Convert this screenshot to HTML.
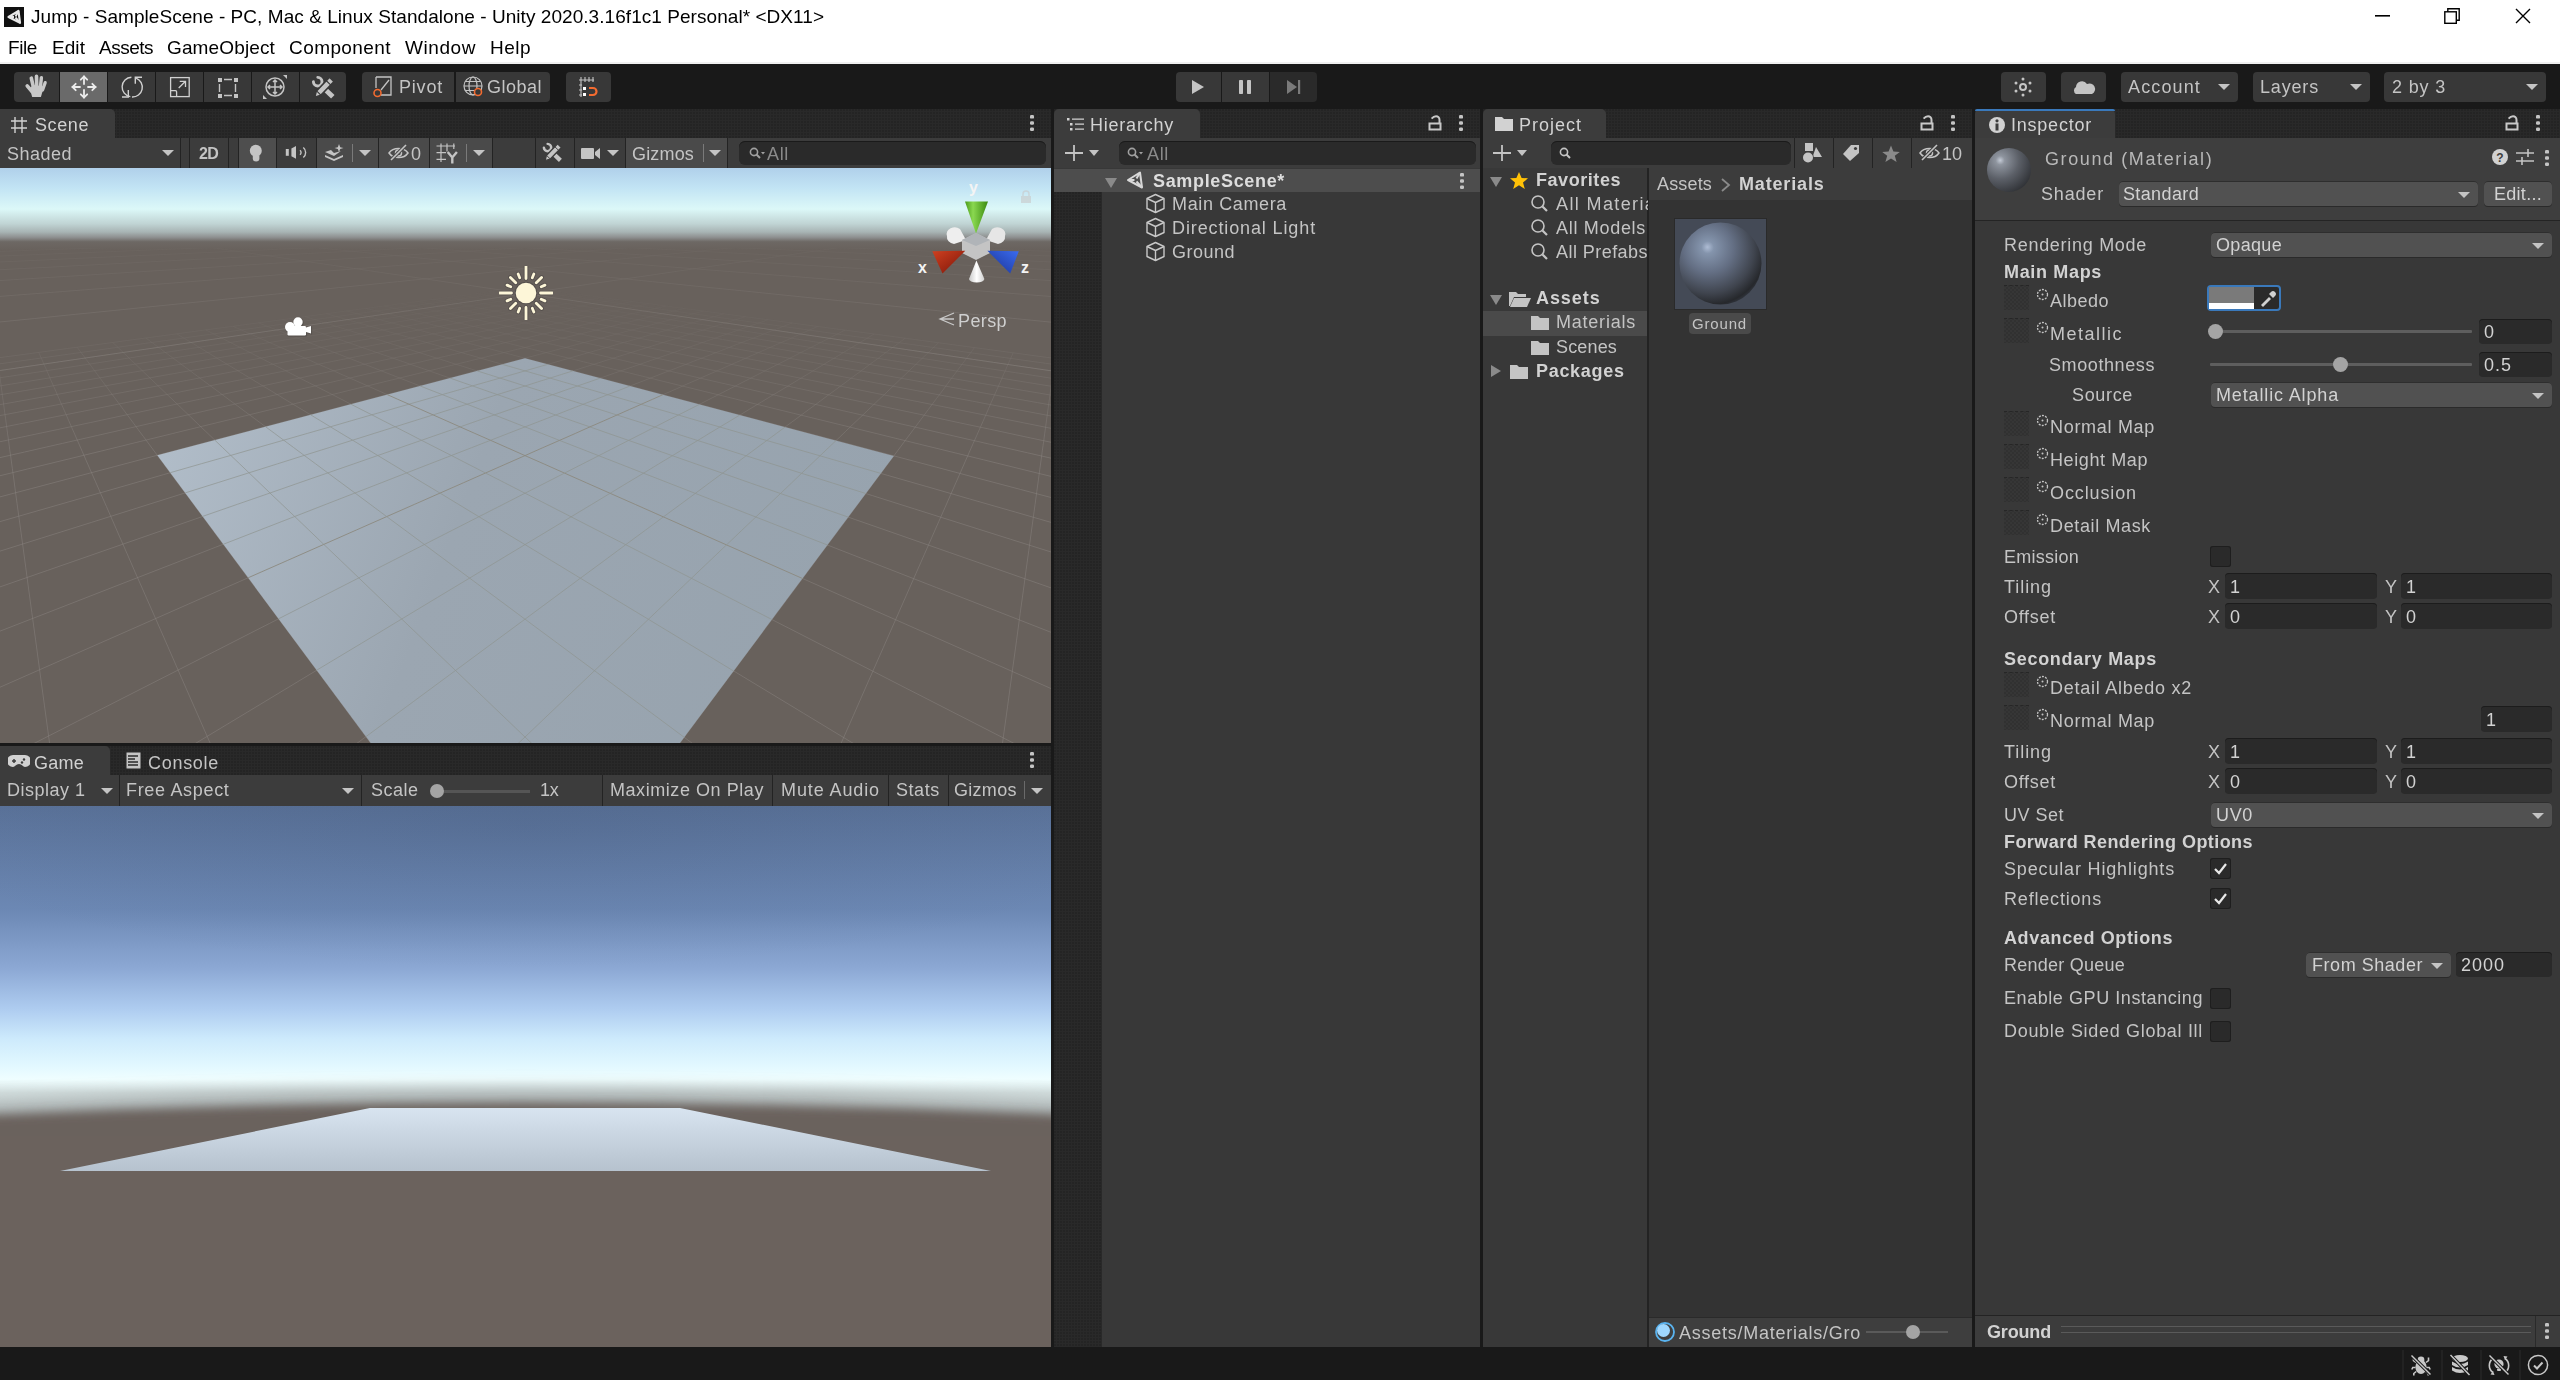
<!DOCTYPE html><html><head><meta charset="utf-8"><style>html,body{margin:0;padding:0;width:2560px;height:1380px;overflow:hidden;background:#191919;}body>div,body>svg{position:absolute;}.t{position:absolute;white-space:nowrap;font-family:"Liberation Sans",sans-serif;will-change:transform;}</style></head><body>
<div style="left:0px;top:0px;width:2560px;height:62px;background:#ffffff;"></div>
<div style="left:0px;top:62px;width:2560px;height:2px;background:#f0f0f0;"></div>
<div style="left:4px;top:7px;width:20px;height:20px;background:#111111;"></div>
<svg style="left:4px;top:7px;" width="20" height="20" viewBox="0 0 20 20"><path d="M4.5 10 L14.5 4 L16 15.8 Z" fill="none" stroke="#e8e8e8" stroke-width="2.2" stroke-linejoin="round"/><path d="M4.5 10 H10 M14.5 4 L11.5 9.5 M16 15.8 L11.5 10.5" stroke="#e8e8e8" stroke-width="2"/></svg>
<div class="t" style="left:31px;top:7.32px;font-size:19px;line-height:19px;color:#000000;letter-spacing:0.052px;">Jump - SampleScene - PC, Mac &amp; Linux Standalone - Unity 2020.3.16f1c1 Personal* &lt;DX11&gt;</div>
<div class="t" style="left:8px;top:38.42px;font-size:19px;line-height:19px;color:#000000;letter-spacing:-0.403px;">File</div>
<div class="t" style="left:52px;top:38.42px;font-size:19px;line-height:19px;color:#000000;letter-spacing:0.065px;">Edit</div>
<div class="t" style="left:99px;top:38.42px;font-size:19px;line-height:19px;color:#000000;letter-spacing:-0.503px;">Assets</div>
<div class="t" style="left:167px;top:38.42px;font-size:19px;line-height:19px;color:#000000;letter-spacing:0.135px;">GameObject</div>
<div class="t" style="left:289px;top:38.42px;font-size:19px;line-height:19px;color:#000000;letter-spacing:0.420px;">Component</div>
<div class="t" style="left:405px;top:38.42px;font-size:19px;line-height:19px;color:#000000;letter-spacing:0.571px;">Window</div>
<div class="t" style="left:490px;top:38.42px;font-size:19px;line-height:19px;color:#000000;letter-spacing:0.481px;">Help</div>
<svg style="left:2375px;top:14px;" width="16" height="4" viewBox="0 0 16 4"><rect x="0" y="1" width="15" height="1.6" fill="#000"/></svg>
<svg style="left:2444px;top:8px;" width="16" height="16" viewBox="0 0 16 16"><rect x="0.8" y="3.8" width="11.5" height="11.5" fill="none" stroke="#000" stroke-width="1.4"/><path d="M3.8 3.8 V0.8 H15.2 V12.2 H12.3" fill="none" stroke="#000" stroke-width="1.4"/></svg>
<svg style="left:2515px;top:8px;" width="16" height="16" viewBox="0 0 16 16"><path d="M1 1 L15 15 M15 1 L1 15" stroke="#000" stroke-width="1.4"/></svg>
<div style="left:0px;top:64px;width:2560px;height:45px;background:#191919;"></div>
<div style="left:14px;top:72px;width:45px;height:30px;background:#383838;border-radius:4px 0px 0px 4px;"></div>
<div style="left:60px;top:72px;width:47px;height:30px;background:#6a6a6a;border-radius:0px 0px 0px 0px;"></div>
<div style="left:108px;top:72px;width:47px;height:30px;background:#383838;border-radius:0px 0px 0px 0px;"></div>
<div style="left:156px;top:72px;width:47px;height:30px;background:#383838;border-radius:0px 0px 0px 0px;"></div>
<div style="left:204px;top:72px;width:47px;height:30px;background:#383838;border-radius:0px 0px 0px 0px;"></div>
<div style="left:252px;top:72px;width:47px;height:30px;background:#383838;border-radius:0px 0px 0px 0px;"></div>
<div style="left:300px;top:72px;width:46px;height:30px;background:#383838;border-radius:0px 4px 4px 0px;"></div>
<svg style="left:24px;top:74px;" width="28" height="26" viewBox="0 0 28 26"><g stroke="#c8c8c8" stroke-linecap="round"><path d="M3.2 11.8 L8 17.5" stroke-width="3.6"/><path d="M7.3 4.2 L9.6 14" stroke-width="3.6"/><path d="M12.5 2.4 L12.8 14" stroke-width="3.6"/><path d="M17.4 3.8 L16.3 14" stroke-width="3.4"/><path d="M21.2 8.6 L18.6 16" stroke-width="3.2"/></g><path d="M5.8 14.5 L9 11 L20 12.5 L16.9 23 H8.2 Z" fill="#c8c8c8"/></svg>
<svg style="left:70px;top:74px;" width="28" height="26" viewBox="0 0 28 26"><g stroke="#ececec" stroke-width="1.8" fill="none" stroke-linecap="round"><path d="M14 2.5 V10 M14 16 V23.5 M2.5 13 H10 M18 13 H25.5"/><path d="M10.8 5.7 L14 2.5 L17.2 5.7 M10.8 20.3 L14 23.5 L17.2 20.3 M5.7 9.8 L2.5 13 L5.7 16.2 M22.3 9.8 L25.5 13 L22.3 16.2"/></g></svg>
<svg style="left:118px;top:74px;" width="28" height="26" viewBox="0 0 28 26"><g stroke="#d0d0d0" stroke-width="1.4" fill="none"><path d="M13.4 3.2 A9.8 9.8 0 0 0 12.3 22.65"/><path d="M10.3 16 V23 H4"/><path d="M14 23 A9.8 9.8 0 0 0 18.1 4.1"/><path d="M17.3 9.7 V3.2 H24"/></g></svg>
<svg style="left:166px;top:74px;" width="28" height="26" viewBox="0 0 28 26"><g stroke="#d0d0d0" stroke-width="1.3" fill="none"><rect x="4.6" y="3.6" width="18.6" height="19"/><path d="M4.6 16.6 H9.5 Q10.6 16.6 10.6 17.7 V22.6"/><path d="M12.7 14 L19.5 7.3 M13.7 7.3 H19.5 V13"/></g></svg>
<svg style="left:214px;top:74px;" width="28" height="26" viewBox="0 0 28 26"><g fill="#c4c4c4"><rect x="4" y="4" width="4" height="4"/><rect x="20" y="4" width="4" height="4"/><rect x="4" y="20" width="4" height="4"/><rect x="20" y="20" width="4" height="4"/></g><g stroke="#c4c4c4" stroke-width="1.4"><path d="M10 5.5 H18 M10 21.5 H18 M5.5 10 V18 M21.5 10 V18"/></g></svg>
<svg style="left:262px;top:74px;" width="28" height="26" viewBox="0 0 28 26"><g stroke="#c4c4c4" stroke-width="1.5" fill="none"><circle cx="13" cy="13" r="9"/><path d="M13 6 V20 M6 13 H20 M11 8 L13 6 L15 8 M11 18 L13 20 L15 18 M8 11 L6 13 L8 15 M18 11 L20 13 L18 15"/></g><path d="M21 1 H25 V5 Z M1 25 V21 L5 25 Z" fill="#c4c4c4"/></svg>
<svg style="left:310px;top:74px;" width="28" height="26" viewBox="0 0 28 26"><path d="M11 11.5 L22.8 22.8" stroke="#c4c4c4" stroke-width="5"/><path d="M3.4 7.8 A4.3 4.3 0 1 0 7.8 3.4" stroke="#c4c4c4" stroke-width="2.9" fill="none" stroke-linecap="round"/><path d="M4.70 23.20 L10.75 21.38 L24.04 7.55 L19.56 3.25 L6.27 17.09 Z" fill="#c4c4c4" stroke="#383838" stroke-width="1.6" stroke-linejoin="round"/><path d="M11.67 21.86 L5.76 16.18 M21.43 11.70 L15.52 6.02" stroke="#383838" stroke-width="1.1"/></svg>
<div style="left:362px;top:72px;width:92px;height:30px;background:#383838;border-radius:4px 0 0 4px;"></div>
<div style="left:456px;top:72px;width:94px;height:30px;background:#383838;border-radius:0 4px 4px 0;"></div>
<svg style="left:372px;top:76px;" width="24" height="24" viewBox="0 0 24 24"><path d="M4 1 H19 V19 H9" fill="none" stroke="#c4c4c4" stroke-width="1.3"/><path d="M4 1 V12" stroke="#c4c4c4" stroke-width="1.3"/><path d="M9 14 L17 4" stroke="#c4c4c4" stroke-width="1.3"/><circle cx="5.5" cy="17" r="3.5" fill="none" stroke="#f26b30" stroke-width="1.6"/></svg>
<div class="t" style="left:399px;top:77.76px;font-size:18px;line-height:18px;color:#c4c4c4;letter-spacing:0.797px;">Pivot</div>
<svg style="left:463px;top:76px;" width="24" height="24" viewBox="0 0 24 24"><g fill="none" stroke="#c4c4c4" stroke-width="1.2"><circle cx="10" cy="10" r="9"/><ellipse cx="10" cy="10" rx="4" ry="9"/><path d="M1 10 H19 M2.5 5.5 H17.5 M2.5 14.5 H17.5"/></g><circle cx="15" cy="16" r="3.5" fill="#383838" stroke="#f26b30" stroke-width="1.6"/></svg>
<div class="t" style="left:487px;top:77.76px;font-size:18px;line-height:18px;color:#c4c4c4;letter-spacing:0.495px;">Global</div>
<div style="left:566px;top:72px;width:45px;height:30px;background:#383838;border-radius:4px;"></div>
<svg style="left:576px;top:76px;" width="26" height="24" viewBox="0 0 26 24"><g stroke="#c4c4c4" stroke-width="1.1"><path d="M3 4 H18 M3 9 H6 M3 14 H6 M3 19 H6 M5 1 V21 M9 1 V6 M13 1 V6 M17 1 V6"/></g><rect x="7" y="11" width="3" height="3" fill="#fff"/><rect x="7" y="17" width="3" height="3" fill="#fff"/><path d="M13 12 H17 A3.5 3.5 0 0 1 17 19 H13" fill="none" stroke="#f26b30" stroke-width="2.2"/></svg>
<div style="left:1176px;top:72px;width:45px;height:30px;background:#383838;border-radius:4px 0 0 4px;"></div>
<div style="left:1222px;top:72px;width:47px;height:30px;background:#383838;"></div>
<div style="left:1270px;top:72px;width:47px;height:30px;background:#2a2a2a;border-radius:0 4px 4px 0;"></div>
<svg style="left:1190px;top:78px;" width="16" height="18" viewBox="0 0 16 18"><path d="M2 2 L14 9 L2 16 Z" fill="#c4c4c4"/></svg>
<svg style="left:1236px;top:78px;" width="20" height="18" viewBox="0 0 20 18"><rect x="3" y="2" width="4" height="14" rx="0.8" fill="#c4c4c4"/><rect x="11" y="2" width="4" height="14" rx="0.8" fill="#c4c4c4"/></svg>
<svg style="left:1285px;top:78px;" width="20" height="18" viewBox="0 0 20 18"><path d="M2 2 L12 9 L2 16 Z" fill="#7a7a7a"/><rect x="13" y="2" width="2.2" height="14" fill="#7a7a7a"/></svg>
<div style="left:2001px;top:72px;width:45px;height:30px;background:#383838;border-radius:4px;"></div>
<svg style="left:2012px;top:76px;" width="24" height="24" viewBox="0 0 24 24"><g fill="#c4c4c4"><circle cx="11" cy="11" r="3" fill="none" stroke="#c4c4c4" stroke-width="2"/><circle cx="11" cy="3" r="1.5"/><circle cx="11" cy="19" r="1.5"/><circle cx="4" cy="7" r="1.5"/><circle cx="18" cy="7" r="1.5"/><circle cx="4" cy="15" r="1.5"/><circle cx="18" cy="15" r="1.5"/></g></svg>
<div style="left:2061px;top:72px;width:45px;height:30px;background:#383838;border-radius:4px;"></div>
<svg style="left:2071px;top:77px;" width="26" height="20" viewBox="0 0 26 20"><path d="M5 17 A4 4 0 0 1 5 10 A6 6 0 0 1 16 7 A4.5 4.5 0 0 1 21 17 Z" fill="#c4c4c4"/></svg>
<div style="left:2121px;top:72px;width:117px;height:30px;background:#383838;border-radius:4px;"></div>
<div class="t" style="left:2128px;top:78.26px;font-size:18px;line-height:18px;color:#c4c4c4;letter-spacing:1.138px;">Account</div>
<svg style="left:2218px;top:83px;" width="12" height="8" viewBox="0 0 12 8"><path d="M0 1 L12 1 L6 7 Z" fill="#c4c4c4"/></svg>
<div style="left:2253px;top:72px;width:117px;height:30px;background:#383838;border-radius:4px;"></div>
<div class="t" style="left:2260px;top:78.26px;font-size:18px;line-height:18px;color:#c4c4c4;letter-spacing:0.830px;">Layers</div>
<svg style="left:2350px;top:83px;" width="12" height="8" viewBox="0 0 12 8"><path d="M0 1 L12 1 L6 7 Z" fill="#c4c4c4"/></svg>
<div style="left:2384px;top:72px;width:162px;height:30px;background:#383838;border-radius:4px;"></div>
<div class="t" style="left:2392px;top:78.26px;font-size:18px;line-height:18px;color:#c4c4c4;letter-spacing:0.828px;">2 by 3</div>
<svg style="left:2526px;top:83px;" width="12" height="8" viewBox="0 0 12 8"><path d="M0 1 L12 1 L6 7 Z" fill="#c4c4c4"/></svg>
<div style="left:0px;top:109px;width:1051px;height:29px;background-color:#292929;background-image:radial-gradient(circle at 1px 1px,#212121 0.6px,transparent 0.9px);background-size:3px 3px;"></div>
<div style="left:0px;top:109px;width:115px;height:29px;background:#3c3c3c;border-radius:0 5px 0 0;"></div>
<svg style="left:10px;top:116px;" width="18" height="18" viewBox="0 0 18 18"><g stroke="#d2d2d2" stroke-width="1.4"><path d="M5 1 V17 M12 1 V17 M1 5 H17 M1 12 H17"/></g></svg>
<div class="t" style="left:35px;top:115.76px;font-size:18px;line-height:18px;color:#d2d2d2;letter-spacing:0.593px;">Scene</div>
<svg style="left:1029px;top:114px;" width="6" height="18" viewBox="0 0 6 18"><rect x="1" y="1" width="4" height="3.6" rx="1.2" fill="#c4c4c4"/><rect x="1" y="7.2" width="4" height="3.6" rx="1.2" fill="#c4c4c4"/><rect x="1" y="13.4" width="4" height="3.6" rx="1.2" fill="#c4c4c4"/></svg>
<div style="left:0px;top:138px;width:1051px;height:30px;background:#3c3c3c;"></div>
<div class="t" style="left:7px;top:144.76px;font-size:18px;line-height:18px;color:#c4c4c4;letter-spacing:0.491px;">Shaded</div>
<svg style="left:162px;top:149px;" width="12" height="8" viewBox="0 0 12 8"><path d="M0 1 L12 1 L6 7 Z" fill="#c4c4c4"/></svg>
<div style="left:180px;top:138px;width:1px;height:30px;background:#232323;"></div>
<div style="left:189px;top:138px;width:1px;height:30px;background:#232323;"></div>
<div class="t" style="left:199px;top:145.96px;font-size:16px;line-height:16px;color:#c4c4c4;letter-spacing:-0.726px;font-weight:bold;">2D</div>
<div style="left:228px;top:138px;width:1px;height:30px;background:#232323;"></div>
<div style="left:238px;top:138px;width:1px;height:30px;background:#232323;"></div>
<div style="left:239px;top:138px;width:37px;height:30px;background:#4e4e4e;"></div>
<svg style="left:248px;top:143px;" width="18" height="22" viewBox="0 0 18 22"><circle cx="7.8" cy="7.7" r="6" fill="#c4c4c4"/><path d="M4.8 12.5 H11.4 V15.5 A3.3 3 0 0 1 4.8 15.5 Z" fill="#c4c4c4"/></svg>
<div style="left:276px;top:138px;width:1px;height:30px;background:#232323;"></div>
<svg style="left:284px;top:144px;" width="24" height="18" viewBox="0 0 24 18"><rect x="1.8" y="5" width="3" height="6.8" fill="#c4c4c4"/><path d="M7.4 4.5 L12 2 V14.8 L7.4 12.3 Z" fill="#c4c4c4"/><path d="M16 6.2 A3 3 0 0 1 16 10.8 M19.3 3.5 A6.5 6.5 0 0 1 19.3 13.5" stroke="#c4c4c4" stroke-width="1.4" fill="none"/></svg>
<div style="left:316px;top:138px;width:1px;height:30px;background:#232323;"></div>
<div style="left:317px;top:138px;width:61px;height:30px;background:#4a4a4a;"></div>
<div style="left:378px;top:138px;width:1px;height:30px;background:#232323;"></div>
<svg style="left:323px;top:143px;" width="24" height="20" viewBox="0 0 24 20"><path d="M2 12 L11 16 L20 12 L20 14 L11 18 L2 14 Z M2 9 L8 7 L11 10 L18 8 L11 13 Z" fill="#c4c4c4"/><path d="M16 1 L17.2 4.2 L20.5 5 L17.2 6 L16 9 L14.8 6 L11.5 5 L14.8 4.2 Z" fill="#c4c4c4"/></svg>
<div style="left:352px;top:144px;width:1px;height:18px;background:#7a7a7a;"></div>
<svg style="left:359px;top:149px;" width="12" height="8" viewBox="0 0 12 8"><path d="M0 1 L12 1 L6 7 Z" fill="#c4c4c4"/></svg>
<div style="left:379px;top:138px;width:50px;height:30px;background:#4a4a4a;"></div>
<div style="left:429px;top:138px;width:1px;height:30px;background:#232323;"></div>
<svg style="left:387px;top:143px;" width="24" height="20" viewBox="0 0 24 20"><path d="M2 10 C6 4 17 4 21 10 C17 16 6 16 2 10 Z" fill="none" stroke="#c4c4c4" stroke-width="1.5"/><circle cx="11.5" cy="10" r="3" fill="none" stroke="#c4c4c4" stroke-width="1.5"/><path d="M4 17 L19 2" stroke="#4a4a4a" stroke-width="3.5"/><path d="M4 17 L19 2" stroke="#c4c4c4" stroke-width="1.6"/></svg>
<div class="t" style="left:411px;top:144.76px;font-size:18px;line-height:18px;color:#c4c4c4;letter-spacing:-0.010px;">0</div>
<div style="left:430px;top:138px;width:62px;height:30px;background:#4a4a4a;"></div>
<div style="left:492px;top:138px;width:1px;height:30px;background:#232323;"></div>
<svg style="left:436px;top:143px;" width="24" height="22" viewBox="0 0 24 22"><g stroke="#c4c4c4" stroke-width="1.2"><path d="M0.5 3 H19 M0.5 9.7 H10 M0.5 16.3 H10 M5 0.5 V19 M11 0.5 V8.5 M17.8 0.5 V6"/></g><path d="M11.7 9 L16.3 14.5 L20.9 9 M16.3 14.5 V20.5" stroke="#c4c4c4" stroke-width="2.4" fill="none"/></svg>
<div style="left:466px;top:144px;width:1px;height:18px;background:#7a7a7a;"></div>
<svg style="left:473px;top:149px;" width="12" height="8" viewBox="0 0 12 8"><path d="M0 1 L12 1 L6 7 Z" fill="#c4c4c4"/></svg>
<div style="left:535px;top:138px;width:1px;height:30px;background:#232323;"></div>
<svg style="left:541px;top:141px;transform:scale(0.85);transform-origin:0 0;" width="28" height="26" viewBox="0 0 28 26"><path d="M11 11.5 L22.8 22.8" stroke="#c4c4c4" stroke-width="5"/><path d="M3.4 7.8 A4.3 4.3 0 1 0 7.8 3.4" stroke="#c4c4c4" stroke-width="2.9" fill="none" stroke-linecap="round"/><path d="M4.70 23.20 L10.75 21.38 L24.04 7.55 L19.56 3.25 L6.27 17.09 Z" fill="#c4c4c4" stroke="#3c3c3c" stroke-width="1.6" stroke-linejoin="round"/><path d="M11.67 21.86 L5.76 16.18 M21.43 11.70 L15.52 6.02" stroke="#3c3c3c" stroke-width="1.1"/></svg>
<div style="left:574px;top:138px;width:1px;height:30px;background:#232323;"></div>
<svg style="left:580px;top:146px;" width="24" height="14" viewBox="0 0 24 14"><rect x="1" y="2" width="13" height="11" rx="1" fill="#c4c4c4"/><path d="M15 6 L20 2 V13 L15 9 Z" fill="#c4c4c4"/></svg>
<svg style="left:607px;top:149px;" width="12" height="8" viewBox="0 0 12 8"><path d="M0 1 L12 1 L6 7 Z" fill="#c4c4c4"/></svg>
<div style="left:625px;top:138px;width:1px;height:30px;background:#232323;"></div>
<div style="left:626px;top:138px;width:101px;height:30px;background:#4a4a4a;"></div>
<div style="left:727px;top:138px;width:1px;height:30px;background:#232323;"></div>
<div class="t" style="left:632px;top:144.76px;font-size:18px;line-height:18px;color:#c4c4c4;letter-spacing:0.166px;">Gizmos</div>
<div style="left:703px;top:144px;width:1px;height:18px;background:#7a7a7a;"></div>
<svg style="left:709px;top:149px;" width="12" height="8" viewBox="0 0 12 8"><path d="M0 1 L12 1 L6 7 Z" fill="#c4c4c4"/></svg>
<div style="left:739px;top:141px;width:307px;height:24px;background:#2a2a2a;border-radius:6px;box-shadow:inset 0 1px 0 #1a1a1a;"></div>
<svg style="left:748px;top:146px;" width="20" height="14" viewBox="0 0 20 14"><circle cx="6" cy="6" r="3.6" fill="none" stroke="#a0a0a0" stroke-width="1.6"/><path d="M8.5 8.5 L12 12" stroke="#a0a0a0" stroke-width="2"/><path d="M13 6 L17 6 L15 8.5 Z" fill="#a0a0a0"/></svg>
<div class="t" style="left:767px;top:144.76px;font-size:18px;line-height:18px;color:#8a8a8a;letter-spacing:0.665px;">All</div>
<svg style="left:0px;top:168px;" width="1051" height="575" viewBox="0 0 1051 575"><defs><linearGradient id="sky" x1="0" y1="0" x2="0" y2="1"><stop offset="0" stop-color="#b0d0ea"/><stop offset="0.244" stop-color="#c2e4f4"/><stop offset="0.5" stop-color="#dcf8f8"/><stop offset="0.68" stop-color="#c0d4d4"/><stop offset="0.78" stop-color="#a8b4b4"/><stop offset="0.845" stop-color="#8e9090"/><stop offset="0.9" stop-color="#6d6864"/><stop offset="1" stop-color="#68615c"/></linearGradient><linearGradient id="pl" x1="0" y1="0" x2="1" y2="0.3"><stop offset="0" stop-color="#b3bfcb"/><stop offset="0.45" stop-color="#9ba6b1"/><stop offset="1" stop-color="#97a3ae"/></linearGradient><linearGradient id="fade" x1="0" y1="0" x2="0" y2="1"><stop offset="0" stop-color="#fff" stop-opacity="0"/><stop offset="0.2" stop-color="#fff" stop-opacity="0"/><stop offset="0.5" stop-color="#fff" stop-opacity="1"/><stop offset="1" stop-color="#fff" stop-opacity="1"/></linearGradient><mask id="fm"><rect x="0" y="0" width="1051" height="575" fill="url(#fade)"/></mask><linearGradient id="fade2" x1="0" y1="0" x2="0" y2="1"><stop offset="0" stop-color="#fff" stop-opacity="0"/><stop offset="0.1" stop-color="#fff" stop-opacity="0"/><stop offset="0.3" stop-color="#fff" stop-opacity="0.8"/><stop offset="1" stop-color="#fff" stop-opacity="0.8"/></linearGradient><mask id="fm2"><rect x="0" y="0" width="1051" height="575" fill="url(#fade2)"/></mask><clipPath id="gclip"><rect x="0" y="80" width="1051" height="495"/></clipPath></defs><rect x="0" y="0" width="1051" height="575" fill="#68615c"/><rect x="0" y="0" width="1051" height="82" fill="url(#sky)"/><g clip-path="url(#gclip)" mask="url(#fm)"><path d="M525.0 119.0 L518.6 119.9 L512.0 120.7 L505.2 121.6 L498.3 122.6 L491.3 123.5 L484.0 124.5 L476.6 125.5 L469.0 126.5 L461.1 127.6 L453.1 128.7 L444.9 129.8 L436.4 130.9 L427.7 132.1 L418.8 133.3 L409.6 134.5 L400.2 135.8 L390.5 137.1 L380.5 138.4 L370.2 139.8 L359.6 141.2 L348.7 142.7 L337.4 144.2 L325.8 145.8 L313.8 147.4 L301.5 149.1 L288.7 150.8 L275.5 152.6 L261.8 154.4 L247.6 156.3 L233.0 158.3 L217.8 160.3 L202.1 162.4 L185.8 164.6 L168.8 166.9 L151.2 169.3 L132.9 171.7 L113.9 174.3 L94.1 177.0 L73.4 179.7 L51.9 182.6 L29.4 185.7 L5.9 188.8 L-18.7 192.1 L-44.4 195.6 L-71.4 199.2 L-99.7 203.0 L-129.5 207.0 L-160.8 211.3 L-193.7 215.7 L-228.5 220.4 L-265.2 225.3 L-304.1 230.5 L-345.3 236.1 L-389.0 242.0 L-435.5 248.2 L-485.1 254.9 L-538.0 262.0 L-594.6 269.6 L-655.4 277.8 L-720.7 286.6" stroke="#8a8480" stroke-width="1" stroke-opacity="0.5" fill="none"/><path d="M525.0 119.0 L531.4 119.9 L538.0 120.7 L544.8 121.7 L551.7 122.6 L558.7 123.5 L566.0 124.5 L573.4 125.5 L581.1 126.5 L588.9 127.6 L596.9 128.7 L605.2 129.8 L613.6 130.9 L622.3 132.1 L631.3 133.3 L640.5 134.6 L649.9 135.8 L659.7 137.1 L669.7 138.5 L680.0 139.9 L690.6 141.3 L701.6 142.8 L712.9 144.3 L724.5 145.9 L736.5 147.5 L748.9 149.2 L761.8 150.9 L775.1 152.7 L788.8 154.5 L803.0 156.5 L817.7 158.4 L832.9 160.5 L848.8 162.6 L865.2 164.8 L882.2 167.1 L899.9 169.5 L918.3 172.0 L937.5 174.6 L957.4 177.3 L978.2 180.1 L999.9 183.0 L1022.6 186.1 L1046.3 189.3 L1071.1 192.6 L1097.1 196.1 L1124.3 199.8 L1152.9 203.6 L1183.0 207.7 L1214.6 211.9 L1247.9 216.4 L1283.1 221.2 L1320.3 226.2 L1359.7 231.5 L1401.5 237.1 L1445.8 243.1 L1493.1 249.5 L1543.4 256.3 L1597.2 263.5 L1654.9 271.3 L1716.8 279.6 L1783.4 288.6" stroke="#8a8480" stroke-width="1" stroke-opacity="0.5" fill="none"/><path d="M536.5 120.5 L530.0 121.4 L523.4 122.4 L516.7 123.3 L509.8 124.3 L502.7 125.3 L495.4 126.3 L488.0 127.3 L480.3 128.4 L472.5 129.5 L464.4 130.6 L456.1 131.8 L447.6 133.0 L438.9 134.2 L429.9 135.5 L420.6 136.8 L411.1 138.1 L401.3 139.5 L391.2 140.9 L380.8 142.4 L370.1 143.9 L359.0 145.4 L347.6 147.0 L335.8 148.7 L323.6 150.4 L311.1 152.1 L298.1 154.0 L284.6 155.9 L270.7 157.8 L256.2 159.8 L241.3 161.9 L225.8 164.1 L209.6 166.4 L192.9 168.7 L175.5 171.2 L157.4 173.7 L138.6 176.3 L119.0 179.1 L98.5 182.0 L77.1 185.0 L54.8 188.1 L31.5 191.4 L7.1 194.8 L-18.5 198.4 L-45.4 202.1 L-73.6 206.1 L-103.3 210.3 L-134.5 214.6 L-167.5 219.3 L-202.2 224.1 L-239.0 229.3 L-278.0 234.8 L-319.4 240.6 L-363.4 246.7 L-410.2 253.3 L-460.2 260.3 L-513.7 267.8 L-571.0 275.9 L-632.6 284.5 L-699.0 293.8 L-770.8 303.9" stroke="#8a8480" stroke-width="1" stroke-opacity="0.5" fill="none"/><path d="M513.5 120.5 L520.0 121.4 L526.6 122.4 L533.3 123.3 L540.2 124.3 L547.3 125.3 L554.6 126.3 L562.0 127.3 L569.7 128.4 L577.6 129.5 L585.6 130.7 L593.9 131.8 L602.4 133.0 L611.2 134.3 L620.2 135.5 L629.5 136.8 L639.0 138.2 L648.8 139.5 L658.9 141.0 L669.4 142.4 L680.1 143.9 L691.2 145.5 L702.7 147.1 L714.5 148.8 L726.7 150.5 L739.3 152.3 L752.4 154.1 L765.9 156.0 L779.9 158.0 L794.4 160.0 L809.4 162.1 L825.0 164.3 L841.2 166.6 L858.0 168.9 L875.5 171.4 L893.7 174.0 L912.6 176.6 L932.4 179.4 L953.0 182.3 L974.5 185.3 L997.0 188.5 L1020.5 191.8 L1045.1 195.2 L1070.9 198.9 L1098.0 202.7 L1126.5 206.7 L1156.5 210.9 L1188.1 215.3 L1221.4 220.0 L1256.6 225.0 L1293.8 230.2 L1333.3 235.7 L1375.2 241.6 L1419.8 247.9 L1467.3 254.6 L1518.1 261.7 L1572.5 269.4 L1630.8 277.6 L1693.6 286.4 L1761.3 295.9 L1834.6 306.2" stroke="#8a8480" stroke-width="1" stroke-opacity="0.5" fill="none"/><path d="M548.4 122.1 L542.0 123.1 L535.4 124.1 L528.6 125.0 L521.7 126.1 L514.6 127.1 L507.3 128.2 L499.9 129.3 L492.2 130.4 L484.3 131.5 L476.2 132.7 L467.9 133.9 L459.4 135.2 L450.6 136.5 L441.5 137.8 L432.2 139.2 L422.6 140.6 L412.7 142.0 L402.5 143.5 L392.0 145.1 L381.1 146.7 L369.9 148.3 L358.4 150.0 L346.4 151.7 L334.1 153.5 L321.3 155.4 L308.0 157.4 L294.3 159.4 L280.1 161.4 L265.4 163.6 L250.1 165.8 L234.2 168.2 L217.7 170.6 L200.6 173.1 L182.7 175.7 L164.1 178.5 L144.7 181.3 L124.4 184.3 L103.3 187.4 L81.2 190.6 L58.0 194.0 L33.8 197.5 L8.3 201.3 L-18.4 205.2 L-46.4 209.3 L-76.0 213.6 L-107.2 218.2 L-140.0 223.0 L-174.8 228.1 L-211.6 233.5 L-250.7 239.2 L-292.2 245.3 L-336.4 251.8 L-383.6 258.7 L-434.0 266.1 L-488.0 274.0 L-546.0 282.5 L-608.5 291.6 L-676.0 301.5 L-749.2 312.2 L-828.7 323.9" stroke="#8a8480" stroke-width="1" stroke-opacity="0.5" fill="none"/><path d="M501.6 122.1 L508.0 123.1 L514.6 124.0 L521.4 125.0 L528.3 126.1 L535.4 127.1 L542.7 128.2 L550.1 129.3 L557.8 130.4 L565.7 131.5 L573.8 132.7 L582.1 134.0 L590.7 135.2 L599.5 136.5 L608.6 137.8 L617.9 139.2 L627.5 140.6 L637.4 142.1 L647.6 143.6 L658.2 145.1 L669.0 146.7 L680.3 148.4 L691.9 150.1 L703.8 151.8 L716.2 153.7 L729.1 155.5 L742.4 157.5 L756.1 159.5 L770.4 161.6 L785.2 163.8 L800.5 166.0 L816.5 168.4 L833.1 170.8 L850.3 173.3 L868.3 176.0 L887.0 178.7 L906.5 181.6 L926.9 184.6 L948.2 187.7 L970.4 191.0 L993.8 194.4 L1018.2 198.0 L1043.8 201.7 L1070.8 205.7 L1099.1 209.9 L1128.9 214.2 L1160.4 218.9 L1193.7 223.7 L1228.8 228.9 L1266.1 234.4 L1305.6 240.2 L1347.7 246.4 L1392.5 252.9 L1440.3 260.0 L1491.5 267.5 L1546.4 275.5 L1605.4 284.2 L1669.0 293.5 L1737.8 303.6 L1812.5 314.6 L1893.7 326.5" stroke="#8a8480" stroke-width="1" stroke-opacity="0.5" fill="none"/><path d="M560.9 123.8 L554.4 124.8 L547.9 125.8 L541.1 126.8 L534.2 127.9 L527.1 129.0 L519.8 130.1 L512.4 131.3 L504.7 132.4 L496.8 133.7 L488.6 134.9 L480.3 136.2 L471.7 137.5 L462.9 138.9 L453.7 140.2 L444.4 141.7 L434.7 143.2 L424.7 144.7 L414.4 146.3 L403.8 147.9 L392.8 149.6 L381.5 151.3 L369.8 153.1 L357.6 155.0 L345.1 156.9 L332.1 158.9 L318.6 161.0 L304.7 163.1 L290.2 165.3 L275.2 167.6 L259.5 170.0 L243.3 172.5 L226.4 175.1 L208.8 177.8 L190.4 180.6 L171.2 183.6 L151.2 186.6 L130.3 189.8 L108.4 193.2 L85.5 196.7 L61.5 200.4 L36.2 204.3 L9.7 208.3 L-18.2 212.6 L-47.6 217.1 L-78.6 221.9 L-111.4 226.9 L-146.2 232.2 L-183.0 237.9 L-222.1 243.9 L-263.7 250.3 L-308.1 257.1 L-355.5 264.3 L-406.3 272.1 L-460.8 280.5 L-519.5 289.5 L-582.9 299.2 L-651.5 309.7 L-726.0 321.1 L-807.3 333.6 L-896.3 347.2" stroke="#8a8480" stroke-width="1" stroke-opacity="0.5" fill="none"/><path d="M489.2 123.8 L495.6 124.8 L502.1 125.8 L508.9 126.8 L515.8 127.9 L522.9 129.0 L530.2 130.1 L537.6 131.3 L545.3 132.4 L553.2 133.7 L561.4 134.9 L569.7 136.2 L578.3 137.5 L587.2 138.9 L596.3 140.3 L605.7 141.7 L615.4 143.2 L625.4 144.7 L635.7 146.3 L646.3 148.0 L657.3 149.7 L668.7 151.4 L680.4 153.2 L692.6 155.1 L705.2 157.0 L718.2 159.0 L731.7 161.1 L745.7 163.2 L760.2 165.5 L775.3 167.8 L791.0 170.2 L807.4 172.7 L824.4 175.3 L842.1 178.0 L860.5 180.9 L879.8 183.8 L899.9 186.9 L921.0 190.2 L943.0 193.6 L966.1 197.1 L990.3 200.8 L1015.7 204.7 L1042.4 208.8 L1070.6 213.2 L1100.3 217.7 L1131.6 222.5 L1164.7 227.6 L1199.8 233.0 L1237.1 238.8 L1276.6 244.8 L1318.8 251.3 L1363.8 258.2 L1411.8 265.6 L1463.4 273.5 L1518.8 282.0 L1578.5 291.2 L1642.9 301.1 L1712.8 311.9 L1788.9 323.5 L1871.9 336.3 L1962.8 350.3" stroke="#8a8480" stroke-width="1" stroke-opacity="0.5" fill="none"/><path d="M573.9 125.6 L567.5 126.6 L560.9 127.7 L554.2 128.7 L547.3 129.9 L540.2 131.0 L532.9 132.2 L525.4 133.4 L517.8 134.6 L509.8 135.9 L501.7 137.2 L493.3 138.5 L484.7 139.9 L475.8 141.4 L466.6 142.8 L457.2 144.3 L447.5 145.9 L437.4 147.5 L427.0 149.2 L416.3 150.9 L405.2 152.7 L393.7 154.5 L381.9 156.5 L369.6 158.4 L356.9 160.5 L343.7 162.6 L330.0 164.8 L315.7 167.1 L301.0 169.5 L285.6 171.9 L269.6 174.5 L253.0 177.2 L235.7 180.0 L217.6 182.9 L198.7 185.9 L179.0 189.1 L158.3 192.4 L136.7 195.9 L114.0 199.5 L90.2 203.4 L65.2 207.4 L38.9 211.6 L11.2 216.1 L-18.0 220.8 L-48.9 225.7 L-81.5 231.0 L-116.2 236.6 L-152.9 242.5 L-192.1 248.8 L-233.7 255.5 L-278.3 262.6 L-325.9 270.3 L-377.1 278.5 L-432.1 287.4 L-491.5 296.9 L-555.7 307.2 L-625.4 318.4 L-701.3 330.7 L-784.4 344.0 L-875.6 358.7 L-976.2 374.9" stroke="#8a8480" stroke-width="1" stroke-opacity="0.5" fill="none"/><path d="M476.1 125.6 L482.5 126.6 L489.1 127.6 L495.8 128.7 L502.7 129.8 L509.8 131.0 L517.1 132.2 L524.6 133.4 L532.2 134.6 L540.2 135.9 L548.3 137.2 L556.7 138.5 L565.3 139.9 L574.2 141.4 L583.4 142.9 L592.8 144.4 L602.6 145.9 L612.7 147.6 L623.1 149.2 L633.8 151.0 L644.9 152.8 L656.4 154.6 L668.3 156.5 L680.6 158.5 L693.4 160.6 L706.6 162.7 L720.3 164.9 L734.6 167.2 L749.4 169.6 L764.8 172.1 L780.9 174.7 L797.6 177.4 L815.0 180.2 L833.2 183.1 L852.2 186.2 L872.0 189.4 L892.8 192.7 L914.5 196.2 L937.3 199.9 L961.3 203.8 L986.5 207.8 L1013.0 212.1 L1040.9 216.6 L1070.4 221.4 L1101.5 226.4 L1134.5 231.7 L1169.5 237.3 L1206.7 243.3 L1246.2 249.7 L1288.4 256.5 L1333.5 263.8 L1381.8 271.6 L1433.7 279.9 L1489.6 288.9 L1549.9 298.7 L1615.2 309.2 L1686.2 320.6 L1763.7 333.1 L1848.4 346.8 L1941.7 361.8 L2044.7 378.4" stroke="#8a8480" stroke-width="1" stroke-opacity="0.5" fill="none"/><path d="M587.5 127.4 L581.1 128.5 L574.6 129.6 L567.9 130.7 L561.0 131.9 L553.9 133.1 L546.7 134.3 L539.2 135.6 L531.5 136.9 L523.6 138.2 L515.4 139.6 L507.0 141.0 L498.4 142.5 L489.5 144.0 L480.3 145.5 L470.8 147.2 L461.0 148.8 L450.8 150.5 L440.4 152.3 L429.6 154.1 L418.4 156.0 L406.8 158.0 L394.8 160.0 L382.3 162.1 L369.4 164.3 L356.0 166.6 L342.1 168.9 L327.6 171.4 L312.5 173.9 L296.9 176.6 L280.5 179.3 L263.5 182.2 L245.7 185.2 L227.1 188.3 L207.7 191.6 L187.3 195.1 L166.0 198.7 L143.6 202.5 L120.1 206.4 L95.4 210.6 L69.4 215.0 L41.9 219.7 L12.9 224.6 L-17.8 229.8 L-50.3 235.2 L-84.8 241.1 L-121.4 247.3 L-160.5 253.9 L-202.2 260.9 L-246.8 268.5 L-294.7 276.6 L-346.2 285.3 L-401.6 294.7 L-461.6 304.8 L-526.7 315.8 L-597.5 327.8 L-674.9 340.9 L-759.7 355.2 L-853.3 371.0 L-956.8 388.5 L-1072.2 408.0" stroke="#8a8480" stroke-width="1" stroke-opacity="0.5" fill="none"/><path d="M462.5 127.4 L468.9 128.5 L475.4 129.6 L482.1 130.7 L489.0 131.9 L496.1 133.1 L503.3 134.3 L510.8 135.6 L518.5 136.9 L526.4 138.2 L534.6 139.6 L543.0 141.0 L551.6 142.5 L560.5 144.0 L569.7 145.6 L579.2 147.2 L589.1 148.8 L599.2 150.6 L609.7 152.3 L620.5 154.2 L631.7 156.1 L643.3 158.0 L655.4 160.1 L667.9 162.2 L680.8 164.4 L694.2 166.7 L708.2 169.0 L722.7 171.5 L737.8 174.1 L753.6 176.7 L770.0 179.5 L787.1 182.4 L804.9 185.4 L823.6 188.6 L843.1 191.9 L863.6 195.4 L885.0 199.0 L907.6 202.8 L931.2 206.8 L956.1 211.1 L982.3 215.5 L1010.0 220.2 L1039.2 225.1 L1070.2 230.4 L1103.0 235.9 L1137.8 241.8 L1174.8 248.1 L1214.3 254.8 L1256.5 262.0 L1301.7 269.6 L1350.2 277.8 L1402.4 286.7 L1458.6 296.2 L1519.6 306.6 L1585.7 317.8 L1657.8 330.0 L1736.6 343.4 L1823.3 358.0 L1918.8 374.2 L2024.9 392.2 L2143.1 412.3" stroke="#8a8480" stroke-width="1" stroke-opacity="0.5" fill="none"/><path d="M601.7 129.3 L595.4 130.5 L588.9 131.6 L582.3 132.8 L575.4 134.0 L568.4 135.3 L561.1 136.6 L553.7 137.9 L546.0 139.3 L538.1 140.7 L529.9 142.1 L521.5 143.6 L512.8 145.2 L503.9 146.8 L494.7 148.4 L485.1 150.1 L475.3 151.9 L465.1 153.7 L454.6 155.6 L443.7 157.5 L432.3 159.5 L420.6 161.6 L408.5 163.8 L395.9 166.0 L382.8 168.4 L369.2 170.8 L355.0 173.3 L340.3 175.9 L324.9 178.7 L308.9 181.5 L292.2 184.5 L274.8 187.6 L256.5 190.9 L237.4 194.3 L217.4 197.8 L196.4 201.6 L174.4 205.5 L151.2 209.6 L126.8 214.0 L101.1 218.6 L73.9 223.4 L45.2 228.5 L14.8 234.0 L-17.5 239.7 L-51.8 245.8 L-88.4 252.3 L-127.3 259.3 L-169.0 266.7 L-213.7 274.7 L-261.7 283.2 L-313.4 292.4 L-369.3 302.4 L-429.8 313.2 L-495.7 324.9 L-567.6 337.8 L-646.4 351.8 L-733.2 367.3 L-829.1 384.4 L-935.8 403.4 L-1055.2 424.7 L-1189.6 448.6" stroke="#8a8480" stroke-width="1" stroke-opacity="0.5" fill="none"/><path d="M448.3 129.3 L454.6 130.4 L461.1 131.6 L467.8 132.8 L474.6 134.0 L481.7 135.3 L488.9 136.6 L496.4 137.9 L504.0 139.3 L511.9 140.7 L520.1 142.1 L528.5 143.6 L537.2 145.2 L546.1 146.8 L555.3 148.4 L564.9 150.1 L574.7 151.9 L584.9 153.7 L595.5 155.6 L606.4 157.6 L617.7 159.6 L629.5 161.7 L641.6 163.9 L654.3 166.1 L667.4 168.5 L681.0 170.9 L695.2 173.4 L710.0 176.1 L725.4 178.8 L741.5 181.7 L758.2 184.7 L775.7 187.8 L794.1 191.1 L813.2 194.5 L833.4 198.1 L854.5 201.9 L876.6 205.8 L899.9 210.0 L924.5 214.4 L950.4 219.0 L977.8 223.9 L1006.7 229.1 L1037.4 234.6 L1069.9 240.4 L1104.5 246.6 L1141.4 253.2 L1180.8 260.2 L1222.9 267.7 L1268.1 275.8 L1316.7 284.5 L1369.1 293.9 L1425.8 304.0 L1487.3 315.0 L1554.2 326.9 L1627.4 340.0 L1707.6 354.3 L1796.1 370.2 L1894.1 387.7 L2003.3 407.2 L2125.7 429.1 L2263.8 453.7" stroke="#8a8480" stroke-width="1" stroke-opacity="0.5" fill="none"/><path d="M616.7 131.3 L610.4 132.5 L604.0 133.7 L597.3 135.0 L590.5 136.3 L583.5 137.6 L576.3 139.0 L568.9 140.4 L561.2 141.8 L553.3 143.3 L545.2 144.8 L536.8 146.4 L528.1 148.0 L519.2 149.7 L509.9 151.5 L500.4 153.3 L490.5 155.1 L480.2 157.1 L469.6 159.1 L458.6 161.1 L447.3 163.3 L435.4 165.5 L423.2 167.8 L410.4 170.2 L397.1 172.7 L383.3 175.3 L368.9 178.0 L353.9 180.9 L338.3 183.8 L322.0 186.9 L304.9 190.1 L287.0 193.5 L268.3 197.0 L248.6 200.7 L228.0 204.6 L206.3 208.7 L183.5 213.0 L159.5 217.5 L134.1 222.3 L107.3 227.3 L78.9 232.7 L48.8 238.4 L16.8 244.4 L-17.2 250.8 L-53.6 257.7 L-92.4 265.0 L-134.0 272.8 L-178.6 281.2 L-226.7 290.3 L-278.6 300.1 L-334.8 310.7 L-395.9 322.2 L-462.6 334.7 L-535.5 348.5 L-615.8 363.6 L-704.4 380.3 L-802.9 398.9 L-912.9 419.6 L-1036.6 442.9 L-1176.7 469.3 L-1336.7 499.5" stroke="#8a8480" stroke-width="1" stroke-opacity="0.5" fill="none"/><path d="M433.4 131.3 L439.6 132.5 L446.1 133.7 L452.7 135.0 L459.5 136.3 L466.5 137.6 L473.7 138.9 L481.1 140.3 L488.8 141.8 L496.7 143.3 L504.8 144.8 L513.2 146.4 L521.9 148.0 L530.8 149.7 L540.1 151.5 L549.6 153.3 L559.5 155.2 L569.8 157.1 L580.4 159.1 L591.4 161.2 L602.8 163.3 L614.6 165.6 L626.9 167.9 L639.7 170.3 L653.0 172.8 L666.8 175.4 L681.3 178.2 L696.3 181.0 L712.0 184.0 L728.4 187.1 L745.5 190.3 L763.5 193.7 L782.3 197.2 L802.0 201.0 L822.7 204.9 L844.5 209.0 L867.4 213.3 L891.6 217.9 L917.1 222.7 L944.1 227.8 L972.7 233.2 L1003.1 239.0 L1035.3 245.0 L1069.6 251.5 L1106.3 258.5 L1145.5 265.9 L1187.5 273.8 L1232.7 282.3 L1281.3 291.5 L1333.9 301.5 L1390.9 312.2 L1452.9 323.9 L1520.5 336.7 L1594.7 350.7 L1676.4 366.2 L1766.8 383.3 L1867.3 402.3 L1979.9 423.5 L2106.6 447.5 L2250.5 474.7 L2415.3 505.8" stroke="#8a8480" stroke-width="1" stroke-opacity="0.5" fill="none"/><path d="M632.3 133.5 L626.1 134.7 L619.8 136.0 L613.2 137.3 L606.4 138.6 L599.5 140.0 L592.3 141.5 L584.9 142.9 L577.3 144.5 L569.4 146.0 L561.3 147.7 L553.0 149.3 L544.3 151.1 L535.4 152.8 L526.1 154.7 L516.5 156.6 L506.6 158.6 L496.3 160.6 L485.7 162.8 L474.6 165.0 L463.2 167.3 L451.2 169.7 L438.9 172.1 L426.0 174.7 L412.5 177.4 L398.5 180.2 L383.9 183.1 L368.7 186.2 L352.7 189.4 L336.0 192.7 L318.6 196.2 L300.3 199.8 L281.1 203.7 L260.9 207.7 L239.6 212.0 L217.2 216.4 L193.6 221.2 L168.6 226.2 L142.2 231.4 L114.2 237.0 L84.5 243.0 L52.8 249.3 L19.1 256.0 L-16.9 263.2 L-55.5 271.0 L-96.9 279.2 L-141.5 288.1 L-189.6 297.8 L-241.6 308.2 L-298.1 319.5 L-359.7 331.8 L-427.0 345.2 L-501.0 360.0 L-582.7 376.3 L-673.3 394.4 L-774.3 414.6 L-887.8 437.3 L-1016.1 463.0 L-1162.4 492.2 L-1330.6 525.8 L-1526.2 564.9" stroke="#8a8480" stroke-width="1" stroke-opacity="0.5" fill="none"/><path d="M417.7 133.4 L423.9 134.7 L430.3 135.9 L436.9 137.3 L443.6 138.6 L450.6 140.0 L457.7 141.4 L465.1 142.9 L472.7 144.4 L480.6 146.0 L488.7 147.6 L497.0 149.3 L505.7 151.0 L514.6 152.8 L523.9 154.7 L533.5 156.6 L543.4 158.6 L553.7 160.7 L564.3 162.8 L575.4 165.0 L586.9 167.3 L598.8 169.7 L611.2 172.2 L624.1 174.8 L637.6 177.5 L651.6 180.3 L666.3 183.2 L681.5 186.3 L697.5 189.5 L714.2 192.9 L731.8 196.4 L750.1 200.0 L769.4 203.9 L789.7 208.0 L811.1 212.3 L833.6 216.8 L857.3 221.5 L882.4 226.6 L909.0 231.9 L937.2 237.5 L967.1 243.5 L999.0 249.9 L1033.0 256.7 L1069.3 264.0 L1108.3 271.8 L1150.1 280.2 L1195.1 289.2 L1243.7 299.0 L1296.4 309.5 L1353.6 321.0 L1416.1 333.5 L1484.4 347.2 L1559.6 362.3 L1642.7 379.0 L1735.0 397.5 L1838.2 418.1 L1954.2 441.4 L2085.6 467.7 L2235.8 497.8 L2409.0 532.5 L2610.9 573.0" stroke="#8a8480" stroke-width="1" stroke-opacity="0.5" fill="none"/><path d="M648.8 135.7 L642.7 137.0 L636.4 138.3 L629.9 139.7 L623.2 141.1 L616.3 142.6 L609.2 144.1 L601.9 145.7 L594.3 147.3 L586.5 148.9 L578.4 150.7 L570.1 152.4 L561.5 154.3 L552.5 156.2 L543.3 158.1 L533.7 160.2 L523.8 162.3 L513.5 164.5 L502.8 166.7 L491.7 169.1 L480.2 171.6 L468.2 174.1 L455.7 176.8 L442.7 179.5 L429.1 182.4 L414.9 185.5 L400.1 188.6 L384.6 191.9 L368.4 195.4 L351.3 199.0 L333.5 202.8 L314.7 206.8 L295.0 211.0 L274.2 215.4 L252.3 220.1 L229.2 225.0 L204.7 230.2 L178.7 235.7 L151.2 241.6 L121.9 247.8 L90.7 254.5 L57.3 261.6 L21.7 269.1 L-16.6 277.3 L-57.7 286.0 L-102.1 295.5 L-150.1 305.7 L-202.2 316.8 L-258.9 328.8 L-320.8 342.0 L-388.8 356.5 L-463.8 372.5 L-546.8 390.1 L-639.4 409.8 L-743.1 431.9 L-860.2 456.8 L-993.4 485.2 L-1146.4 517.7 L-1323.7 555.5 L-1531.9 599.8 L-1779.5 652.5" stroke="#8a8480" stroke-width="1" stroke-opacity="0.5" fill="none"/><path d="M401.3 135.6 L407.4 136.9 L413.7 138.3 L420.2 139.7 L426.9 141.1 L433.8 142.6 L440.9 144.1 L448.2 145.6 L455.7 147.2 L463.5 148.9 L471.6 150.6 L479.9 152.4 L488.5 154.2 L497.5 156.1 L506.7 158.1 L516.3 160.2 L526.2 162.3 L536.5 164.5 L547.2 166.8 L558.3 169.1 L569.8 171.6 L581.8 174.2 L594.3 176.8 L607.4 179.6 L621.0 182.5 L635.2 185.5 L650.0 188.7 L665.6 192.0 L681.8 195.5 L698.9 199.1 L716.8 203.0 L735.6 207.0 L755.4 211.2 L776.3 215.7 L798.3 220.4 L821.5 225.3 L846.2 230.6 L872.3 236.1 L900.0 242.1 L929.4 248.3 L960.9 255.1 L994.5 262.2 L1030.4 269.9 L1069.0 278.1 L1110.5 287.0 L1155.3 296.6 L1203.8 306.9 L1256.5 318.1 L1313.9 330.4 L1376.7 343.8 L1445.6 358.5 L1521.8 374.8 L1606.2 392.8 L1700.5 412.9 L1806.3 435.5 L1926.0 461.0 L2062.4 490.2 L2219.3 523.7 L2401.9 562.6 L2616.8 608.5 L2873.4 663.3" stroke="#8a8480" stroke-width="1" stroke-opacity="0.5" fill="none"/><path d="M666.1 138.0 L660.1 139.4 L653.9 140.8 L647.5 142.3 L640.9 143.8 L634.1 145.3 L627.0 146.9 L619.8 148.6 L612.3 150.3 L604.6 152.0 L596.6 153.8 L588.3 155.7 L579.7 157.7 L570.8 159.7 L561.6 161.8 L552.1 164.0 L542.2 166.2 L531.9 168.6 L521.2 171.0 L510.1 173.5 L498.5 176.2 L486.4 178.9 L473.8 181.8 L460.7 184.8 L447.0 187.9 L432.6 191.1 L417.6 194.6 L401.9 198.1 L385.3 201.9 L368.0 205.8 L349.8 210.0 L330.6 214.4 L310.3 219.0 L288.9 223.8 L266.3 229.0 L242.4 234.4 L217.0 240.2 L189.9 246.4 L161.2 252.9 L130.5 259.9 L97.6 267.4 L62.4 275.4 L24.6 284.0 L-16.2 293.3 L-60.3 303.3 L-108.1 314.2 L-160.1 326.0 L-216.8 338.9 L-279.1 353.1 L-347.6 368.7 L-423.5 385.9 L-507.9 405.1 L-602.3 426.6 L-708.8 450.9 L-829.7 478.4 L-968.2 509.9 L-1128.4 546.3 L-1315.9 589.0 L-1538.3 639.6 L-1806.3 700.6 L-2135.5 775.5" stroke="#8a8480" stroke-width="1" stroke-opacity="0.5" fill="none"/><path d="M384.1 138.0 L390.1 139.3 L396.3 140.7 L402.7 142.2 L409.3 143.7 L416.0 145.3 L423.1 146.9 L430.3 148.5 L437.8 150.2 L445.5 152.0 L453.5 153.8 L461.8 155.7 L470.3 157.6 L479.2 159.7 L488.4 161.8 L497.9 163.9 L507.8 166.2 L518.1 168.5 L528.8 171.0 L540.0 173.5 L551.5 176.2 L563.6 178.9 L576.2 181.8 L589.4 184.8 L603.1 187.9 L617.5 191.2 L632.5 194.7 L648.3 198.2 L664.8 202.0 L682.2 206.0 L700.5 210.2 L719.7 214.6 L740.1 219.2 L761.5 224.1 L784.2 229.3 L808.3 234.8 L833.8 240.6 L861.0 246.8 L889.9 253.4 L920.8 260.4 L953.9 268.0 L989.3 276.1 L1027.5 284.8 L1068.6 294.2 L1113.1 304.3 L1161.3 315.3 L1213.9 327.3 L1271.3 340.4 L1334.4 354.8 L1403.8 370.7 L1480.8 388.3 L1566.6 407.8 L1662.8 429.8 L1771.3 454.5 L1894.8 482.7 L2036.5 515.1 L2200.9 552.6 L2393.8 596.6 L2623.4 649.0 L2901.2 712.4 L3244.2 790.7" stroke="#8a8480" stroke-width="1" stroke-opacity="0.5" fill="none"/><path d="M684.3 140.5 L678.4 141.9 L672.3 143.4 L666.0 144.9 L659.5 146.5 L652.8 148.2 L645.9 149.9 L638.8 151.6 L631.4 153.4 L623.7 155.3 L615.8 157.2 L607.6 159.2 L599.1 161.3 L590.3 163.5 L581.2 165.7 L571.7 168.0 L561.8 170.4 L551.5 172.9 L540.8 175.5 L529.7 178.3 L518.1 181.1 L506.0 184.1 L493.4 187.1 L480.1 190.4 L466.3 193.8 L451.8 197.3 L436.6 201.0 L420.7 204.9 L403.9 209.0 L386.2 213.3 L367.6 217.9 L347.9 222.7 L327.2 227.8 L305.2 233.1 L281.8 238.9 L257.0 244.9 L230.6 251.4 L202.5 258.2 L172.4 265.6 L140.1 273.5 L105.5 282.0 L68.2 291.1 L27.9 300.9 L-15.8 311.6 L-63.2 323.2 L-115.0 335.9 L-171.7 349.7 L-234.1 365.0 L-303.1 381.8 L-379.7 400.6 L-465.4 421.5 L-561.7 445.1 L-671.0 471.8 L-795.9 502.3 L-940.0 537.5 L-1108.2 578.6 L-1307.1 627.3 L-1545.7 685.6 L-1837.6 756.9 L-2202.6 846.2 L-2672.3 961.0" stroke="#8a8480" stroke-width="1" stroke-opacity="0.5" fill="none"/><path d="M365.9 140.4 L371.8 141.8 L377.9 143.3 L384.1 144.9 L390.6 146.5 L397.3 148.1 L404.2 149.8 L411.3 151.5 L418.7 153.4 L426.4 155.2 L434.3 157.2 L442.5 159.2 L450.9 161.3 L459.7 163.4 L468.9 165.6 L478.4 168.0 L488.2 170.4 L498.5 172.9 L509.2 175.5 L520.3 178.3 L531.9 181.1 L544.0 184.1 L556.6 187.2 L569.9 190.4 L583.7 193.8 L598.2 197.4 L613.4 201.1 L629.4 205.0 L646.2 209.1 L663.9 213.5 L682.6 218.1 L702.3 222.9 L723.2 228.0 L745.2 233.4 L768.6 239.2 L793.5 245.3 L820.1 251.8 L848.4 258.7 L878.6 266.1 L911.1 274.1 L945.9 282.6 L983.5 291.8 L1024.1 301.8 L1068.1 312.6 L1116.0 324.3 L1168.3 337.2 L1225.7 351.2 L1288.8 366.7 L1358.7 383.8 L1436.4 402.9 L1523.4 424.2 L1621.4 448.3 L1732.7 475.5 L1860.2 506.8 L2007.6 543.0 L2180.1 585.3 L2384.7 635.4 L2631.1 695.8 L2933.8 770.0 L3314.3 863.4 L3807.4 984.3" stroke="#8a8480" stroke-width="1" stroke-opacity="0.5" fill="none"/><path d="M703.5 143.1 L697.7 144.6 L691.8 146.2 L685.6 147.8 L679.3 149.5 L672.7 151.2 L665.9 153.0 L658.9 154.8 L651.6 156.8 L644.1 158.8 L636.3 160.8 L628.2 162.9 L619.8 165.2 L611.1 167.5 L602.0 169.9 L592.6 172.3 L582.8 174.9 L572.6 177.6 L562.0 180.4 L550.9 183.4 L539.3 186.4 L527.2 189.6 L514.5 193.0 L501.2 196.5 L487.3 200.1 L472.7 204.0 L457.4 208.1 L441.2 212.3 L424.2 216.8 L406.2 221.6 L387.2 226.6 L367.1 231.9 L345.8 237.5 L323.2 243.5 L299.1 249.9 L273.4 256.6 L246.0 263.9 L216.6 271.6 L185.1 280.0 L151.1 288.9 L114.5 298.6 L74.8 309.1 L31.7 320.5 L-15.2 332.9 L-66.6 346.4 L-123.1 361.4 L-185.5 377.8 L-254.7 396.1 L-332.0 416.5 L-418.8 439.4 L-517.0 465.4 L-629.1 495.0 L-758.1 529.0 L-908.2 568.7 L-1085.2 615.4 L-1296.8 671.3 L-1554.4 739.3 L-1874.8 823.9 L-2284.2 932.0 L-2825.4 1075.0 L-3574.6 1272.8" stroke="#8a8480" stroke-width="1" stroke-opacity="0.5" fill="none"/><path d="M346.7 143.0 L352.5 144.5 L358.4 146.1 L364.6 147.7 L370.9 149.4 L377.5 151.1 L384.3 152.9 L391.3 154.8 L398.5 156.7 L406.0 158.7 L413.8 160.7 L421.9 162.9 L430.3 165.1 L439.0 167.4 L448.0 169.8 L457.4 172.3 L467.2 174.9 L477.4 177.6 L488.0 180.4 L499.1 183.3 L510.7 186.4 L522.8 189.6 L535.5 193.0 L548.8 196.5 L562.7 200.2 L577.3 204.1 L592.7 208.1 L608.8 212.4 L625.9 216.9 L643.9 221.7 L662.9 226.7 L683.1 232.1 L704.4 237.7 L727.1 243.8 L751.3 250.2 L777.1 257.0 L804.6 264.3 L834.2 272.1 L865.9 280.5 L900.0 289.5 L936.9 299.3 L976.8 309.9 L1020.3 321.4 L1067.6 333.9 L1119.5 347.7 L1176.6 362.8 L1239.6 379.5 L1309.7 398.1 L1388.0 418.8 L1476.1 442.2 L1575.9 468.6 L1690.0 498.8 L1821.6 533.7 L1975.1 574.3 L2156.5 622.4 L2374.1 680.1 L2640.1 750.5 L2972.5 838.6 L3399.7 951.7 L3969.0 1102.6 L4765.6 1313.6" stroke="#8a8480" stroke-width="1" stroke-opacity="0.5" fill="none"/><path d="M723.8 145.8 L718.2 147.4 L712.4 149.1 L706.4 150.8 L700.2 152.6 L693.8 154.4 L687.1 156.3 L680.3 158.3 L673.2 160.3 L665.8 162.4 L658.1 164.6 L650.2 166.9 L641.9 169.3 L633.4 171.8 L624.4 174.3 L615.1 177.0 L605.4 179.8 L595.3 182.7 L584.8 185.7 L573.8 188.9 L562.2 192.2 L550.1 195.7 L537.5 199.3 L524.2 203.1 L510.2 207.1 L495.6 211.3 L480.1 215.8 L463.8 220.5 L446.5 225.4 L428.3 230.6 L408.9 236.2 L388.4 242.1 L366.6 248.4 L343.3 255.0 L318.5 262.2 L291.9 269.8 L263.3 278.0 L232.6 286.8 L199.5 296.3 L163.7 306.6 L124.8 317.8 L82.5 329.9 L36.2 343.2 L-14.6 357.8 L-70.7 373.9 L-132.8 391.8 L-202.1 411.6 L-279.8 434.0 L-367.6 459.2 L-467.5 487.8 L-582.3 520.8 L-715.6 559.1 L-872.2 604.0 L-1058.8 657.6 L-1284.9 722.6 L-1564.7 802.9 L-1919.8 904.8 L-2385.3 1038.5 L-3022.1 1221.3 L-3946.2 1486.7 L-5408.7 1906.6" stroke="#8a8480" stroke-width="1" stroke-opacity="0.5" fill="none"/><path d="M326.5 145.7 L332.1 147.3 L337.9 149.0 L343.9 150.7 L350.1 152.5 L356.4 154.3 L363.1 156.2 L369.9 158.2 L377.0 160.2 L384.4 162.4 L392.0 164.6 L399.9 166.8 L408.2 169.2 L416.7 171.7 L425.7 174.3 L434.9 176.9 L444.6 179.7 L454.7 182.6 L465.2 185.7 L476.3 188.8 L487.8 192.2 L499.9 195.6 L512.5 199.3 L525.8 203.1 L539.8 207.1 L554.5 211.4 L569.9 215.8 L586.3 220.5 L603.5 225.5 L621.8 230.8 L641.2 236.3 L661.7 242.3 L683.6 248.6 L707.0 255.3 L731.9 262.5 L758.6 270.2 L787.2 278.4 L818.1 287.3 L851.3 296.9 L887.4 307.3 L926.5 318.5 L969.1 330.8 L1015.8 344.2 L1067.0 359.0 L1123.6 375.3 L1186.4 393.4 L1256.4 413.6 L1335.1 436.2 L1424.1 461.9 L1525.5 491.1 L1642.3 524.7 L1778.2 563.9 L1938.2 610.0 L2129.4 665.0 L2361.9 732.0 L2650.8 815.2 L3019.3 921.4 L3505.6 1061.5 L4177.2 1255.0 L5164.5 1539.4 L6758.7 1998.6" stroke="#8a8480" stroke-width="1" stroke-opacity="0.5" fill="none"/><path d="M745.3 148.7 L739.8 150.4 L734.2 152.2 L728.4 154.0 L722.4 155.9 L716.2 157.8 L709.7 159.9 L703.1 162.0 L696.1 164.1 L688.9 166.4 L681.5 168.7 L673.7 171.2 L665.6 173.7 L657.2 176.4 L648.5 179.1 L639.3 182.0 L629.8 185.0 L619.8 188.1 L609.4 191.4 L598.5 194.8 L587.1 198.4 L575.1 202.2 L562.5 206.2 L549.3 210.3 L535.3 214.7 L520.6 219.4 L505.1 224.2 L488.6 229.4 L471.2 234.9 L452.7 240.7 L433.1 246.9 L412.2 253.5 L389.8 260.5 L365.9 268.0 L340.3 276.1 L312.7 284.7 L283.1 294.1 L251.0 304.2 L216.1 315.1 L178.2 327.1 L136.9 340.1 L91.5 354.4 L41.5 370.1 L-13.9 387.5 L-75.6 406.9 L-144.6 428.6 L-222.5 453.1 L-310.9 481.0 L-412.4 512.9 L-529.8 549.8 L-667.4 593.1 L-830.8 644.5 L-1028.1 706.6 L-1270.9 783.0 L-1577.1 879.3 L-1975.2 1004.5 L-2514.0 1174.0 L-3284.0 1416.3 L-4474.7 1790.9 L-6560.5 2447.0 L-11158.2 3893.5" stroke="#8a8480" stroke-width="1" stroke-opacity="0.5" fill="none"/><path d="M305.1 148.6 L310.5 150.3 L316.1 152.0 L321.9 153.9 L327.9 155.8 L334.1 157.7 L340.5 159.7 L347.2 161.8 L354.1 164.0 L361.3 166.3 L368.7 168.6 L376.5 171.1 L384.5 173.6 L392.9 176.3 L401.6 179.0 L410.8 181.9 L420.3 184.9 L430.2 188.1 L440.6 191.3 L451.5 194.8 L462.9 198.4 L474.9 202.2 L487.5 206.1 L500.7 210.3 L514.7 214.7 L529.4 219.4 L545.0 224.3 L561.4 229.5 L578.8 235.0 L597.3 240.8 L617.0 247.0 L637.9 253.6 L660.3 260.7 L684.3 268.3 L710.0 276.4 L737.6 285.1 L767.4 294.5 L799.7 304.7 L834.6 315.7 L872.7 327.7 L914.4 340.9 L960.1 355.3 L1010.4 371.2 L1066.3 388.8 L1128.5 408.5 L1198.3 430.5 L1277.0 455.4 L1366.6 483.6 L1469.5 516.1 L1588.9 553.8 L1729.1 598.0 L1895.9 650.7 L2097.9 714.5 L2347.4 793.2 L2663.5 893.0 L3077.0 1023.5 L3640.8 1201.5 L4455.4 1458.7 L5736.0 1862.9 L8042.5 2591.0 L13431.4 4292.0" stroke="#8a8480" stroke-width="1" stroke-opacity="0.5" fill="none"/><path d="M768.0 151.7 L762.8 153.6 L757.4 155.4 L751.8 157.4 L746.0 159.4 L740.0 161.5 L733.8 163.6 L727.4 165.9 L720.7 168.2 L713.7 170.6 L706.5 173.1 L699.0 175.8 L691.1 178.5 L682.9 181.3 L674.4 184.3 L665.5 187.4 L656.1 190.6 L646.4 194.0 L636.2 197.6 L625.4 201.3 L614.2 205.2 L602.3 209.4 L589.9 213.7 L576.7 218.3 L562.8 223.1 L548.2 228.2 L532.6 233.6 L516.2 239.3 L498.6 245.4 L480.0 251.9 L460.1 258.9 L438.8 266.3 L416.0 274.2 L391.5 282.7 L365.1 291.9 L336.6 301.8 L305.7 312.6 L272.1 324.2 L235.4 337.0 L195.3 351.0 L151.0 366.4 L102.1 383.4 L47.8 402.3 L-13.0 423.4 L-81.5 447.3 L-159.2 474.3 L-248.0 505.2 L-350.6 540.9 L-470.5 582.6 L-612.5 632.0 L-783.1 691.3 L-992.1 764.0 L-1254.1 855.2 L-1592.2 972.8 L-2045.1 1130.4 L-2683.4 1352.4 L-3650.0 1688.7 L-5285.9 2257.8 L-8654.8 3429.7 L-19610.8 7241.1" stroke="#8a8480" stroke-width="1" stroke-opacity="0.5" fill="none"/><path d="M282.5 151.6 L287.7 153.4 L293.1 155.3 L298.6 157.2 L304.4 159.3 L310.3 161.3 L316.5 163.5 L323.0 165.7 L329.6 168.1 L336.6 170.5 L343.8 173.0 L351.3 175.6 L359.1 178.4 L367.3 181.2 L375.8 184.2 L384.7 187.3 L394.0 190.5 L403.7 193.9 L413.9 197.5 L424.6 201.2 L435.9 205.2 L447.7 209.3 L460.2 213.6 L473.3 218.2 L487.2 223.1 L501.8 228.2 L517.4 233.6 L533.8 239.4 L551.4 245.5 L570.0 252.0 L589.9 258.9 L611.3 266.4 L634.1 274.3 L658.6 282.9 L685.1 292.2 L713.7 302.1 L744.7 313.0 L778.4 324.7 L815.2 337.6 L855.6 351.7 L900.1 367.2 L949.3 384.4 L1004.1 403.5 L1065.4 424.9 L1134.5 449.0 L1213.0 476.4 L1302.9 507.8 L1406.9 544.1 L1528.6 586.6 L1673.0 637.0 L1847.1 697.8 L2061.0 772.5 L2330.2 866.4 L2679.2 988.3 L3149.9 1152.6 L3819.1 1386.2 L4846.3 1744.8 L6623.4 2365.2 L10443.4 3698.7" stroke="#8a8480" stroke-width="1" stroke-opacity="0.5" fill="none"/><path d="M792.1 155.0 L787.1 156.9 L782.0 158.9 L776.7 161.0 L771.2 163.1 L765.5 165.3 L759.5 167.7 L753.4 170.1 L747.0 172.5 L740.3 175.1 L733.3 177.8 L726.1 180.7 L718.5 183.6 L710.6 186.7 L702.4 189.9 L693.7 193.2 L684.7 196.8 L675.2 200.5 L665.3 204.3 L654.8 208.4 L643.8 212.7 L632.2 217.2 L619.9 222.0 L607.0 227.0 L593.2 232.3 L578.7 238.0 L563.3 244.0 L546.8 250.4 L529.3 257.2 L510.6 264.5 L490.5 272.3 L469.0 280.7 L445.8 289.7 L420.7 299.5 L393.6 310.0 L364.1 321.5 L332.0 334.0 L296.8 347.7 L258.2 362.7 L215.4 379.3 L168.0 397.8 L115.0 418.4 L55.5 441.6 L-12.0 467.8 L-88.9 497.7 L-177.7 532.3 L-281.0 572.5 L-403.0 619.9 L-549.1 676.8 L-727.2 746.1 L-949.3 832.4 L-1233.7 943.1 L-1611.2 1090.0 L-2136.2 1294.2 L-2916.4 1597.7 L-4197.5 2096.1 L-6689.7 3065.7 L-13650.3 5773.7" stroke="#8a8480" stroke-width="1" stroke-opacity="0.5" fill="none"/><path d="M258.5 154.8 L263.4 156.8 L268.5 158.8 L273.8 160.8 L279.3 163.0 L285.0 165.2 L290.9 167.5 L297.1 169.9 L303.4 172.4 L310.1 175.0 L317.0 177.7 L324.2 180.5 L331.8 183.5 L339.6 186.5 L347.9 189.7 L356.5 193.1 L365.5 196.6 L375.0 200.3 L384.9 204.2 L395.3 208.3 L406.3 212.6 L417.9 217.1 L430.2 221.9 L443.1 226.9 L456.8 232.3 L471.3 237.9 L486.8 244.0 L503.2 250.4 L520.7 257.2 L539.4 264.5 L559.5 272.4 L581.1 280.8 L604.3 289.9 L629.4 299.6 L656.5 310.3 L686.1 321.8 L718.3 334.4 L753.6 348.1 L792.4 363.3 L835.3 380.1 L883.0 398.7 L936.3 419.5 L996.3 442.9 L1064.3 469.5 L1142.0 499.8 L1231.7 534.8 L1336.3 575.7 L1460.0 624.0 L1608.5 681.9 L1790.1 752.8 L2017.1 841.5 L2309.1 955.5 L2698.8 1107.6 L3244.9 1320.9 L4065.2 1641.1 L5435.6 2176.2 L8188.2 3250.9 L16542.0 6512.5" stroke="#8a8480" stroke-width="1" stroke-opacity="0.5" fill="none"/><path d="M817.7 158.4 L813.1 160.5 L808.2 162.6 L803.2 164.8 L798.1 167.1 L792.7 169.5 L787.1 172.0 L781.2 174.5 L775.2 177.2 L768.8 180.0 L762.2 182.9 L755.3 186.0 L748.1 189.1 L740.6 192.5 L732.7 195.9 L724.4 199.6 L715.8 203.4 L706.6 207.4 L697.0 211.7 L686.9 216.1 L676.3 220.9 L665.0 225.8 L653.1 231.1 L640.4 236.7 L627.0 242.6 L612.7 248.9 L597.5 255.6 L581.2 262.8 L563.8 270.5 L545.1 278.7 L525.0 287.6 L503.3 297.2 L479.8 307.5 L454.4 318.8 L426.6 331.0 L396.2 344.4 L362.9 359.1 L326.1 375.4 L285.3 393.4 L239.7 413.5 L188.6 436.0 L130.9 461.5 L65.1 490.5 L-10.6 523.9 L-98.5 562.7 L-201.9 608.4 L-325.4 662.8 L-475.2 729.0 L-661.0 810.9 L-897.4 915.2 L-1208.3 1052.4 L-1635.6 1241.0 L-2259.7 1516.4 L-3257.1 1956.5 L-5106.1 2772.3 L-9708.6 4803.2" stroke="#8a8480" stroke-width="1" stroke-opacity="0.5" fill="none"/><path d="M233.0 158.3 L237.6 160.3 L242.4 162.4 L247.4 164.6 L252.5 166.9 L257.9 169.3 L263.5 171.8 L269.3 174.4 L275.3 177.0 L281.6 179.8 L288.2 182.7 L295.1 185.8 L302.3 189.0 L309.8 192.3 L317.6 195.8 L325.9 199.4 L334.5 203.2 L343.6 207.3 L353.2 211.5 L363.3 216.0 L373.9 220.7 L385.2 225.7 L397.1 230.9 L409.7 236.5 L423.1 242.5 L437.4 248.8 L452.6 255.5 L468.8 262.7 L486.2 270.4 L504.9 278.7 L525.0 287.6 L546.7 297.2 L570.2 307.6 L595.7 318.9 L623.5 331.2 L653.9 344.7 L687.3 359.5 L724.3 375.8 L765.2 394.0 L810.9 414.2 L862.3 437.0 L920.4 462.7 L986.6 492.1 L1062.9 525.8 L1151.7 565.1 L1256.3 611.5 L1381.3 666.8 L1533.4 734.2 L1722.5 818.0 L1964.0 924.9 L2283.0 1066.2 L2724.1 1261.6 L3374.0 1549.4 L4426.8 2015.7 L6425.6 2900.9 L11685.0 5230.2" stroke="#8a8480" stroke-width="1" stroke-opacity="0.5" fill="none"/><path d="M845.0 162.1 L840.7 164.3 L836.2 166.6 L831.6 168.9 L826.8 171.4 L821.8 173.9 L816.6 176.6 L811.2 179.4 L805.5 182.2 L799.6 185.2 L793.4 188.4 L787.0 191.7 L780.2 195.1 L773.1 198.7 L765.7 202.5 L757.9 206.5 L749.7 210.7 L741.0 215.1 L731.9 219.8 L722.3 224.7 L712.1 229.9 L701.3 235.4 L689.8 241.2 L677.6 247.4 L664.6 254.0 L650.8 261.1 L635.9 268.7 L620.0 276.8 L602.9 285.5 L584.4 294.9 L564.5 305.1 L542.8 316.1 L519.3 328.1 L493.5 341.3 L465.3 355.7 L434.1 371.5 L399.6 389.1 L361.2 408.7 L318.1 430.6 L269.6 455.4 L214.3 483.6 L150.9 515.9 L77.4 553.3 L-8.8 597.3 L-111.3 649.5 L-235.2 712.7 L-388.1 790.6 L-581.3 889.1 L-833.3 1017.5 L-1175.9 1192.1 L-1668.3 1443.1 L-2436.6 1834.6 L-3802.7 2530.9 L-6908.6 4113.9" stroke="#8a8480" stroke-width="1" stroke-opacity="0.5" fill="none"/><path d="M205.8 161.9 L210.1 164.1 L214.5 166.4 L219.1 168.7 L223.9 171.2 L228.9 173.7 L234.1 176.4 L239.5 179.1 L245.1 182.0 L251.0 185.0 L257.1 188.2 L263.6 191.5 L270.3 194.9 L277.4 198.5 L284.8 202.3 L292.5 206.3 L300.7 210.5 L309.3 214.9 L318.4 219.5 L328.0 224.4 L338.2 229.6 L349.0 235.2 L360.4 241.0 L372.6 247.2 L385.5 253.9 L399.4 260.9 L414.2 268.5 L430.1 276.6 L447.2 285.4 L465.6 294.8 L485.5 305.0 L507.2 316.1 L530.7 328.1 L556.5 341.3 L584.8 355.8 L615.9 371.7 L650.5 389.4 L689.0 409.1 L732.2 431.2 L781.0 456.2 L836.5 484.6 L900.2 517.2 L974.2 555.0 L1061.1 599.5 L1164.6 652.4 L1289.9 716.6 L1444.9 795.8 L1641.3 896.3 L1898.5 1027.9 L2249.7 1207.6 L2758.0 1467.6 L3559.5 1877.7 L5010.1 2619.8 L8435.6 4372.3" stroke="#8a8480" stroke-width="1" stroke-opacity="0.5" fill="none"/><path d="M874.1 166.0 L870.2 168.4 L866.2 170.8 L862.0 173.3 L857.7 176.0 L853.1 178.7 L848.4 181.6 L843.4 184.5 L838.3 187.7 L832.9 190.9 L827.2 194.3 L821.3 197.9 L815.1 201.6 L808.6 205.6 L801.7 209.7 L794.5 214.1 L786.9 218.7 L778.8 223.5 L770.3 228.6 L761.3 234.1 L751.8 239.8 L741.6 246.0 L730.8 252.5 L719.2 259.5 L706.9 266.9 L693.7 274.9 L679.5 283.5 L664.1 292.7 L647.6 302.7 L629.6 313.5 L610.1 325.3 L588.8 338.1 L565.4 352.2 L539.7 367.8 L511.2 384.9 L479.6 404.0 L444.1 425.4 L404.2 449.5 L358.9 476.8 L307.0 508.1 L247.1 544.3 L176.9 586.6 L93.8 636.7 L-6.4 697.1 L-129.2 771.3 L-283.6 864.4 L-483.5 984.9 L-752.2 1147.0 L-1133.0 1376.7 L-1714.3 1727.4 L-2711.2 2328.7 L-4817.1 3599.0" stroke="#8a8480" stroke-width="1" stroke-opacity="0.5" fill="none"/><path d="M176.9 165.8 L180.7 168.2 L184.7 170.6 L188.9 173.1 L193.2 175.7 L197.8 178.5 L202.5 181.3 L207.4 184.3 L212.5 187.4 L217.9 190.7 L223.5 194.1 L229.4 197.6 L235.6 201.4 L242.1 205.3 L248.9 209.4 L256.1 213.8 L263.7 218.4 L271.7 223.2 L280.2 228.4 L289.1 233.8 L298.7 239.6 L308.8 245.7 L319.6 252.2 L331.1 259.2 L343.4 266.6 L356.6 274.6 L370.7 283.2 L386.0 292.5 L402.5 302.5 L420.5 313.3 L440.0 325.1 L461.2 338.0 L484.6 352.2 L510.3 367.7 L538.8 385.0 L570.4 404.1 L605.9 425.6 L645.9 449.8 L691.3 477.3 L743.3 508.8 L803.6 545.3 L874.1 588.0 L957.7 638.7 L1058.7 699.8 L1182.7 774.9 L1339.0 869.5 L1541.8 992.3 L1815.6 1158.1 L2205.6 1394.3 L2805.7 1757.7 L3848.4 2389.2 L6109.0 3758.1" stroke="#8a8480" stroke-width="1" stroke-opacity="0.5" fill="none"/><path d="M905.2 170.2 L901.8 172.7 L898.3 175.4 L894.6 178.1 L890.8 180.9 L886.8 183.8 L882.6 186.9 L878.3 190.2 L873.7 193.5 L868.9 197.1 L863.9 200.8 L858.7 204.7 L853.1 208.7 L847.3 213.1 L841.2 217.6 L834.7 222.4 L827.8 227.4 L820.6 232.8 L812.9 238.5 L804.7 244.5 L796.0 251.0 L786.7 257.8 L776.8 265.1 L766.1 273.0 L754.7 281.4 L742.4 290.5 L729.2 300.3 L714.8 311.0 L699.1 322.5 L682.1 335.1 L663.4 348.9 L642.9 364.1 L620.2 380.8 L595.0 399.5 L566.8 420.3 L535.1 443.7 L499.2 470.2 L458.1 500.6 L410.8 535.5 L355.6 576.3 L290.4 624.5 L212.1 682.3 L116.6 752.9 L-2.8 841.1 L-156.2 954.5 L-360.5 1105.4 L-646.1 1316.4 L-1073.6 1632.3 L-1783.8 2156.9 L-3195.3 3199.7 L-7360.4 6277.0" stroke="#8a8480" stroke-width="1" stroke-opacity="0.5" fill="none"/><path d="M145.9 170.0 L149.3 172.5 L152.8 175.1 L156.5 177.8 L160.3 180.6 L164.2 183.6 L168.4 186.6 L172.7 189.9 L177.3 193.2 L182.0 196.8 L187.0 200.5 L192.2 204.3 L197.7 208.4 L203.5 212.7 L209.7 217.3 L216.1 222.0 L222.9 227.1 L230.1 232.5 L237.8 238.1 L245.9 244.2 L254.6 250.6 L263.9 257.5 L273.7 264.8 L284.3 272.6 L295.7 281.1 L307.9 290.2 L321.2 300.0 L335.5 310.6 L351.1 322.2 L368.1 334.8 L386.7 348.6 L407.2 363.8 L429.9 380.6 L455.1 399.3 L483.2 420.2 L514.9 443.7 L550.8 470.3 L591.9 500.8 L639.3 536.0 L694.6 577.0 L760.1 625.5 L838.7 683.8 L934.8 755.1 L1055.1 844.4 L1210.0 959.3 L1416.9 1112.8 L1707.4 1328.2 L2144.6 1652.6 L2877.9 2196.4 L4361.0 3296.6 L8949.2 6700.0" stroke="#8a8480" stroke-width="1" stroke-opacity="0.5" fill="none"/><path d="M938.6 174.7 L935.8 177.4 L932.9 180.2 L929.8 183.2 L926.6 186.2 L923.2 189.4 L919.7 192.7 L916.1 196.2 L912.2 199.9 L908.2 203.7 L903.9 207.8 L899.5 212.0 L894.8 216.5 L889.8 221.3 L884.6 226.3 L879.0 231.5 L873.1 237.2 L866.9 243.1 L860.2 249.5 L853.1 256.2 L845.6 263.4 L837.5 271.2 L828.7 279.5 L819.4 288.4 L809.3 298.0 L798.3 308.5 L786.4 319.8 L773.5 332.1 L759.3 345.6 L743.7 360.5 L726.5 376.9 L707.5 395.0 L686.2 415.3 L662.3 438.1 L635.2 463.9 L604.4 493.3 L568.9 527.1 L527.6 566.4 L479.0 612.8 L420.9 668.1 L350.3 735.5 L262.5 819.2 L150.5 925.9 L2.7 1066.8 L-201.4 1261.3 L-501.5 1547.3 L-986.1 2009.2 L-1901.0 2881.1 L-4276.6 5145.2" stroke="#8a8480" stroke-width="1" stroke-opacity="0.5" fill="none"/><path d="M112.8 174.5 L115.6 177.1 L118.5 179.9 L121.5 182.8 L124.7 185.9 L128.0 189.1 L131.5 192.4 L135.2 195.9 L139.0 199.5 L143.0 203.4 L147.2 207.4 L151.7 211.7 L156.3 216.1 L161.3 220.9 L166.5 225.9 L172.0 231.1 L177.9 236.7 L184.1 242.7 L190.7 249.0 L197.7 255.8 L205.3 263.0 L213.3 270.7 L222.0 279.0 L231.3 287.9 L241.4 297.5 L252.3 308.0 L264.1 319.3 L277.0 331.6 L291.1 345.1 L306.6 360.0 L323.8 376.4 L342.8 394.6 L364.0 414.9 L387.9 437.7 L414.9 463.5 L445.6 493.0 L481.1 526.9 L522.4 566.4 L571.0 613.0 L629.2 668.6 L700.0 736.4 L788.1 820.7 L900.7 928.5 L1049.6 1070.9 L1255.7 1268.3 L1560.1 1559.6 L2054.9 2033.0 L2999.7 2937.2 L5521.2 5350.2" stroke="#8a8480" stroke-width="1" stroke-opacity="0.5" fill="none"/><path d="M974.5 179.6 L972.3 182.5 L970.1 185.5 L967.7 188.7 L965.3 192.0 L962.7 195.4 L960.0 199.0 L957.2 202.8 L954.2 206.8 L951.0 211.0 L947.7 215.5 L944.3 220.2 L940.6 225.1 L936.7 230.3 L932.6 235.8 L928.2 241.7 L923.5 248.0 L918.6 254.6 L913.3 261.7 L907.6 269.3 L901.5 277.5 L895.0 286.3 L888.0 295.7 L880.3 306.0 L872.0 317.1 L863.0 329.2 L853.2 342.4 L842.4 357.0 L830.4 373.0 L817.2 390.7 L802.5 410.5 L786.0 432.7 L767.3 457.7 L746.1 486.2 L721.7 518.9 L693.4 556.9 L660.2 601.5 L620.6 654.6 L572.8 718.9 L513.6 798.4 L438.5 899.1 L340.4 1030.9 L206.4 1210.8 L12.5 1471.0 L-292.7 1880.7 L-844.0 2620.9 L-2140.5 4361.3" stroke="#8a8480" stroke-width="1" stroke-opacity="0.5" fill="none"/><path d="M77.1 179.2 L79.3 182.1 L81.5 185.1 L83.9 188.3 L86.3 191.6 L88.9 195.0 L91.5 198.6 L94.4 202.4 L97.3 206.4 L100.4 210.6 L103.7 215.0 L107.2 219.7 L110.8 224.6 L114.7 229.8 L118.8 235.4 L123.1 241.2 L127.7 247.4 L132.7 254.1 L137.9 261.2 L143.6 268.8 L149.6 276.9 L156.1 285.7 L163.1 295.1 L170.7 305.4 L178.9 316.5 L187.9 328.5 L197.7 341.8 L208.5 356.3 L220.3 372.3 L233.5 390.0 L248.1 409.8 L264.6 431.9 L283.2 457.0 L304.3 485.5 L328.6 518.2 L356.8 556.3 L389.9 600.9 L429.4 654.2 L477.3 718.6 L536.4 798.4 L611.5 899.6 L709.9 1032.3 L844.5 1213.7 L1039.6 1476.7 L1348.1 1892.7 L1909.4 2649.3 L3249.4 4455.8" stroke="#8a8480" stroke-width="1" stroke-opacity="0.5" fill="none"/><path d="M1013.1 184.8 L1011.8 187.9 L1010.3 191.2 L1008.8 194.6 L1007.2 198.2 L1005.6 202.0 L1003.8 205.9 L1002.0 210.1 L1000.1 214.4 L998.0 219.1 L995.9 223.9 L993.6 229.1 L991.2 234.5 L988.7 240.3 L986.0 246.5 L983.1 253.1 L980.0 260.1 L976.7 267.6 L973.1 275.6 L969.3 284.2 L965.2 293.5 L960.8 303.6 L956.0 314.5 L950.8 326.3 L945.1 339.3 L938.8 353.5 L931.9 369.2 L924.3 386.5 L915.8 405.8 L906.3 427.4 L895.6 451.7 L883.4 479.4 L869.4 511.0 L853.3 547.7 L834.3 590.7 L811.9 641.6 L784.8 703.1 L751.5 778.6 L709.6 873.8 L655.2 997.4 L581.7 1164.2 L476.9 1402.0 L315.7 1768.0 L35.3 2404.4 L-573.4 3786.2" stroke="#8a8480" stroke-width="1" stroke-opacity="0.5" fill="none"/><path d="M38.8 184.4 L40.1 187.5 L41.6 190.8 L43.1 194.2 L44.6 197.8 L46.3 201.5 L48.0 205.4 L49.8 209.6 L51.7 214.0 L53.8 218.6 L55.9 223.4 L58.1 228.5 L60.5 234.0 L63.1 239.8 L65.8 245.9 L68.6 252.4 L71.7 259.4 L75.0 266.9 L78.5 274.9 L82.3 283.5 L86.3 292.8 L90.7 302.8 L95.5 313.7 L100.7 325.5 L106.4 338.4 L112.6 352.6 L119.4 368.2 L127.0 385.5 L135.4 404.8 L144.9 426.3 L155.6 450.6 L167.7 478.2 L181.5 509.9 L197.6 546.5 L216.4 589.4 L238.8 640.3 L265.7 701.8 L298.9 777.4 L340.7 872.6 L395.0 996.4 L468.4 1163.8 L573.1 1402.5 L734.7 1770.9 L1016.6 2413.6 L1633.3 3819.4" stroke="#8a8480" stroke-width="1" stroke-opacity="0.5" fill="none"/><path d="M1054.9 190.4 L1054.5 193.8 L1054.0 197.4 L1053.5 201.1 L1052.9 205.0 L1052.4 209.1 L1051.8 213.4 L1051.2 218.0 L1050.5 222.8 L1049.8 227.9 L1049.1 233.3 L1048.3 239.0 L1047.5 245.1 L1046.6 251.5 L1045.7 258.4 L1044.7 265.8 L1043.6 273.7 L1042.4 282.2 L1041.2 291.3 L1039.8 301.2 L1038.4 311.9 L1036.8 323.5 L1035.1 336.2 L1033.2 350.2 L1031.1 365.5 L1028.8 382.4 L1026.2 401.2 L1023.4 422.2 L1020.1 445.9 L1016.5 472.7 L1012.3 503.4 L1007.5 538.9 L1001.8 580.2 L995.2 629.2 L987.2 688.0 L977.4 759.9 L965.1 850.0 L949.3 966.1 L928.2 1121.3 L898.5 1339.4 L853.7 1668.3 L778.4 2221.5 L625.3 3346.3 L144.5 6877.5" stroke="#8a8480" stroke-width="1" stroke-opacity="0.5" fill="none"/><path d="M-2.6 190.0 L-2.2 193.4 L-1.7 196.9 L-1.2 200.6 L-0.7 204.5 L-0.1 208.6 L0.5 212.9 L1.1 217.4 L1.7 222.2 L2.4 227.3 L3.1 232.6 L3.9 238.3 L4.7 244.4 L5.6 250.8 L6.5 257.7 L7.5 265.0 L8.6 272.9 L9.7 281.4 L11.0 290.5 L12.3 300.3 L13.8 311.0 L15.3 322.6 L17.0 335.2 L18.9 349.1 L21.0 364.3 L23.3 381.2 L25.8 399.9 L28.6 420.9 L31.8 444.5 L35.5 471.2 L39.6 501.8 L44.4 537.1 L50.0 578.3 L56.6 627.1 L64.5 685.7 L74.3 757.5 L86.4 847.3 L102.1 963.1 L123.1 1117.9 L152.6 1335.6 L197.2 1664.1 L272.1 2217.1 L424.8 3343.6 L906.6 6898.5" stroke="#8a8480" stroke-width="1" stroke-opacity="0.5" fill="none"/><path d="M1100.2 196.5 L1100.8 200.2 L1101.5 204.1 L1102.2 208.1 L1102.9 212.4 L1103.6 216.9 L1104.4 221.7 L1105.3 226.7 L1106.2 232.0 L1107.1 237.6 L1108.1 243.6 L1109.2 250.0 L1110.3 256.8 L1111.6 264.1 L1112.9 271.8 L1114.3 280.2 L1115.8 289.2 L1117.4 298.9 L1119.2 309.4 L1121.1 320.8 L1123.2 333.2 L1125.5 346.9 L1128.0 361.8 L1130.8 378.4 L1133.9 396.7 L1137.3 417.2 L1141.2 440.2 L1145.6 466.3 L1150.6 496.0 L1156.4 530.3 L1163.1 570.2 L1171.0 617.2 L1180.5 673.6 L1192.0 742.2 L1206.4 827.6 L1224.8 936.8 L1249.1 1081.5 L1282.9 1282.3 L1332.9 1579.6 L1414.6 2064.8 L1571.8 2998.9 L1999.5 5540.3" stroke="#8a8480" stroke-width="1" stroke-opacity="0.5" fill="none"/><path d="M-47.5 196.0 L-48.1 199.7 L-48.8 203.5 L-49.5 207.6 L-50.2 211.8 L-50.9 216.3 L-51.7 221.0 L-52.6 226.0 L-53.4 231.3 L-54.4 236.9 L-55.4 242.9 L-56.4 249.2 L-57.6 256.0 L-58.8 263.2 L-60.1 271.0 L-61.5 279.3 L-63.0 288.2 L-64.6 297.9 L-66.3 308.3 L-68.2 319.7 L-70.3 332.0 L-72.6 345.6 L-75.1 360.5 L-77.8 376.9 L-80.9 395.2 L-84.3 415.6 L-88.1 438.5 L-92.5 464.4 L-97.4 494.0 L-103.2 528.0 L-109.8 567.7 L-117.6 614.5 L-127.0 670.5 L-138.4 738.6 L-152.7 823.5 L-170.8 932.0 L-194.9 1075.7 L-228.3 1275.0 L-277.7 1569.9 L-358.2 2050.7 L-513.0 2974.4 L-932.1 5475.9" stroke="#8a8480" stroke-width="1" stroke-opacity="0.5" fill="none"/><path d="M1149.5 203.2 L1151.4 207.2 L1153.4 211.4 L1155.5 215.9 L1157.7 220.5 L1160.0 225.5 L1162.5 230.8 L1165.1 236.3 L1167.9 242.2 L1170.9 248.5 L1174.1 255.2 L1177.4 262.4 L1181.1 270.0 L1184.9 278.2 L1189.1 287.1 L1193.6 296.6 L1198.5 306.9 L1203.8 318.1 L1209.6 330.3 L1215.9 343.6 L1222.8 358.3 L1230.4 374.4 L1238.9 392.3 L1248.3 412.3 L1258.9 434.7 L1270.9 460.0 L1284.5 488.9 L1300.2 522.0 L1318.4 560.5 L1339.8 605.8 L1365.3 659.8 L1396.3 725.2 L1434.6 806.3 L1483.3 909.3 L1547.2 1044.6 L1634.9 1230.0 L1762.5 1500.0 L1965.4 1929.2 L2338.2 2717.7 L3247.3 4640.8" stroke="#8a8480" stroke-width="1" stroke-opacity="0.5" fill="none"/><path d="M-96.3 202.6 L-98.2 206.6 L-100.2 210.8 L-102.3 215.2 L-104.5 219.9 L-106.8 224.8 L-109.2 230.0 L-111.8 235.5 L-114.6 241.4 L-117.5 247.7 L-120.7 254.3 L-124.0 261.4 L-127.6 269.0 L-131.4 277.2 L-135.6 286.0 L-140.0 295.5 L-144.8 305.7 L-150.1 316.8 L-155.8 329.0 L-162.0 342.2 L-168.9 356.7 L-176.4 372.8 L-184.8 390.6 L-194.1 410.4 L-204.6 432.7 L-216.4 457.8 L-229.9 486.4 L-245.4 519.3 L-263.3 557.5 L-284.5 602.4 L-309.6 655.9 L-340.2 720.8 L-377.9 801.0 L-425.9 903.0 L-488.8 1036.7 L-575.0 1219.8 L-700.2 1485.9 L-898.8 1907.9 L-1261.9 2679.5 L-2138.5 4542.4" stroke="#8a8480" stroke-width="1" stroke-opacity="0.5" fill="none"/><path d="M1203.2 210.4 L1206.7 214.8 L1210.3 219.5 L1214.1 224.3 L1218.1 229.5 L1222.4 235.0 L1226.9 240.8 L1231.7 247.0 L1236.8 253.6 L1242.3 260.7 L1248.2 268.2 L1254.4 276.3 L1261.2 285.0 L1268.5 294.3 L1276.4 304.5 L1284.9 315.5 L1294.2 327.4 L1304.3 340.5 L1315.5 354.8 L1327.7 370.6 L1341.3 388.1 L1356.5 407.6 L1373.4 429.4 L1392.6 454.0 L1414.3 482.0 L1439.2 514.0 L1468.1 551.2 L1502.0 594.8 L1542.2 646.6 L1590.9 709.1 L1650.7 786.2 L1726.4 883.5 L1824.9 1010.2 L1958.4 1182.0 L2149.8 1428.3 L2447.0 1810.7 L2971.4 2485.3 L4144.2 3994.3" stroke="#8a8480" stroke-width="1" stroke-opacity="0.5" fill="none"/><path d="M-149.5 209.7 L-152.9 214.1 L-156.5 218.7 L-160.2 223.6 L-164.2 228.7 L-168.4 234.2 L-172.9 240.0 L-177.7 246.1 L-182.7 252.7 L-188.2 259.7 L-193.9 267.1 L-200.2 275.2 L-206.8 283.8 L-214.0 293.1 L-221.8 303.2 L-230.2 314.1 L-239.4 325.9 L-249.4 338.9 L-260.4 353.1 L-272.6 368.8 L-286.0 386.1 L-300.9 405.4 L-317.6 427.0 L-336.5 451.4 L-357.9 479.1 L-382.5 510.9 L-411.0 547.7 L-444.3 590.8 L-483.9 642.0 L-531.7 703.8 L-590.6 779.8 L-664.8 875.8 L-761.3 1000.6 L-891.9 1169.4 L-1078.7 1410.8 L-1367.5 1784.2 L-1873.8 2438.6 L-2991.0 3882.8" stroke="#8a8480" stroke-width="1" stroke-opacity="0.5" fill="none"/><path d="M1262.2 218.4 L1267.4 223.2 L1273.0 228.3 L1278.8 233.7 L1285.0 239.5 L1291.6 245.6 L1298.7 252.1 L1306.2 259.0 L1314.2 266.4 L1322.8 274.4 L1332.1 282.9 L1342.0 292.1 L1352.8 302.1 L1364.4 312.9 L1377.1 324.6 L1391.0 337.4 L1406.1 351.4 L1422.8 366.8 L1441.3 383.9 L1461.8 402.9 L1484.8 424.2 L1510.7 448.1 L1540.1 475.2 L1573.7 506.3 L1612.5 542.2 L1658.0 584.2 L1711.7 633.9 L1776.4 693.7 L1855.8 767.1 L1955.4 859.1 L2084.0 978.1 L2256.7 1137.7 L2500.7 1363.3 L2871.6 1706.1 L3503.3 2290.1 L4819.9 3507.2" stroke="#8a8480" stroke-width="1" stroke-opacity="0.5" fill="none"/><path d="M-207.8 217.6 L-213.0 222.4 L-218.5 227.5 L-224.2 232.8 L-230.4 238.5 L-236.9 244.6 L-243.9 251.0 L-251.3 257.9 L-259.2 265.3 L-267.7 273.2 L-276.8 281.7 L-286.6 290.8 L-297.2 300.6 L-308.8 311.3 L-321.3 323.0 L-334.9 335.6 L-349.9 349.5 L-366.3 364.8 L-384.5 381.7 L-404.8 400.5 L-427.4 421.6 L-452.9 445.2 L-481.8 472.1 L-514.9 502.8 L-553.0 538.2 L-597.6 579.7 L-650.4 628.7 L-713.9 687.6 L-791.6 759.8 L-888.9 850.3 L-1014.5 966.9 L-1182.7 1123.2 L-1419.5 1343.1 L-1777.8 1675.9 L-2383.0 2238.1 L-3625.3 3392.0 L-7627.0 7109.2" stroke="#8a8480" stroke-width="1" stroke-opacity="0.5" fill="none"/><path d="M1327.1 227.1 L1334.5 232.5 L1342.4 238.1 L1350.7 244.1 L1359.6 250.6 L1369.1 257.4 L1379.2 264.7 L1390.1 272.5 L1401.7 280.9 L1414.3 290.0 L1427.8 299.7 L1442.5 310.3 L1458.4 321.8 L1475.8 334.4 L1494.8 348.1 L1515.8 363.2 L1538.9 379.9 L1564.6 398.4 L1593.3 419.1 L1625.5 442.4 L1662.1 468.7 L1703.8 498.8 L1751.9 533.6 L1808.0 574.0 L1874.3 621.8 L1953.7 679.1 L2050.5 748.9 L2171.4 836.2 L2326.5 948.0 L2532.7 1096.7 L2820.1 1304.1 L3248.8 1613.3 L3956.5 2123.8 L5347.3 3127.0 L9332.8 6002.0" stroke="#8a8480" stroke-width="1" stroke-opacity="0.5" fill="none"/><path d="M-271.9 226.2 L-279.3 231.5 L-287.0 237.1 L-295.2 243.1 L-304.0 249.5 L-313.4 256.2 L-323.3 263.5 L-334.0 271.2 L-345.5 279.6 L-357.9 288.5 L-371.2 298.2 L-385.7 308.7 L-401.4 320.1 L-418.5 332.5 L-437.3 346.0 L-457.9 361.0 L-480.6 377.5 L-505.9 395.8 L-534.1 416.2 L-565.8 439.2 L-601.7 465.2 L-642.6 494.9 L-689.8 529.1 L-744.8 569.0 L-809.7 616.0 L-887.3 672.3 L-981.9 740.9 L-1099.7 826.3 L-1250.6 935.6 L-1450.5 1080.5 L-1728.2 1281.8 L-2139.9 1580.3 L-2813.5 2068.6 L-4115.7 3012.6 L-7695.5 5607.5" stroke="#8a8480" stroke-width="1" stroke-opacity="0.5" fill="none"/><path d="M1399.0 236.8 L1409.0 242.7 L1419.7 249.1 L1431.1 255.8 L1443.2 263.0 L1456.2 270.7 L1470.2 278.9 L1485.3 287.8 L1501.5 297.4 L1519.1 307.8 L1538.1 319.1 L1558.9 331.4 L1581.6 344.8 L1606.6 359.6 L1634.2 375.9 L1664.7 394.0 L1698.8 414.2 L1737.1 436.8 L1780.4 462.4 L1829.8 491.6 L1886.6 525.2 L1952.6 564.2 L2030.3 610.2 L2123.0 665.0 L2235.8 731.7 L2375.7 814.4 L2553.9 919.8 L2788.7 1058.7 L3112.1 1250.0 L3586.0 1530.2 L4347.2 1980.4 L5770.3 2822.1 L9383.9 4959.1" stroke="#8a8480" stroke-width="1" stroke-opacity="0.5" fill="none"/><path d="M-342.8 235.7 L-352.7 241.6 L-363.2 247.9 L-374.5 254.6 L-386.4 261.7 L-399.3 269.3 L-413.0 277.5 L-427.8 286.3 L-443.8 295.8 L-461.1 306.1 L-479.9 317.2 L-500.3 329.4 L-522.7 342.6 L-547.2 357.2 L-574.3 373.3 L-604.3 391.2 L-637.8 411.1 L-675.3 433.4 L-717.8 458.6 L-766.1 487.4 L-821.7 520.4 L-886.2 558.7 L-962.1 603.8 L-1052.6 657.6 L-1162.4 722.9 L-1298.3 803.7 L-1471.0 906.3 L-1697.9 1041.2 L-2009.0 1226.1 L-2461.9 1495.3 L-3182.2 1923.4 L-4506.3 2710.4 L-7740.0 4632.5" stroke="#8a8480" stroke-width="1" stroke-opacity="0.5" fill="none"/><path d="M1478.9 247.6 L1492.1 254.2 L1506.2 261.3 L1521.4 268.9 L1537.6 277.0 L1555.0 285.7 L1573.9 295.2 L1594.2 305.4 L1616.3 316.4 L1640.3 328.5 L1666.6 341.7 L1695.4 356.1 L1727.2 372.0 L1762.5 389.7 L1801.7 409.3 L1845.7 431.4 L1895.3 456.3 L1951.8 484.6 L2016.7 517.1 L2091.9 554.8 L2180.1 599.0 L2285.1 651.6 L2412.2 715.3 L2569.0 793.9 L2767.5 893.4 L3026.9 1023.3 L3380.1 1200.3 L3889.4 1455.6 L4687.5 1855.5 L6117.2 2572.0 L9419.8 4227.0" stroke="#8a8480" stroke-width="1" stroke-opacity="0.5" fill="none"/><path d="M-421.5 246.3 L-434.6 252.9 L-448.5 259.9 L-463.4 267.4 L-479.3 275.4 L-496.5 284.1 L-515.0 293.4 L-535.0 303.5 L-556.7 314.4 L-580.3 326.3 L-606.1 339.3 L-634.4 353.6 L-665.6 369.3 L-700.2 386.7 L-738.6 406.0 L-781.7 427.7 L-830.3 452.2 L-885.5 480.0 L-948.8 511.9 L-1022.2 548.9 L-1108.2 592.2 L-1210.3 643.7 L-1333.7 705.8 L-1485.7 782.3 L-1677.5 879.0 L-1927.1 1004.7 L-2265.5 1175.1 L-2750.0 1419.2 L-3501.5 1797.7 L-4824.6 2464.1 L-7771.2 3948.4" stroke="#8a8480" stroke-width="1" stroke-opacity="0.5" fill="none"/><path d="M1568.3 259.6 L1585.5 267.1 L1603.9 275.1 L1623.6 283.7 L1645.0 293.0 L1668.0 303.0 L1693.0 313.8 L1720.1 325.6 L1749.8 338.5 L1782.3 352.7 L1818.2 368.3 L1857.8 385.5 L1901.9 404.7 L1951.3 426.1 L2006.9 450.3 L2070.1 477.8 L2142.5 509.2 L2226.2 545.6 L2324.1 588.2 L2440.3 638.7 L2580.3 699.6 L2752.3 774.4 L2968.7 868.4 L3249.1 990.3 L3626.9 1154.6 L4163.8 1388.0 L4986.6 1745.7 L6406.8 2363.2 L9446.3 3684.6" stroke="#8a8480" stroke-width="1" stroke-opacity="0.5" fill="none"/><path d="M-509.5 258.2 L-526.4 265.5 L-544.5 273.5 L-563.9 281.9 L-584.9 291.1 L-607.5 301.0 L-632.0 311.7 L-658.7 323.3 L-687.8 336.1 L-719.6 350.0 L-754.7 365.3 L-793.5 382.3 L-836.7 401.2 L-885.0 422.2 L-939.3 446.0 L-1001.0 472.9 L-1071.5 503.8 L-1153.0 539.4 L-1248.3 581.0 L-1361.0 630.3 L-1496.6 689.6 L-1662.8 762.2 L-1871.2 853.2 L-2140.2 970.8 L-2500.8 1128.4 L-3009.4 1350.7 L-3780.7 1687.8 L-5089.0 2259.5 L-7794.3 3441.8" stroke="#8a8480" stroke-width="1" stroke-opacity="0.5" fill="none"/><path d="M1669.1 273.2 L1691.1 281.7 L1714.8 290.8 L1740.4 300.6 L1768.2 311.3 L1798.4 322.8 L1831.3 335.5 L1867.3 349.3 L1907.0 364.6 L1950.9 381.4 L1999.6 400.1 L2054.0 421.0 L2115.3 444.5 L2184.8 471.2 L2264.2 501.7 L2355.8 536.8 L2462.7 577.9 L2589.1 626.4 L2740.8 684.7 L2926.3 755.9 L3158.3 844.9 L3456.7 959.5 L3855.0 1112.4 L4413.1 1326.6 L5251.5 1648.5 L6652.3 2186.3 L9466.8 3266.8 L18015.3 6548.6" stroke="#8a8480" stroke-width="1" stroke-opacity="0.5" fill="none"/><path d="M-608.5 271.5 L-630.2 279.8 L-653.4 288.8 L-678.6 298.5 L-705.8 309.0 L-735.3 320.4 L-767.6 332.9 L-802.9 346.5 L-841.7 361.5 L-884.5 378.0 L-932.1 396.4 L-985.3 416.9 L-1045.1 440.0 L-1112.7 466.1 L-1190.0 495.9 L-1279.0 530.3 L-1382.7 570.3 L-1505.1 617.5 L-1651.7 674.1 L-1830.4 743.1 L-2053.2 829.1 L-2338.6 939.2 L-2717.4 1085.4 L-3244.2 1288.7 L-4027.0 1590.8 L-5312.2 2086.9 L-7812.1 3051.7 L-14792.1 5745.7" stroke="#8a8480" stroke-width="1" stroke-opacity="0.5" fill="none"/><path d="M1783.4 288.6 L1811.6 298.3 L1842.0 308.7 L1875.0 320.1 L1911.1 332.5 L1950.5 346.1 L1993.9 360.9 L2041.7 377.4 L2094.8 395.6 L2154.1 416.0 L2220.7 438.9 L2296.0 464.8 L2382.0 494.3 L2480.9 528.4 L2596.1 567.9 L2731.9 614.6 L2894.2 670.4 L3091.7 738.3 L3337.5 822.7 L3651.3 930.6 L4066.3 1073.2 L4640.6 1270.6 L5487.8 1561.8 L6862.9 2034.4 L9483.1 2935.0 L16437.1 5325.1" stroke="#8a8480" stroke-width="1" stroke-opacity="0.5" fill="none"/><path d="M-720.7 286.6 L-748.3 296.1 L-778.1 306.4 L-810.4 317.6 L-845.7 329.8 L-884.2 343.1 L-926.6 357.7 L-973.3 373.9 L-1025.1 391.8 L-1082.8 411.7 L-1147.7 434.1 L-1220.9 459.4 L-1304.4 488.3 L-1400.4 521.5 L-1511.9 560.0 L-1643.0 605.3 L-1799.5 659.4 L-1989.4 725.0 L-2224.7 806.3 L-2524.0 909.7 L-2917.4 1045.7 L-3457.6 1232.4 L-4245.7 1504.7 L-5503.0 1939.2 L-7826.2 2742.0 L-13568.0 4726.2" stroke="#8a8480" stroke-width="1" stroke-opacity="0.5" fill="none"/></g><g clip-path="url(#gclip)" mask="url(#fm2)"><path d="M525.0 64.7 L520.8 64.8 L516.5 65.0 L512.1 65.1 L507.7 65.3 L503.2 65.4 L498.6 65.6 L493.9 65.8 L489.2 65.9 L484.4 66.1 L479.5 66.3 L474.5 66.5 L469.5 66.6 L464.3 66.8 L459.1 67.0 L453.8 67.2 L448.4 67.4 L442.9 67.6 L437.3 67.8 L431.6 68.0 L425.8 68.2 L419.9 68.4 L413.9 68.6 L407.7 68.8 L401.5 69.1 L395.1 69.3 L388.6 69.5 L382.0 69.8 L375.3 70.0 L368.4 70.3 L361.4 70.5 L354.3 70.8 L347.0 71.0 L339.5 71.3 L331.9 71.6 L324.2 71.8 L316.3 72.1 L308.2 72.4 L299.9 72.7 L291.5 73.0 L282.8 73.3 L274.0 73.6 L265.0 73.9 L255.8 74.3 L246.4 74.6 L236.7 75.0 L226.8 75.3 L216.7 75.7 L206.3 76.0 L195.7 76.4 L184.9 76.8 L173.7 77.2 L162.3 77.6 L150.5 78.0 L138.5 78.5 L126.2 78.9 L113.5 79.4 L100.5 79.8 L87.1 80.3 L73.3 80.8 L59.2 81.3 L44.6 81.8 L29.7 82.3 L14.2 82.9 L-1.6 83.5 L-18.0 84.0 L-34.8 84.6 L-52.2 85.3 L-70.2 85.9 L-88.7 86.6 L-107.8 87.3 L-127.6 88.0 L-148.1 88.7 L-169.2 89.4 L-191.1 90.2 L-213.8 91.0 L-237.3 91.9 L-261.7 92.7 L-287.0 93.7 L-313.3 94.6 L-340.6 95.6 L-369.0 96.6 L-398.6 97.6 L-429.4 98.7 L-461.6 99.9 L-495.1 101.1 L-530.1 102.3 L-566.8 103.6 L-605.1 105.0 L-645.3 106.4 L-687.5 107.9 L-731.7 109.5 L-778.3 111.2 L-827.3 112.9 L-879.0 114.8 L-933.5 116.7 L-991.2 118.8 L-1052.3 121.0 L-1117.2 123.3 L-1186.1 125.8 L-1259.5 128.4 L-1337.8 131.2 L-1421.6 134.2 L-1511.3 137.4 L-1607.8 140.8 L-1711.8 144.5 L-1824.1 148.5 L-1945.9 152.9 L-2078.3 157.6 L-2223.0 162.8 L-2381.5 168.4 L-2556.0 174.7 L-2749.0 181.5 L-2963.8 189.2 L-3204.1 197.8 L-3474.9 207.5 L-3782.2 218.4 L-4134.0 231.0 L-4540.8 245.5 L-5016.5 262.5 L-5580.2 282.6" stroke="#8c8682" stroke-width="1" stroke-opacity="0.5" fill="none"/><path d="M525.0 64.7 L529.2 64.8 L533.5 65.0 L537.9 65.1 L542.3 65.3 L546.9 65.4 L551.4 65.6 L556.1 65.8 L560.8 65.9 L565.6 66.1 L570.5 66.3 L575.5 66.5 L580.5 66.6 L585.7 66.8 L590.9 67.0 L596.2 67.2 L601.7 67.4 L607.2 67.6 L612.8 67.8 L618.5 68.0 L624.3 68.2 L630.2 68.4 L636.2 68.6 L642.4 68.8 L648.6 69.1 L655.0 69.3 L661.5 69.5 L668.1 69.7 L674.9 70.0 L681.8 70.2 L688.8 70.5 L696.0 70.7 L703.3 71.0 L710.8 71.3 L718.4 71.5 L726.2 71.8 L734.1 72.1 L742.2 72.4 L750.5 72.7 L759.0 73.0 L767.6 73.3 L776.5 73.6 L785.5 73.9 L794.8 74.2 L804.3 74.6 L814.0 74.9 L823.9 75.3 L834.1 75.6 L844.5 76.0 L855.2 76.4 L866.1 76.8 L877.3 77.2 L888.8 77.6 L900.6 78.0 L912.7 78.4 L925.1 78.9 L937.9 79.3 L951.0 79.8 L964.5 80.3 L978.3 80.8 L992.6 81.3 L1007.3 81.8 L1022.3 82.3 L1037.9 82.9 L1053.9 83.4 L1070.4 84.0 L1087.4 84.6 L1105.0 85.3 L1123.1 85.9 L1141.8 86.6 L1161.1 87.3 L1181.1 88.0 L1201.8 88.7 L1223.1 89.5 L1245.3 90.2 L1268.2 91.1 L1292.0 91.9 L1316.7 92.8 L1342.4 93.7 L1369.0 94.6 L1396.7 95.6 L1425.6 96.7 L1455.6 97.7 L1486.9 98.8 L1519.5 100.0 L1553.6 101.2 L1589.2 102.5 L1626.5 103.8 L1665.6 105.2 L1706.5 106.6 L1749.5 108.2 L1794.7 109.8 L1842.2 111.5 L1892.3 113.2 L1945.1 115.1 L2001.0 117.1 L2060.1 119.2 L2122.8 121.4 L2189.4 123.8 L2260.2 126.3 L2335.7 129.0 L2416.4 131.8 L2502.8 134.9 L2595.5 138.2 L2695.4 141.8 L2803.1 145.6 L2919.8 149.7 L3046.4 154.2 L3184.5 159.1 L3335.6 164.5 L3501.6 170.4 L3684.9 176.9 L3888.4 184.1 L4115.4 192.2 L4370.4 201.3 L4659.0 211.5 L4988.1 223.2 L5367.0 236.7 L5807.9 252.3 L6327.3 270.8 L6948.3 292.8" stroke="#8c8682" stroke-width="1" stroke-opacity="0.5" fill="none"/><path d="M556.4 65.8 L552.1 65.9 L547.8 66.1 L543.5 66.3 L539.0 66.5 L534.5 66.6 L529.9 66.8 L525.3 67.0 L520.5 67.2 L515.7 67.4 L510.8 67.6 L505.8 67.8 L500.7 68.0 L495.5 68.2 L490.2 68.4 L484.8 68.6 L479.4 68.9 L473.8 69.1 L468.1 69.3 L462.3 69.5 L456.4 69.8 L450.4 70.0 L444.3 70.3 L438.0 70.5 L431.6 70.8 L425.1 71.0 L418.4 71.3 L411.7 71.6 L404.7 71.8 L397.7 72.1 L390.4 72.4 L383.1 72.7 L375.5 73.0 L367.8 73.3 L359.9 73.6 L351.9 74.0 L343.6 74.3 L335.2 74.6 L326.6 75.0 L317.7 75.3 L308.7 75.7 L299.4 76.1 L289.9 76.4 L280.2 76.8 L270.3 77.2 L260.0 77.6 L249.6 78.1 L238.8 78.5 L227.8 78.9 L216.4 79.4 L204.8 79.8 L192.8 80.3 L180.5 80.8 L167.9 81.3 L154.9 81.8 L141.5 82.4 L127.7 82.9 L113.5 83.5 L98.9 84.1 L83.8 84.7 L68.2 85.3 L52.2 85.9 L35.6 86.6 L18.5 87.3 L0.8 88.0 L-17.5 88.7 L-36.4 89.5 L-56.0 90.3 L-76.3 91.1 L-97.3 91.9 L-119.1 92.8 L-141.8 93.7 L-165.3 94.7 L-189.8 95.6 L-215.2 96.6 L-241.7 97.7 L-269.3 98.8 L-298.0 100.0 L-328.1 101.2 L-359.4 102.4 L-392.2 103.7 L-426.6 105.1 L-462.6 106.5 L-500.3 108.1 L-540.0 109.6 L-581.7 111.3 L-625.6 113.1 L-671.9 114.9 L-720.8 116.9 L-772.6 118.9 L-827.3 121.1 L-885.5 123.5 L-947.3 125.9 L-1013.1 128.6 L-1083.4 131.4 L-1158.5 134.4 L-1239.1 137.6 L-1325.7 141.1 L-1419.1 144.8 L-1520.0 148.9 L-1629.4 153.2 L-1748.5 158.0 L-1878.5 163.2 L-2021.0 168.9 L-2178.1 175.2 L-2351.9 182.1 L-2545.3 189.9 L-2761.9 198.5 L-3006.0 208.3 L-3283.4 219.4 L-3601.2 232.1 L-3968.9 246.8 L-4399.5 264.1 L-4910.4 284.5 L-5526.5 309.2 L-6284.0 339.5 L-7237.9 377.6 L-8475.9 427.2 L-10147.2 494.0 L-12527.6 589.3 L-16189.6 735.8" stroke="#8c8682" stroke-width="1" stroke-opacity="0.5" fill="none"/><path d="M493.6 65.8 L497.9 65.9 L502.2 66.1 L506.5 66.3 L511.0 66.5 L515.5 66.7 L520.1 66.8 L524.7 67.0 L529.5 67.2 L534.3 67.4 L539.2 67.6 L544.2 67.8 L549.3 68.0 L554.5 68.2 L559.8 68.4 L565.2 68.6 L570.6 68.8 L576.2 69.1 L581.9 69.3 L587.7 69.5 L593.6 69.8 L599.7 70.0 L605.8 70.3 L612.1 70.5 L618.5 70.8 L625.0 71.0 L631.6 71.3 L638.4 71.6 L645.4 71.8 L652.5 72.1 L659.7 72.4 L667.1 72.7 L674.7 73.0 L682.4 73.3 L690.3 73.6 L698.4 73.9 L706.6 74.3 L715.1 74.6 L723.8 75.0 L732.6 75.3 L741.7 75.7 L751.0 76.0 L760.5 76.4 L770.3 76.8 L780.3 77.2 L790.5 77.6 L801.1 78.0 L811.9 78.5 L823.0 78.9 L834.4 79.4 L846.1 79.8 L858.1 80.3 L870.5 80.8 L883.2 81.3 L896.3 81.8 L909.7 82.4 L923.6 82.9 L937.9 83.5 L952.6 84.1 L967.8 84.7 L983.5 85.3 L999.6 85.9 L1016.3 86.6 L1033.6 87.3 L1051.4 88.0 L1069.9 88.7 L1089.0 89.5 L1108.7 90.3 L1129.2 91.1 L1150.5 92.0 L1172.5 92.8 L1195.4 93.7 L1219.2 94.7 L1243.9 95.7 L1269.7 96.7 L1296.5 97.8 L1324.4 98.9 L1353.6 100.0 L1384.0 101.3 L1415.8 102.5 L1449.1 103.9 L1484.0 105.2 L1520.5 106.7 L1558.9 108.2 L1599.3 109.8 L1641.7 111.5 L1686.5 113.3 L1733.7 115.2 L1783.5 117.2 L1836.4 119.3 L1892.3 121.5 L1951.8 123.9 L2015.1 126.4 L2082.6 129.1 L2154.7 132.0 L2231.9 135.1 L2314.7 138.4 L2404.0 141.9 L2500.2 145.7 L2604.5 149.9 L2717.7 154.4 L2841.2 159.3 L2976.3 164.7 L3124.7 170.6 L3288.7 177.2 L3470.6 184.4 L3673.7 192.5 L3901.9 201.6 L4160.2 211.9 L4454.8 223.6 L4794.0 237.2 L5188.9 252.9 L5654.4 271.4 L6211.1 293.6 L6888.9 320.6 L7732.0 354.2 L8809.6 397.2 L10234.8 454.0 L12208.7 532.6 L15123.2 648.8 L19861.3 837.6" stroke="#8c8682" stroke-width="1" stroke-opacity="0.5" fill="none"/><path d="M591.5 67.0 L587.4 67.2 L583.1 67.4 L578.8 67.6 L574.4 67.8 L569.9 68.0 L565.3 68.2 L560.7 68.4 L556.0 68.6 L551.1 68.9 L546.2 69.1 L541.2 69.3 L536.1 69.5 L530.9 69.8 L525.6 70.0 L520.2 70.3 L514.7 70.5 L509.1 70.8 L503.4 71.0 L497.5 71.3 L491.5 71.6 L485.4 71.9 L479.2 72.1 L472.8 72.4 L466.3 72.7 L459.7 73.0 L452.9 73.3 L446.0 73.6 L438.9 74.0 L431.6 74.3 L424.2 74.6 L416.6 75.0 L408.8 75.3 L400.9 75.7 L392.7 76.1 L384.4 76.5 L375.8 76.8 L367.0 77.2 L358.0 77.7 L348.8 78.1 L339.3 78.5 L329.6 78.9 L319.6 79.4 L309.4 79.9 L298.8 80.3 L288.0 80.8 L276.8 81.3 L265.4 81.9 L253.6 82.4 L241.4 83.0 L228.9 83.5 L216.0 84.1 L202.8 84.7 L189.1 85.3 L174.9 86.0 L160.3 86.7 L145.2 87.3 L129.6 88.0 L113.5 88.8 L96.8 89.5 L79.6 90.3 L61.7 91.1 L43.1 92.0 L23.9 92.9 L3.9 93.8 L-16.8 94.7 L-38.4 95.7 L-60.8 96.7 L-84.2 97.8 L-108.5 98.9 L-133.9 100.0 L-160.4 101.2 L-188.0 102.5 L-217.0 103.8 L-247.3 105.2 L-279.0 106.6 L-312.4 108.2 L-347.4 109.8 L-384.2 111.4 L-423.0 113.2 L-463.9 115.1 L-507.0 117.0 L-552.7 119.1 L-601.1 121.3 L-652.5 123.6 L-707.1 126.1 L-765.3 128.8 L-827.4 131.6 L-893.9 134.6 L-965.1 137.9 L-1041.7 141.4 L-1124.3 145.1 L-1213.6 149.2 L-1310.5 153.6 L-1415.9 158.4 L-1531.1 163.6 L-1657.5 169.4 L-1796.7 175.7 L-1950.9 182.7 L-2122.5 190.5 L-2314.9 199.3 L-2531.8 209.2 L-2778.4 220.4 L-3061.3 233.3 L-3388.9 248.2 L-3772.9 265.7 L-4229.1 286.4 L-4780.3 311.5 L-5459.2 342.4 L-6316.2 381.4 L-7431.9 432.2 L-8944.4 501.0 L-11111.2 599.6 L-14473.6 752.6 L-20398.8 1022.3 L-33620.5 1624.0 L-89212.4 4154.1" stroke="#8c8682" stroke-width="1" stroke-opacity="0.5" fill="none"/><path d="M458.5 67.0 L462.7 67.2 L466.9 67.4 L471.2 67.6 L475.6 67.8 L480.1 68.0 L484.7 68.2 L489.3 68.4 L494.0 68.6 L498.9 68.9 L503.8 69.1 L508.8 69.3 L513.9 69.5 L519.1 69.8 L524.4 70.0 L529.8 70.3 L535.3 70.5 L540.9 70.8 L546.6 71.0 L552.5 71.3 L558.5 71.6 L564.6 71.8 L570.8 72.1 L577.2 72.4 L583.7 72.7 L590.3 73.0 L597.1 73.3 L604.1 73.6 L611.2 74.0 L618.4 74.3 L625.9 74.6 L633.5 75.0 L641.3 75.3 L649.2 75.7 L657.4 76.1 L665.8 76.4 L674.4 76.8 L683.2 77.2 L692.2 77.6 L701.5 78.1 L711.0 78.5 L720.7 78.9 L730.7 79.4 L741.0 79.9 L751.6 80.3 L762.5 80.8 L773.7 81.3 L785.2 81.9 L797.0 82.4 L809.2 82.9 L821.8 83.5 L834.7 84.1 L848.1 84.7 L861.9 85.3 L876.1 86.0 L890.8 86.7 L905.9 87.3 L921.6 88.1 L937.9 88.8 L954.7 89.5 L972.0 90.3 L990.1 91.2 L1008.8 92.0 L1028.1 92.9 L1048.3 93.8 L1069.2 94.7 L1091.0 95.7 L1113.6 96.8 L1137.2 97.8 L1161.8 98.9 L1187.4 100.1 L1214.2 101.3 L1242.2 102.6 L1271.5 103.9 L1302.2 105.3 L1334.3 106.8 L1368.1 108.3 L1403.6 109.9 L1440.9 111.6 L1480.3 113.4 L1521.9 115.3 L1565.8 117.3 L1612.2 119.4 L1661.5 121.6 L1713.9 124.0 L1769.6 126.5 L1829.0 129.2 L1892.4 132.1 L1960.4 135.2 L2033.4 138.5 L2111.9 142.1 L2196.7 145.9 L2288.5 150.1 L2388.3 154.6 L2497.0 159.5 L2616.0 164.9 L2746.8 170.9 L2891.3 177.4 L3051.6 184.7 L3230.7 192.8 L3431.8 202.0 L3659.5 212.3 L3919.4 224.1 L4218.7 237.7 L4567.2 253.5 L4978.1 272.1 L5469.8 294.4 L6068.8 321.6 L6814.5 355.4 L7768.1 398.7 L9030.9 456.0 L10782.3 535.5 L13374.0 653.1 L17601.1 844.9 L25726.1 1213.6 L47751.0 2212.9" stroke="#8c8682" stroke-width="1" stroke-opacity="0.5" fill="none"/><path d="M631.3 68.4 L627.2 68.7 L623.0 68.9 L618.8 69.1 L614.5 69.3 L610.1 69.6 L605.6 69.8 L601.0 70.0 L596.3 70.3 L591.6 70.5 L586.7 70.8 L581.8 71.0 L576.7 71.3 L571.6 71.6 L566.3 71.9 L560.9 72.1 L555.4 72.4 L549.8 72.7 L544.1 73.0 L538.2 73.3 L532.2 73.7 L526.1 74.0 L519.8 74.3 L513.4 74.7 L506.9 75.0 L500.1 75.4 L493.3 75.7 L486.2 76.1 L479.0 76.5 L471.6 76.9 L464.0 77.3 L456.2 77.7 L448.3 78.1 L440.1 78.5 L431.7 79.0 L423.0 79.4 L414.2 79.9 L405.1 80.4 L395.7 80.9 L386.1 81.4 L376.2 81.9 L366.0 82.4 L355.5 83.0 L344.7 83.6 L333.6 84.1 L322.1 84.8 L310.2 85.4 L298.0 86.0 L285.4 86.7 L272.3 87.4 L258.9 88.1 L244.9 88.8 L230.5 89.6 L215.6 90.4 L200.1 91.2 L184.1 92.0 L167.4 92.9 L150.1 93.8 L132.2 94.8 L113.6 95.8 L94.1 96.8 L73.9 97.8 L52.9 99.0 L30.9 100.1 L8.0 101.3 L-15.9 102.6 L-41.0 103.9 L-67.2 105.3 L-94.7 106.7 L-123.6 108.3 L-153.9 109.9 L-185.8 111.6 L-219.3 113.3 L-254.8 115.2 L-292.2 117.2 L-331.8 119.3 L-373.7 121.5 L-418.2 123.8 L-465.6 126.3 L-516.0 129.0 L-569.9 131.8 L-627.5 134.9 L-689.3 138.1 L-755.8 141.6 L-827.5 145.4 L-905.0 149.5 L-989.2 153.9 L-1080.8 158.8 L-1180.9 164.1 L-1290.7 169.9 L-1411.8 176.3 L-1546.0 183.3 L-1695.4 191.2 L-1863.0 200.1 L-2052.1 210.0 L-2267.2 221.4 L-2514.1 234.4 L-2800.5 249.5 L-3136.5 267.3 L-3536.2 288.4 L-4019.9 313.9 L-4616.9 345.4 L-5372.3 385.3 L-6359.1 437.3 L-7702.4 508.2 L-9638.3 610.4 L-12669.9 770.4 L-18094.4 1056.6 L-30592.1 1716.1 L-89914.8 4846.7" stroke="#8c8682" stroke-width="1" stroke-opacity="0.5" fill="none"/><path d="M418.8 68.5 L422.9 68.7 L427.0 68.9 L431.3 69.1 L435.6 69.3 L440.0 69.6 L444.5 69.8 L449.0 70.0 L453.7 70.3 L458.5 70.5 L463.3 70.8 L468.3 71.1 L473.3 71.3 L478.5 71.6 L483.7 71.9 L489.1 72.2 L494.6 72.4 L500.2 72.7 L505.9 73.0 L511.8 73.3 L517.8 73.7 L523.9 74.0 L530.2 74.3 L536.6 74.7 L543.1 75.0 L549.9 75.4 L556.8 75.7 L563.8 76.1 L571.0 76.5 L578.4 76.9 L586.0 77.3 L593.8 77.7 L601.8 78.1 L610.0 78.5 L618.4 79.0 L627.0 79.4 L635.9 79.9 L645.0 80.4 L654.4 80.9 L664.1 81.4 L674.0 81.9 L684.2 82.4 L694.7 83.0 L705.6 83.6 L716.7 84.1 L728.3 84.8 L740.2 85.4 L752.4 86.0 L765.1 86.7 L778.2 87.4 L791.7 88.1 L805.7 88.8 L820.2 89.6 L835.2 90.4 L850.8 91.2 L866.9 92.1 L883.6 92.9 L901.0 93.8 L919.1 94.8 L937.8 95.8 L957.4 96.8 L977.7 97.9 L998.9 99.0 L1021.1 100.2 L1044.2 101.4 L1068.3 102.7 L1093.6 104.0 L1120.1 105.4 L1147.9 106.8 L1177.0 108.4 L1207.6 110.0 L1239.9 111.7 L1273.9 113.5 L1309.7 115.4 L1347.6 117.4 L1387.8 119.5 L1430.3 121.7 L1475.5 124.1 L1523.6 126.6 L1574.9 129.3 L1629.7 132.2 L1688.4 135.3 L1751.4 138.6 L1819.3 142.2 L1892.5 146.1 L1971.8 150.2 L2058.0 154.8 L2151.9 159.7 L2254.8 165.2 L2367.8 171.1 L2492.7 177.7 L2631.3 185.0 L2786.1 193.1 L2960.1 202.3 L3157.1 212.7 L3381.9 224.5 L3641.0 238.2 L3942.7 254.0 L4298.5 272.8 L4724.6 295.2 L5243.8 322.6 L5890.7 356.6 L6718.6 400.3 L7816.2 458.1 L9340.7 538.4 L11601.5 657.4 L15301.5 852.3 L22456.9 1229.2 L42148.3 2266.3" stroke="#8c8682" stroke-width="1" stroke-opacity="0.5" fill="none"/><path d="M676.5 70.0 L672.6 70.3 L668.6 70.5 L664.5 70.8 L660.3 71.1 L656.1 71.3 L651.7 71.6 L647.3 71.9 L642.8 72.2 L638.2 72.5 L633.4 72.7 L628.6 73.1 L623.7 73.4 L618.6 73.7 L613.5 74.0 L608.2 74.3 L602.8 74.7 L597.3 75.0 L591.6 75.4 L585.8 75.7 L579.9 76.1 L573.8 76.5 L567.6 76.9 L561.2 77.3 L554.7 77.7 L548.0 78.1 L541.1 78.5 L534.0 79.0 L526.7 79.4 L519.3 79.9 L511.6 80.4 L503.7 80.9 L495.6 81.4 L487.3 81.9 L478.7 82.5 L469.9 83.0 L460.8 83.6 L451.4 84.2 L441.7 84.8 L431.7 85.4 L421.4 86.1 L410.8 86.7 L399.8 87.4 L388.5 88.1 L376.7 88.9 L364.6 89.6 L352.0 90.4 L339.0 91.2 L325.4 92.1 L311.4 93.0 L296.9 93.9 L281.7 94.8 L266.0 95.8 L249.7 96.8 L232.6 97.9 L214.9 99.0 L196.4 100.2 L177.0 101.4 L156.8 102.7 L135.7 104.0 L113.6 105.4 L90.4 106.9 L66.1 108.4 L40.5 110.0 L13.6 111.7 L-14.7 113.5 L-44.6 115.3 L-76.2 117.3 L-109.6 119.4 L-145.0 121.6 L-182.6 124.0 L-222.6 126.5 L-265.2 129.2 L-310.8 132.0 L-359.5 135.1 L-411.7 138.4 L-467.9 141.9 L-528.6 145.7 L-594.2 149.8 L-665.3 154.3 L-742.9 159.2 L-827.6 164.5 L-920.7 170.3 L-1023.3 176.8 L-1137.1 183.9 L-1263.9 191.9 L-1406.1 200.8 L-1566.7 210.9 L-1749.6 222.4 L-1959.7 235.6 L-2203.5 250.9 L-2490.0 268.9 L-2831.3 290.3 L-3245.0 316.3 L-3756.6 348.4 L-4405.6 389.2 L-5256.2 442.6 L-6419.2 515.7 L-8105.6 621.6 L-10771.6 789.0 L-15619.7 1093.5 L-27184.9 1819.8 L-90903.2 5821.3" stroke="#8c8682" stroke-width="1" stroke-opacity="0.5" fill="none"/><path d="M373.7 70.1 L377.6 70.3 L381.6 70.6 L385.7 70.8 L389.8 71.1 L394.1 71.3 L398.4 71.6 L402.8 71.9 L407.3 72.2 L411.9 72.5 L416.7 72.8 L421.5 73.1 L426.4 73.4 L431.4 73.7 L436.6 74.0 L441.9 74.3 L447.2 74.7 L452.8 75.0 L458.4 75.4 L464.2 75.7 L470.1 76.1 L476.2 76.5 L482.4 76.9 L488.8 77.3 L495.3 77.7 L502.0 78.1 L508.9 78.5 L516.0 79.0 L523.3 79.4 L530.7 79.9 L538.4 80.4 L546.3 80.9 L554.4 81.4 L562.7 81.9 L571.3 82.5 L580.2 83.0 L589.3 83.6 L598.7 84.2 L608.4 84.8 L618.3 85.4 L628.7 86.1 L639.3 86.7 L650.3 87.4 L661.7 88.1 L673.5 88.9 L685.6 89.6 L698.3 90.4 L711.3 91.2 L724.9 92.1 L739.0 93.0 L753.6 93.9 L768.7 94.9 L784.5 95.8 L800.9 96.9 L818.1 97.9 L835.9 99.1 L854.5 100.2 L873.9 101.5 L894.3 102.7 L915.5 104.1 L937.8 105.5 L961.1 106.9 L985.6 108.5 L1011.4 110.1 L1038.5 111.8 L1067.1 113.6 L1097.3 115.5 L1129.2 117.5 L1162.9 119.6 L1198.7 121.8 L1236.7 124.2 L1277.2 126.8 L1320.3 129.5 L1366.5 132.4 L1415.9 135.5 L1468.9 138.8 L1526.0 142.4 L1587.6 146.2 L1654.4 150.4 L1726.9 155.0 L1806.0 159.9 L1892.6 165.4 L1987.8 171.3 L2093.0 177.9 L2209.8 185.3 L2340.2 193.4 L2486.8 202.6 L2652.8 213.1 L2842.4 225.0 L3060.8 238.7 L3315.3 254.6 L3615.6 273.5 L3975.3 296.0 L4413.9 323.6 L4960.6 357.9 L5661.0 401.8 L6590.6 460.1 L7883.7 541.3 L9805.3 661.8 L12961.2 859.8 L19102.6 1245.2 L36269.2 2322.2" stroke="#8c8682" stroke-width="1" stroke-opacity="0.5" fill="none"/><path d="M728.5 71.9 L724.8 72.2 L721.1 72.5 L717.2 72.8 L713.3 73.1 L709.3 73.4 L705.2 73.7 L701.0 74.0 L696.8 74.3 L692.4 74.7 L687.9 75.0 L683.3 75.4 L678.6 75.8 L673.8 76.1 L668.9 76.5 L663.8 76.9 L658.7 77.3 L653.3 77.7 L647.9 78.1 L642.3 78.6 L636.6 79.0 L630.7 79.5 L624.6 79.9 L618.4 80.4 L612.0 80.9 L605.4 81.4 L598.7 82.0 L591.7 82.5 L584.5 83.1 L577.1 83.6 L569.5 84.2 L561.7 84.8 L553.6 85.5 L545.2 86.1 L536.6 86.8 L527.7 87.5 L518.5 88.2 L508.9 88.9 L499.1 89.7 L488.9 90.5 L478.3 91.3 L467.3 92.1 L455.9 93.0 L444.1 93.9 L431.8 94.9 L419.0 95.9 L405.8 96.9 L391.9 98.0 L377.5 99.1 L362.5 100.3 L346.8 101.5 L330.3 102.8 L313.2 104.1 L295.2 105.5 L276.3 107.0 L256.6 108.5 L235.8 110.1 L213.9 111.8 L190.8 113.6 L166.5 115.5 L140.8 117.5 L113.7 119.6 L84.8 121.8 L54.3 124.2 L21.7 126.7 L-13.0 129.4 L-50.0 132.3 L-89.7 135.3 L-132.3 138.6 L-178.1 142.2 L-227.5 146.0 L-281.0 150.2 L-339.0 154.7 L-402.3 159.6 L-471.4 164.9 L-547.4 170.8 L-631.2 177.3 L-724.2 184.5 L-827.8 192.6 L-944.2 201.6 L-1075.7 211.8 L-1225.5 223.4 L-1397.7 236.8 L-1597.9 252.3 L-1833.3 270.6 L-2114.2 292.4 L-2455.1 318.8 L-2877.7 351.6 L-3415.2 393.3 L-4121.9 448.1 L-5092.6 523.4 L-6509.4 633.2 L-8771.1 808.6 L-12955.1 1133.1 L-23322.9 1937.2 L-92397.0 7294.4" stroke="#8c8682" stroke-width="1" stroke-opacity="0.5" fill="none"/><path d="M321.9 71.9 L325.5 72.2 L329.3 72.5 L333.1 72.8 L337.0 73.1 L341.0 73.4 L345.0 73.7 L349.2 74.0 L353.5 74.4 L357.8 74.7 L362.3 75.1 L366.9 75.4 L371.6 75.8 L376.4 76.1 L381.3 76.5 L386.3 76.9 L391.5 77.3 L396.8 77.7 L402.2 78.1 L407.8 78.6 L413.5 79.0 L419.4 79.5 L425.5 79.9 L431.7 80.4 L438.1 80.9 L444.6 81.4 L451.4 82.0 L458.3 82.5 L465.5 83.1 L472.9 83.6 L480.5 84.2 L488.3 84.8 L496.4 85.5 L504.8 86.1 L513.4 86.8 L522.3 87.5 L531.5 88.2 L541.1 88.9 L550.9 89.7 L561.2 90.5 L571.8 91.3 L582.7 92.1 L594.1 93.0 L606.0 93.9 L618.3 94.9 L631.1 95.9 L644.4 96.9 L658.2 98.0 L672.7 99.1 L687.8 100.3 L703.5 101.5 L720.0 102.8 L737.2 104.1 L755.2 105.5 L774.2 107.0 L794.0 108.5 L814.9 110.2 L836.9 111.9 L860.1 113.7 L884.5 115.6 L910.4 117.6 L937.7 119.7 L966.7 121.9 L997.6 124.3 L1030.4 126.9 L1065.3 129.6 L1102.7 132.5 L1142.8 135.6 L1185.8 138.9 L1232.1 142.5 L1282.1 146.4 L1336.3 150.6 L1395.1 155.2 L1459.3 160.1 L1529.5 165.6 L1606.8 171.6 L1692.2 178.2 L1786.9 185.6 L1892.8 193.8 L2011.9 203.0 L2146.7 213.5 L2300.7 225.4 L2478.2 239.2 L2685.1 255.2 L2929.3 274.2 L3221.9 296.9 L3578.9 324.5 L4024.3 359.1 L4595.3 403.4 L5353.9 462.2 L6410.8 544.2 L7985.0 666.3 L10579.3 867.5 L15660.0 1261.6 L30092.6 2381.0" stroke="#8c8682" stroke-width="1" stroke-opacity="0.5" fill="none"/><path d="M788.8 74.0 L785.5 74.4 L782.1 74.7 L778.7 75.1 L775.2 75.4 L771.6 75.8 L767.9 76.1 L764.1 76.5 L760.3 76.9 L756.3 77.3 L752.2 77.7 L748.1 78.2 L743.8 78.6 L739.4 79.0 L734.9 79.5 L730.2 80.0 L725.5 80.5 L720.6 80.9 L715.5 81.5 L710.3 82.0 L705.0 82.5 L699.5 83.1 L693.8 83.7 L688.0 84.2 L682.0 84.9 L675.8 85.5 L669.4 86.1 L662.8 86.8 L655.9 87.5 L648.9 88.2 L641.5 89.0 L634.0 89.7 L626.2 90.5 L618.0 91.3 L609.6 92.2 L600.9 93.1 L591.8 94.0 L582.4 95.0 L572.6 96.0 L562.4 97.0 L551.8 98.1 L540.7 99.2 L529.2 100.4 L517.1 101.6 L504.5 102.9 L491.4 104.2 L477.6 105.6 L463.1 107.1 L447.9 108.6 L431.9 110.2 L415.1 111.9 L397.4 113.7 L378.8 115.6 L359.0 117.6 L338.1 119.7 L316.0 122.0 L292.5 124.4 L267.5 126.9 L240.8 129.6 L212.3 132.5 L181.8 135.6 L149.0 138.9 L113.8 142.5 L75.7 146.3 L34.6 150.5 L-10.2 155.0 L-58.9 160.0 L-112.2 165.4 L-170.8 171.3 L-235.4 177.9 L-307.2 185.2 L-387.2 193.3 L-477.1 202.4 L-578.8 212.7 L-694.7 224.5 L-828.1 238.0 L-983.3 253.7 L-1166.0 272.3 L-1384.4 294.4 L-1649.8 321.3 L-1979.6 354.8 L-2400.1 397.4 L-2954.9 453.7 L-3720.6 531.3 L-4845.5 645.4 L-6659.8 829.4 L-10077.8 1176.0 L-18908.6 2071.5" stroke="#8c8682" stroke-width="1" stroke-opacity="0.5" fill="none"/><path d="M261.8 74.1 L265.0 74.4 L268.4 74.7 L271.8 75.1 L275.3 75.4 L278.9 75.8 L282.6 76.2 L286.3 76.5 L290.2 76.9 L294.1 77.3 L298.2 77.8 L302.3 78.2 L306.6 78.6 L311.0 79.1 L315.5 79.5 L320.1 80.0 L324.9 80.5 L329.7 81.0 L334.8 81.5 L339.9 82.0 L345.3 82.5 L350.7 83.1 L356.4 83.7 L362.2 84.3 L368.2 84.9 L374.4 85.5 L380.8 86.1 L387.4 86.8 L394.2 87.5 L401.3 88.2 L408.6 89.0 L416.1 89.7 L423.9 90.5 L432.0 91.3 L440.4 92.2 L449.2 93.1 L458.2 94.0 L467.6 95.0 L477.4 95.9 L487.6 97.0 L498.2 98.1 L509.3 99.2 L520.8 100.4 L532.9 101.6 L545.5 102.9 L558.6 104.2 L572.5 105.6 L586.9 107.1 L602.1 108.6 L618.1 110.2 L635.0 111.9 L652.7 113.7 L671.4 115.6 L691.2 117.7 L712.1 119.8 L734.4 122.0 L758.0 124.4 L783.1 127.0 L809.9 129.7 L838.5 132.6 L869.2 135.7 L902.1 139.1 L937.6 142.7 L975.9 146.6 L1017.4 150.8 L1062.5 155.3 L1111.7 160.3 L1165.5 165.8 L1224.7 171.8 L1290.2 178.5 L1362.8 185.8 L1444.0 194.1 L1535.3 203.3 L1638.8 213.8 L1756.9 225.8 L1893.1 239.7 L2052.0 255.8 L2239.5 274.8 L2464.4 297.7 L2738.9 325.5 L3081.5 360.3 L3521.2 405.0 L4106.0 464.3 L4922.0 547.2 L6140.1 670.8 L8154.5 875.3 L12125.5 1278.5 L23595.4 2442.9" stroke="#8c8682" stroke-width="1" stroke-opacity="0.5" fill="none"/><path d="M859.6 76.5 L856.9 76.9 L854.2 77.3 L851.4 77.8 L848.5 78.2 L845.5 78.6 L842.5 79.1 L839.3 79.5 L836.1 80.0 L832.8 80.5 L829.4 81.0 L825.9 81.5 L822.3 82.0 L818.6 82.6 L814.8 83.1 L810.9 83.7 L806.8 84.3 L802.6 84.9 L798.3 85.5 L793.9 86.2 L789.3 86.9 L784.6 87.5 L779.7 88.3 L774.6 89.0 L769.3 89.8 L763.9 90.6 L758.3 91.4 L752.4 92.3 L746.4 93.1 L740.1 94.1 L733.5 95.0 L726.7 96.0 L719.6 97.1 L712.3 98.1 L704.6 99.3 L696.6 100.4 L688.2 101.7 L679.5 102.9 L670.3 104.3 L660.7 105.7 L650.7 107.2 L640.1 108.7 L629.0 110.3 L617.3 112.0 L605.0 113.8 L592.0 115.7 L578.3 117.8 L563.8 119.9 L548.4 122.1 L532.0 124.5 L514.6 127.1 L496.1 129.8 L476.2 132.7 L455.0 135.8 L432.2 139.2 L407.6 142.8 L381.1 146.7 L352.4 150.9 L321.3 155.4 L287.3 160.4 L250.1 165.8 L209.2 171.8 L164.1 178.5 L114.0 185.8 L58.0 194.0 L-4.8 203.2 L-76.0 213.6 L-157.2 225.5 L-250.7 239.2 L-359.6 255.2 L-488.0 274.0 L-641.6 296.5 L-828.7 323.9 L-1061.6 358.0 L-1359.4 401.7 L-1753.8 459.4 L-2300.6 539.5 L-3109.5 658.1 L-4428.4 851.3 L-6961.4 1222.4 L-13814.5 2226.4" stroke="#8c8682" stroke-width="1" stroke-opacity="0.5" fill="none"/><path d="M191.3 76.6 L194.0 77.0 L196.7 77.4 L199.5 77.8 L202.4 78.2 L205.3 78.6 L208.4 79.1 L211.5 79.5 L214.7 80.0 L218.0 80.5 L221.3 81.0 L224.8 81.5 L228.4 82.0 L232.1 82.6 L235.9 83.1 L239.8 83.7 L243.8 84.3 L248.0 84.9 L252.3 85.5 L256.7 86.2 L261.3 86.9 L266.0 87.5 L270.9 88.3 L275.9 89.0 L281.2 89.8 L286.6 90.6 L292.2 91.4 L298.0 92.2 L304.0 93.1 L310.3 94.1 L316.8 95.0 L323.6 96.0 L330.7 97.0 L338.0 98.1 L345.7 99.2 L353.7 100.4 L362.0 101.6 L370.7 102.9 L379.9 104.3 L389.4 105.7 L399.5 107.1 L410.0 108.7 L421.1 110.3 L432.7 112.0 L445.0 113.8 L458.0 115.7 L471.7 117.7 L486.2 119.9 L501.6 122.1 L518.0 124.5 L535.4 127.1 L553.9 129.8 L573.8 132.7 L595.1 135.9 L617.9 139.2 L642.5 142.8 L669.0 146.7 L697.8 150.9 L729.1 155.5 L763.2 160.5 L800.5 166.0 L841.6 172.1 L887.0 178.7 L937.4 186.1 L993.8 194.4 L1057.1 203.7 L1128.9 214.2 L1211.0 226.3 L1305.6 240.2 L1416.0 256.4 L1546.4 275.5 L1702.7 298.5 L1893.7 326.5 L2132.3 361.6 L2438.7 406.5 L2846.7 466.5 L3416.9 550.2 L4269.9 675.4 L5685.8 883.3 L8495.4 1295.8 L16752.0 2508.0" stroke="#8c8682" stroke-width="1" stroke-opacity="0.5" fill="none"/><path d="M1172.8 87.7 L1174.4 88.4 L1176.2 89.1 L1177.9 89.9 L1179.8 90.7 L1181.7 91.6 L1183.7 92.4 L1185.8 93.3 L1187.9 94.2 L1190.1 95.2 L1192.4 96.2 L1194.8 97.3 L1197.3 98.4 L1200.0 99.5 L1202.7 100.7 L1205.5 101.9 L1208.5 103.2 L1211.6 104.6 L1214.9 106.0 L1218.3 107.5 L1221.9 109.0 L1225.7 110.7 L1229.7 112.4 L1233.9 114.2 L1238.3 116.2 L1243.0 118.2 L1248.0 120.4 L1253.3 122.7 L1258.9 125.1 L1264.8 127.7 L1271.2 130.4 L1278.0 133.4 L1285.3 136.6 L1293.1 140.0 L1301.5 143.6 L1310.6 147.6 L1320.5 151.9 L1331.2 156.6 L1342.9 161.6 L1355.8 167.2 L1369.9 173.4 L1385.5 180.2 L1402.9 187.7 L1422.3 196.1 L1444.1 205.6 L1468.9 216.4 L1497.3 228.8 L1530.0 243.0 L1568.3 259.6 L1613.6 279.3 L1668.0 303.0 L1734.6 331.9 L1818.2 368.3 L1925.9 415.1 L2070.1 477.8 L2273.2 566.1 L2580.3 699.6 L3099.2 925.2 L4163.8 1388.0 L7589.5 2877.4" stroke="#8c8682" stroke-width="1" stroke-opacity="0.5" fill="none"/><path d="M-119.4 87.7 L-121.0 88.4 L-122.7 89.1 L-124.5 89.9 L-126.3 90.7 L-128.2 91.5 L-130.2 92.4 L-132.2 93.3 L-134.3 94.2 L-136.5 95.2 L-138.8 96.2 L-141.2 97.2 L-143.7 98.3 L-146.3 99.4 L-149.0 100.6 L-151.8 101.8 L-154.8 103.1 L-157.8 104.5 L-161.1 105.9 L-164.5 107.4 L-168.0 108.9 L-171.8 110.6 L-175.7 112.3 L-179.8 114.1 L-184.2 116.0 L-188.9 118.0 L-193.8 120.2 L-199.0 122.4 L-204.5 124.9 L-210.4 127.4 L-216.7 130.2 L-223.4 133.1 L-230.6 136.3 L-238.3 139.6 L-246.6 143.3 L-255.6 147.2 L-265.4 151.5 L-276.0 156.1 L-287.5 161.2 L-300.2 166.7 L-314.1 172.8 L-329.5 179.5 L-346.7 187.0 L-365.8 195.4 L-387.3 204.8 L-411.8 215.4 L-439.7 227.6 L-471.9 241.7 L-509.5 258.2 L-554.0 277.6 L-607.5 301.0 L-672.9 329.6 L-754.7 365.3 L-860.1 411.4 L-1001.0 472.9 L-1198.7 559.4 L-1496.6 689.6 L-1996.5 908.0 L-3009.4 1350.7 L-6156.6 2726.1" stroke="#8c8682" stroke-width="1" stroke-opacity="0.5" fill="none"/><path d="M1333.2 93.4 L1338.2 94.3 L1343.4 95.3 L1348.8 96.3 L1354.4 97.3 L1360.3 98.4 L1366.4 99.6 L1372.7 100.8 L1379.4 102.0 L1386.3 103.3 L1393.6 104.7 L1401.2 106.1 L1409.2 107.6 L1417.6 109.2 L1426.5 110.8 L1435.8 112.5 L1445.6 114.4 L1455.9 116.3 L1466.9 118.4 L1478.5 120.5 L1490.8 122.8 L1503.9 125.3 L1517.8 127.9 L1532.7 130.7 L1548.6 133.6 L1565.6 136.8 L1583.9 140.2 L1603.6 143.9 L1625.0 147.9 L1648.1 152.2 L1673.2 156.9 L1700.6 162.1 L1730.7 167.7 L1763.8 173.9 L1800.5 180.7 L1841.2 188.4 L1886.8 196.9 L1938.2 206.5 L1996.5 217.4 L2063.2 229.9 L2140.4 244.3 L2230.6 261.2 L2337.5 281.1 L2466.2 305.2 L2624.1 334.7 L2822.5 371.8 L3079.0 419.8 L3423.9 484.3 L3912.2 575.6 L4656.7 714.8 L5930.8 953.0 L8611.6 1454.2 L17900.1 3191.0" stroke="#8c8682" stroke-width="1" stroke-opacity="0.5" fill="none"/><path d="M-278.0 93.3 L-282.9 94.3 L-288.0 95.2 L-293.3 96.2 L-298.9 97.3 L-304.6 98.3 L-310.7 99.5 L-316.9 100.7 L-323.5 101.9 L-330.4 103.2 L-337.5 104.5 L-345.0 106.0 L-352.9 107.4 L-361.2 109.0 L-369.9 110.6 L-379.1 112.4 L-388.8 114.2 L-399.0 116.1 L-409.7 118.1 L-421.2 120.3 L-433.3 122.6 L-446.2 125.0 L-459.9 127.6 L-474.5 130.3 L-490.1 133.2 L-506.9 136.4 L-524.9 139.8 L-544.3 143.4 L-565.2 147.4 L-587.9 151.6 L-612.6 156.3 L-639.5 161.4 L-669.0 166.9 L-701.5 173.0 L-737.4 179.8 L-777.3 187.3 L-821.9 195.7 L-872.1 205.1 L-929.1 215.8 L-994.2 228.1 L-1069.5 242.2 L-1157.3 258.8 L-1261.2 278.3 L-1386.1 301.8 L-1539.0 330.6 L-1730.4 366.6 L-1977.2 413.0 L-2307.3 475.1 L-2771.6 562.5 L-3472.7 694.4 L-4653.7 916.6 L-7063.8 1370.1 L-14703.8 2807.5" stroke="#8c8682" stroke-width="1" stroke-opacity="0.5" fill="none"/><path d="M1543.4 100.8 L1553.9 102.1 L1564.9 103.4 L1576.3 104.8 L1588.4 106.2 L1601.0 107.7 L1614.2 109.3 L1628.2 110.9 L1642.8 112.7 L1658.3 114.5 L1674.6 116.5 L1691.9 118.5 L1710.2 120.7 L1729.6 123.0 L1750.3 125.5 L1772.3 128.1 L1795.8 130.9 L1820.9 133.9 L1847.8 137.1 L1876.7 140.5 L1907.9 144.2 L1941.6 148.2 L1978.1 152.6 L2017.9 157.3 L2061.3 162.5 L2108.9 168.2 L2161.4 174.4 L2219.4 181.3 L2284.0 189.0 L2356.3 197.6 L2437.9 207.3 L2530.5 218.3 L2636.6 231.0 L2759.3 245.6 L2903.1 262.7 L3073.6 283.0 L3279.2 307.5 L3532.0 337.6 L3850.3 375.5 L4263.2 424.6 L4820.5 491.0 L5614.0 585.4 L6833.8 730.7 L8950.3 982.6 L13526.1 1527.4 L30793.0 3583.1" stroke="#8c8682" stroke-width="1" stroke-opacity="0.5" fill="none"/><path d="M-485.1 100.7 L-495.4 102.0 L-506.2 103.3 L-517.5 104.6 L-529.3 106.0 L-541.7 107.5 L-554.7 109.1 L-568.4 110.7 L-582.8 112.4 L-598.0 114.3 L-614.0 116.2 L-631.0 118.2 L-648.9 120.4 L-668.0 122.7 L-688.2 125.1 L-709.8 127.7 L-732.8 130.4 L-757.4 133.4 L-783.7 136.5 L-812.0 139.9 L-842.5 143.6 L-875.5 147.5 L-911.2 151.8 L-950.0 156.5 L-992.4 161.6 L-1038.8 167.1 L-1089.9 173.3 L-1146.4 180.0 L-1209.3 187.6 L-1279.5 196.0 L-1358.6 205.5 L-1448.4 216.2 L-1551.0 228.5 L-1669.6 242.8 L-1808.1 259.4 L-1972.0 279.0 L-2169.0 302.7 L-2410.4 331.6 L-2712.9 367.9 L-3103.2 414.7 L-3625.9 477.4 L-4362.2 565.7 L-5476.7 699.3 L-7361.3 925.3 L-11235.8 1390.0 L-23776.4 2893.9" stroke="#8c8682" stroke-width="1" stroke-opacity="0.5" fill="none"/><path d="M1830.8 111.0 L1850.9 112.8 L1872.1 114.7 L1894.5 116.6 L1918.1 118.7 L1943.2 120.9 L1969.8 123.2 L1998.1 125.7 L2028.3 128.3 L2060.4 131.1 L2094.9 134.1 L2131.8 137.3 L2171.5 140.8 L2214.3 144.5 L2260.5 148.6 L2310.7 152.9 L2365.3 157.7 L2425.0 162.9 L2490.5 168.6 L2562.6 174.9 L2642.4 181.9 L2731.4 189.7 L2831.0 198.4 L2943.3 208.2 L3071.1 219.3 L3217.5 232.1 L3387.2 246.9 L3586.0 264.3 L3822.2 284.9 L4107.5 309.8 L4458.9 340.5 L4902.4 379.2 L5479.6 429.6 L6261.9 497.9 L7382.1 595.7 L9119.2 747.4 L12177.0 1014.3 L18984.9 1608.7 L47376.9 4087.5" stroke="#8c8682" stroke-width="1" stroke-opacity="0.5" fill="none"/><path d="M-767.1 110.8 L-786.8 112.5 L-807.5 114.3 L-829.4 116.3 L-852.6 118.3 L-877.1 120.5 L-903.1 122.8 L-930.7 125.2 L-960.2 127.8 L-991.6 130.6 L-1025.1 133.5 L-1061.1 136.7 L-1099.8 140.1 L-1141.4 143.7 L-1186.5 147.7 L-1235.2 152.0 L-1288.3 156.7 L-1346.2 161.8 L-1409.6 167.4 L-1479.5 173.5 L-1556.7 180.3 L-1642.6 187.9 L-1738.6 196.3 L-1846.8 205.8 L-1969.5 216.6 L-2110.0 229.0 L-2272.2 243.3 L-2461.8 260.0 L-2686.3 279.7 L-2956.3 303.5 L-3287.2 332.6 L-3702.3 369.2 L-4238.2 416.4 L-4956.8 479.6 L-5970.8 568.9 L-7509.1 704.3 L-10120.8 934.2 L-15530.7 1410.5 L-33424.6 2985.7" stroke="#8c8682" stroke-width="1" stroke-opacity="0.5" fill="none"/><path d="M2247.4 125.8 L2285.8 128.5 L2326.8 131.3 L2370.6 134.3 L2417.7 137.6 L2468.3 141.1 L2522.8 144.8 L2581.9 148.9 L2645.9 153.3 L2715.6 158.1 L2791.8 163.4 L2875.4 169.1 L2967.5 175.5 L3069.6 182.5 L3183.3 190.3 L3310.8 199.1 L3454.7 209.0 L3618.4 220.3 L3806.2 233.3 L4024.0 248.3 L4279.6 265.9 L4583.7 286.8 L4951.4 312.2 L5405.4 343.5 L5979.7 383.0 L6729.6 434.7 L7750.3 505.0 L9220.5 606.4 L11521.2 764.9 L15633.2 1048.3 L25083.6 1699.5 L69502.0 4760.4" stroke="#8c8682" stroke-width="1" stroke-opacity="0.5" fill="none"/><path d="M-1173.6 125.3 L-1211.0 127.9 L-1250.8 130.7 L-1293.4 133.6 L-1339.1 136.8 L-1388.1 140.2 L-1441.0 143.9 L-1498.1 147.9 L-1560.0 152.2 L-1627.3 156.9 L-1700.8 162.0 L-1781.4 167.6 L-1870.0 173.7 L-1968.1 180.6 L-2077.2 188.2 L-2199.2 196.6 L-2336.7 206.2 L-2492.6 217.0 L-2671.2 229.5 L-2877.5 243.8 L-3118.6 260.6 L-3404.3 280.5 L-3748.0 304.4 L-4169.5 333.7 L-4698.6 370.5 L-5382.3 418.0 L-6300.3 481.9 L-7597.6 572.1 L-9570.7 709.4 L-12933.8 943.3 L-19954.0 1431.6 L-43704.7 3083.6" stroke="#8c8682" stroke-width="1" stroke-opacity="0.5" fill="none"/><path d="M2905.5 149.2 L2983.6 153.7 L3068.6 158.5 L3161.6 163.8 L3263.6 169.6 L3376.2 176.0 L3500.9 183.1 L3639.9 191.0 L3795.9 199.9 L3972.0 209.9 L4172.5 221.3 L4402.8 234.4 L4670.1 249.6 L4984.2 267.5 L5358.3 288.8 L5811.5 314.6 L6372.1 346.5 L7083.1 387.0 L8014.6 440.0 L9288.0 512.4 L11133.5 617.5 L14049.0 783.4 L19344.1 1084.7 L31941.8 1801.6 L100502.1 5703.2" stroke="#8c8682" stroke-width="1" stroke-opacity="0.5" fill="none"/><path d="M-1810.4 148.0 L-1885.5 152.4 L-1967.2 157.1 L-2056.4 162.2 L-2154.1 167.8 L-2261.7 174.0 L-2380.8 180.8 L-2513.2 188.4 L-2661.3 197.0 L-2828.3 206.6 L-3017.7 217.5 L-3234.6 229.9 L-3485.3 244.3 L-3778.5 261.2 L-4125.9 281.2 L-4544.2 305.2 L-5057.3 334.7 L-5701.9 371.8 L-6535.7 419.7 L-7656.4 484.2 L-9243.0 575.4 L-11662.0 714.5 L-15801.8 952.5 L-24511.5 1453.3 L-54681.2 3188.1" stroke="#8c8682" stroke-width="1" stroke-opacity="0.5" fill="none"/><path d="M4101.3 191.7 L4286.3 200.7 L4495.4 210.8 L4733.6 222.3 L5007.5 235.6 L5325.7 251.0 L5699.9 269.2 L6146.4 290.8 L6688.2 317.1 L7359.7 349.6 L8213.6 391.0 L9336.1 445.4 L10877.5 520.1 L13125.8 629.0 L16712.6 802.8 L23339.0 1123.9 L39710.8 1917.3 L147057.4 7119.1" stroke="#8c8682" stroke-width="1" stroke-opacity="0.5" fill="none"/><path d="M-2950.5 188.7 L-3125.0 197.3 L-3321.5 206.9 L-3544.7 217.9 L-3800.2 230.4 L-4095.8 244.9 L-4441.4 261.8 L-4851.2 281.9 L-5344.8 306.1 L-5950.7 335.8 L-6712.3 373.1 L-7698.4 421.4 L-9025.5 486.5 L-10907.3 578.7 L-13783.7 719.7 L-18726.4 962.0 L-29209.4 1475.8 L-66427.1 3299.9" stroke="#8c8682" stroke-width="1" stroke-opacity="0.5" fill="none"/><path d="M6948.3 292.8 L7582.0 319.6 L8368.9 352.8 L9372.2 395.1 L10695.7 450.9 L12521.4 528.0 L15202.4 641.1 L19523.3 823.3 L27651.8 1166.3 L48584.9 2049.4" stroke="#8c8682" stroke-width="1" stroke-opacity="0.5" fill="none"/><path d="M-5580.2 282.6 L-6149.9 307.0 L-6849.6 336.8 L-7729.8 374.4 L-8870.5 423.2 L-10407.6 488.8 L-12590.8 582.1 L-15936.5 725.0 L-21709.3 971.6 L-34054.3 1498.9 L-79026.3 3419.8" stroke="#8c8682" stroke-width="1" stroke-opacity="0.5" fill="none"/></g><path d="M525.0 190.2 L893.8 287.9 L525.0 783.0 L157.3 287.3 Z" fill="url(#pl)"/><g><path d="M548.0 196.3 L536.7 199.5 L525.0 202.9 L512.8 206.4 L500.0 210.1 L486.6 213.9 L472.5 217.9 L457.8 222.2 L442.3 226.6 L426.1 231.3 L408.9 236.2 L390.9 241.4 L371.8 246.8 L351.7 252.6 L330.4 258.8 L307.7 265.3 L283.7 272.2 L258.1 279.5 L230.8 287.4 L201.5 295.7 L170.2 304.7" stroke="#8e9490" stroke-width="1" stroke-opacity="0.7" fill="none"/><path d="M502.0 196.3 L513.3 199.5 L525.0 202.9 L537.2 206.4 L550.1 210.1 L563.5 214.0 L577.5 218.0 L592.3 222.2 L607.7 226.7 L624.0 231.4 L641.2 236.3 L659.3 241.5 L678.4 247.0 L698.5 252.9 L719.9 259.0 L742.7 265.6 L766.8 272.5 L792.5 279.9 L820.0 287.8 L849.3 296.3 L880.8 305.4" stroke="#8e9490" stroke-width="1" stroke-opacity="0.7" fill="none"/><path d="M572.9 202.9 L561.7 206.4 L550.1 210.1 L537.8 213.9 L525.0 218.0 L511.6 222.2 L497.4 226.6 L482.6 231.3 L467.0 236.2 L450.5 241.4 L433.1 246.9 L414.7 252.7 L395.2 258.8 L374.5 265.3 L352.6 272.2 L329.2 279.6 L304.2 287.4 L277.6 295.8 L249.0 304.8 L218.3 314.5 L185.2 324.9" stroke="#8e9490" stroke-width="1" stroke-opacity="0.7" fill="none"/><path d="M477.1 202.9 L488.3 206.4 L500.0 210.1 L512.2 213.9 L525.0 218.0 L538.4 222.2 L552.6 226.7 L567.4 231.4 L583.1 236.3 L599.6 241.5 L617.0 247.0 L635.4 252.8 L654.9 259.0 L675.6 265.5 L697.7 272.5 L721.1 279.9 L746.1 287.8 L772.9 296.2 L801.6 305.3 L832.5 315.0 L865.8 325.5" stroke="#8e9490" stroke-width="1" stroke-opacity="0.7" fill="none"/><path d="M600.2 210.1 L589.1 214.0 L577.5 218.0 L565.3 222.2 L552.6 226.7 L539.1 231.3 L525.0 236.3 L510.1 241.5 L494.4 246.9 L477.7 252.7 L460.1 258.9 L441.4 265.4 L421.5 272.3 L400.4 279.6 L377.8 287.5 L353.7 295.9 L327.8 304.9 L300.0 314.5 L270.0 325.0 L237.7 336.2 L202.6 348.4" stroke="#8e9490" stroke-width="1" stroke-opacity="0.7" fill="none"/><path d="M449.9 210.0 L460.9 213.9 L472.5 217.9 L484.7 222.2 L497.4 226.6 L510.9 231.3 L525.0 236.3 L539.9 241.5 L555.7 247.0 L572.3 252.8 L589.9 258.9 L608.7 265.5 L628.6 272.4 L649.8 279.8 L672.4 287.7 L696.6 296.2 L722.5 305.2 L750.4 315.0 L780.5 325.5 L813.0 336.8 L848.2 349.1" stroke="#8e9490" stroke-width="1" stroke-opacity="0.7" fill="none"/><path d="M630.0 218.0 L619.2 222.3 L607.7 226.7 L595.7 231.4 L583.1 236.3 L569.7 241.5 L555.7 247.0 L540.8 252.8 L525.0 258.9 L508.3 265.4 L490.5 272.3 L471.6 279.7 L451.4 287.5 L429.8 295.9 L406.6 304.9 L381.8 314.6 L355.0 325.0 L326.0 336.3 L294.7 348.5 L260.5 361.8 L223.3 376.3" stroke="#8e9490" stroke-width="1" stroke-opacity="0.7" fill="none"/><path d="M420.0 217.9 L430.9 222.2 L442.3 226.6 L454.3 231.3 L467.0 236.2 L480.3 241.4 L494.4 246.9 L509.2 252.7 L525.0 258.9 L541.7 265.4 L559.5 272.4 L578.5 279.8 L598.7 287.7 L620.3 296.1 L643.5 305.2 L668.4 314.9 L695.3 325.4 L724.3 336.7 L755.8 349.0 L790.0 362.4 L827.4 377.0" stroke="#8e9490" stroke-width="1" stroke-opacity="0.7" fill="none"/><path d="M662.9 226.7 L652.3 231.4 L641.2 236.3 L629.4 241.5 L617.0 247.0 L603.9 252.8 L589.9 258.9 L575.2 265.5 L559.5 272.4 L542.8 279.7 L525.0 287.6 L505.9 296.0 L485.5 305.0 L463.6 314.7 L440.0 325.1 L414.4 336.4 L386.7 348.6 L356.6 361.9 L323.8 376.4 L287.8 392.3 L248.1 409.8" stroke="#8c8a80" stroke-width="1" stroke-opacity="0.9" fill="none"/><path d="M387.2 226.6 L397.8 231.3 L408.9 236.2 L420.7 241.4 L433.1 246.9 L446.2 252.7 L460.1 258.9 L474.8 265.4 L490.5 272.3 L507.2 279.7 L525.0 287.6 L544.1 296.0 L564.5 305.1 L586.4 314.8 L610.1 325.3 L635.7 336.6 L663.4 348.9 L693.6 362.3 L726.5 376.9 L762.7 392.9 L802.5 410.5" stroke="#8c8a80" stroke-width="1" stroke-opacity="0.9" fill="none"/><path d="M699.3 236.4 L689.1 241.6 L678.4 247.0 L667.0 252.8 L654.9 259.0 L642.2 265.5 L628.6 272.4 L614.1 279.8 L598.7 287.7 L582.2 296.1 L564.5 305.1 L545.5 314.8 L525.0 325.2 L502.9 336.5 L478.9 348.7 L452.8 362.0 L424.4 376.5 L393.2 392.4 L358.8 409.9 L320.8 429.3 L278.6 450.8" stroke="#8e9490" stroke-width="1" stroke-opacity="0.7" fill="none"/><path d="M350.9 236.2 L361.1 241.4 L371.8 246.8 L383.2 252.7 L395.2 258.8 L408.0 265.3 L421.5 272.3 L436.0 279.7 L451.4 287.5 L467.9 296.0 L485.5 305.0 L504.5 314.7 L525.0 325.2 L547.1 336.5 L571.1 348.8 L597.2 362.2 L625.7 376.7 L657.0 392.7 L691.4 410.3 L729.5 429.8 L771.9 451.5" stroke="#8e9490" stroke-width="1" stroke-opacity="0.7" fill="none"/><path d="M739.7 247.1 L730.1 252.9 L719.9 259.0 L709.1 265.5 L697.7 272.5 L685.4 279.8 L672.4 287.7 L658.4 296.1 L643.5 305.2 L627.4 314.8 L610.1 325.3 L591.4 336.6 L571.1 348.8 L549.1 362.1 L525.0 376.6 L498.6 392.5 L469.6 410.1 L437.5 429.4 L401.7 451.0 L361.8 475.1 L316.7 502.2" stroke="#8e9490" stroke-width="1" stroke-opacity="0.7" fill="none"/><path d="M310.6 246.8 L320.2 252.6 L330.4 258.8 L341.1 265.3 L352.6 272.2 L364.8 279.6 L377.8 287.5 L391.7 295.9 L406.6 304.9 L422.7 314.7 L440.0 325.1 L458.6 336.4 L478.9 348.7 L500.9 362.1 L525.0 376.6 L551.4 392.6 L580.4 410.2 L612.6 429.7 L648.4 451.3 L688.5 475.6 L733.6 503.0" stroke="#8e9490" stroke-width="1" stroke-opacity="0.7" fill="none"/><path d="M785.0 259.1 L776.2 265.6 L766.8 272.5 L756.8 279.9 L746.1 287.8 L734.8 296.2 L722.5 305.2 L709.4 314.9 L695.3 325.4 L680.0 336.7 L663.4 348.9 L645.4 362.2 L625.7 376.7 L604.2 392.7 L580.4 410.2 L554.2 429.6 L525.0 451.2 L492.3 475.3 L455.5 502.5 L413.8 533.3 L366.0 568.6" stroke="#8e9490" stroke-width="1" stroke-opacity="0.7" fill="none"/><path d="M265.5 258.7 L274.3 265.2 L283.7 272.2 L293.6 279.5 L304.2 287.4 L315.6 295.8 L327.8 304.9 L340.9 314.6 L355.0 325.0 L370.2 336.3 L386.7 348.6 L404.7 361.9 L424.4 376.5 L445.9 392.5 L469.6 410.1 L495.8 429.5 L525.0 451.2 L557.7 475.4 L594.5 502.7 L636.3 533.7 L684.2 569.3" stroke="#8e9490" stroke-width="1" stroke-opacity="0.7" fill="none"/><path d="M836.0 272.6 L828.2 280.0 L820.0 287.8 L811.1 296.3 L801.6 305.3 L791.5 315.0 L780.5 325.5 L768.6 336.8 L755.8 349.0 L741.8 362.3 L726.5 376.9 L709.8 392.8 L691.4 410.3 L671.0 429.8 L648.4 451.3 L623.0 475.5 L594.5 502.7 L562.1 533.6 L525.0 569.0 L482.1 609.8 L432.0 657.6" stroke="#8e9490" stroke-width="1" stroke-opacity="0.7" fill="none"/><path d="M214.8 272.1 L222.5 279.5 L230.8 287.4 L239.6 295.8 L249.0 304.8 L259.1 314.5 L270.0 325.0 L281.9 336.3 L294.7 348.5 L308.6 361.8 L323.8 376.4 L340.5 392.3 L358.8 409.9 L379.1 429.4 L401.7 451.0 L427.0 475.2 L455.5 502.5 L487.9 533.5 L525.0 569.0 L567.9 610.0 L618.1 658.0" stroke="#8e9490" stroke-width="1" stroke-opacity="0.7" fill="none"/></g></svg>
<svg style="left:499px;top:266px;" width="54" height="54" viewBox="0 0 54 54"><path d="M41.50 27.00 L53.50 27.00 M42.24 33.31 L45.94 34.85 M37.25 37.25 L42.56 42.56 M33.31 42.24 L34.85 45.94 M27.00 41.50 L27.00 53.50 M20.69 42.24 L19.15 45.94 M16.75 37.25 L11.44 42.56 M11.76 33.31 L8.06 34.85 M12.50 27.00 L0.50 27.00 M11.76 20.69 L8.06 19.15 M16.75 16.75 L11.44 11.44 M20.69 11.76 L19.15 8.06 M27.00 12.50 L27.00 0.50 M33.31 11.76 L34.85 8.06 M37.25 16.75 L42.56 11.44 M42.24 20.69 L45.94 19.15 " stroke="#4a4542" stroke-opacity="0.6" stroke-width="4.6" stroke-linecap="round"/><circle cx="27" cy="27" r="11.3" fill="#4a4542" fill-opacity="0.6"/><path d="M41.50 27.00 L53.50 27.00 M42.24 33.31 L45.94 34.85 M37.25 37.25 L42.56 42.56 M33.31 42.24 L34.85 45.94 M27.00 41.50 L27.00 53.50 M20.69 42.24 L19.15 45.94 M16.75 37.25 L11.44 42.56 M11.76 33.31 L8.06 34.85 M12.50 27.00 L0.50 27.00 M11.76 20.69 L8.06 19.15 M16.75 16.75 L11.44 11.44 M20.69 11.76 L19.15 8.06 M27.00 12.50 L27.00 0.50 M33.31 11.76 L34.85 8.06 M37.25 16.75 L42.56 11.44 M42.24 20.69 L45.94 19.15 " stroke="#fdf6d8" stroke-width="2.8" stroke-linecap="round"/><circle cx="27" cy="27" r="10.3" fill="#fdf6d8"/></svg>
<svg style="left:283px;top:315px;" width="30" height="22" viewBox="0 0 30 22"><g fill="#4a4542" fill-opacity="0.5" transform="translate(0.6,0.8)"><circle cx="7" cy="12" r="5.6"/><circle cx="15" cy="7" r="5.2"/><rect x="4" y="11" width="19.5" height="10" rx="1.5"/><path d="M23 12 L28.5 10.5 V19 L23 17.5 Z"/></g><g fill="#ffffff"><circle cx="7" cy="12" r="5"/><circle cx="15" cy="7" r="4.7"/><rect x="4.5" y="11" width="18.5" height="9.5" rx="1.2"/><path d="M23 12.5 L28 11 V18.5 L23 17 Z"/></g></svg>
<svg style="left:916px;top:180px;" width="120" height="108" viewBox="0 0 120 108"><defs><linearGradient id="gg" x1="0" x2="1"><stop offset="0" stop-color="#4a9a1c"/><stop offset="0.35" stop-color="#8ad850"/><stop offset="1" stop-color="#3a8a10"/></linearGradient><linearGradient id="gr" x1="0" y1="0" x2="1" y2="1"><stop offset="0" stop-color="#d04020"/><stop offset="1" stop-color="#7a1408"/></linearGradient><linearGradient id="gb" x1="1" y1="0" x2="0" y2="1"><stop offset="0" stop-color="#3a6cf0"/><stop offset="1" stop-color="#1a3090"/></linearGradient><linearGradient id="gw" x1="0" x2="1"><stop offset="0" stop-color="#c8c8c8"/><stop offset="0.5" stop-color="#ffffff"/><stop offset="1" stop-color="#cfcfcf"/></linearGradient></defs><path d="M31 56 A8 7 0 0 1 44 49 L50 60 L38 64 A8 7 0 0 1 31 56 Z" fill="#eeeeee"/><path d="M89 56 A8 7 0 0 0 76 49 L70 60 L82 64 A8 7 0 0 0 89 56 Z" fill="#e6e6e6"/><path d="M60 53 L74 60 V73 L60 80 L46 73 V60 Z" fill="#c4c4c4"/><path d="M46 60 L60 66 L74 60 L60 53 Z" fill="#b0b4b8"/><path d="M49 21.5 L72 21.5 L60 53.5 Z" fill="url(#gg)"/><path d="M16.3 71.3 L49.3 70.7 L26.5 93.4 Z" fill="url(#gr)"/><path d="M102.8 71.3 L71.4 70.7 L94.2 93.4 Z" fill="url(#gb)"/><path d="M60.4 80.5 L53 99 A7.7 3.5 0 0 0 68.4 99 Z" fill="url(#gw)"/><text x="53" y="13" font-family="Liberation Sans" font-size="16" font-weight="bold" fill="#f4f4f4">y</text><text x="2" y="92.8" font-family="Liberation Sans" font-size="16" font-weight="bold" fill="#f4f4f4">x</text><text x="105" y="92.8" font-family="Liberation Sans" font-size="16" font-weight="bold" fill="#f4f4f4">z</text></svg>
<svg style="left:1019px;top:190px;" width="14" height="14" viewBox="0 0 14 14"><rect x="2" y="6" width="10" height="7" fill="#c8c8c8" opacity="0.6"/><path d="M4 6 V4 A3 3 0 0 1 10 4 V6" stroke="#c8c8c8" stroke-width="1.5" fill="none" opacity="0.6"/></svg>
<svg style="left:938px;top:311px;" width="18" height="16" viewBox="0 0 18 16"><path d="M16 2 L2 8 L16 14 M16 8 H2" stroke="#c8c8c8" stroke-width="1.3" fill="none"/></svg>
<div class="t" style="left:958px;top:311.76px;font-size:18px;line-height:18px;color:#cfcfcf;letter-spacing:0.396px;">Persp</div>
<div style="left:0px;top:746px;width:1051px;height:29px;background-color:#292929;background-image:radial-gradient(circle at 1px 1px,#212121 0.6px,transparent 0.9px);background-size:3px 3px;"></div>
<div style="left:0px;top:746px;width:110px;height:29px;background:#3c3c3c;border-radius:0 5px 0 0;"></div>
<svg style="left:8px;top:754px;" width="22" height="14" viewBox="0 0 22 14"><path d="M5 1 H17 A5 5 0 0 1 17 13 C15 13 14 10 11 10 C8 10 7 13 5 13 A5 5 0 0 1 5 1 Z" fill="#d2d2d2"/><path d="M4 7 H8 M6 5 V9" stroke="#3c3c3c" stroke-width="1.5"/><circle cx="16" cy="5.5" r="1.2" fill="#3c3c3c"/><circle cx="14" cy="8.5" r="1.2" fill="#3c3c3c"/></svg>
<div class="t" style="left:34px;top:753.76px;font-size:18px;line-height:18px;color:#d2d2d2;letter-spacing:0.247px;">Game</div>
<svg style="left:126px;top:752px;" width="15" height="17" viewBox="0 0 15 17"><rect x="0.5" y="0.5" width="14" height="16" fill="#c4c4c4"/><path d="M2 4 H12 M2 7 H9 M2 10 H12 M2 13 H12" stroke="#282828" stroke-width="1.5"/></svg>
<div class="t" style="left:148px;top:753.76px;font-size:18px;line-height:18px;color:#c4c4c4;letter-spacing:0.709px;">Console</div>
<svg style="left:1029px;top:751px;" width="6" height="18" viewBox="0 0 6 18"><rect x="1" y="1" width="4" height="3.6" rx="1.2" fill="#c4c4c4"/><rect x="1" y="7.2" width="4" height="3.6" rx="1.2" fill="#c4c4c4"/><rect x="1" y="13.4" width="4" height="3.6" rx="1.2" fill="#c4c4c4"/></svg>
<div style="left:0px;top:775px;width:1051px;height:31px;background:#3c3c3c;"></div>
<div class="t" style="left:6.5px;top:781.06px;font-size:18px;line-height:18px;color:#c4c4c4;letter-spacing:0.497px;">Display 1</div>
<svg style="left:101px;top:787px;" width="12" height="8" viewBox="0 0 12 8"><path d="M0 1 L12 1 L6 7 Z" fill="#c4c4c4"/></svg>
<div style="left:119px;top:775px;width:1px;height:31px;background:#232323;"></div>
<div class="t" style="left:126px;top:781.06px;font-size:18px;line-height:18px;color:#c4c4c4;letter-spacing:0.678px;">Free Aspect</div>
<svg style="left:342px;top:787px;" width="12" height="8" viewBox="0 0 12 8"><path d="M0 1 L12 1 L6 7 Z" fill="#c4c4c4"/></svg>
<div style="left:361px;top:775px;width:1px;height:31px;background:#232323;"></div>
<div class="t" style="left:371px;top:781.06px;font-size:18px;line-height:18px;color:#c4c4c4;letter-spacing:0.515px;">Scale</div>
<div style="left:437px;top:790px;width:93px;height:3px;background:#555555;"></div>
<svg style="left:429px;top:783px;" width="16" height="16" viewBox="0 0 16 16"><circle cx="8" cy="8" r="7" fill="#a4a4a4"/></svg>
<div class="t" style="left:540px;top:781.06px;font-size:18px;line-height:18px;color:#c4c4c4;letter-spacing:-0.205px;">1x</div>
<div style="left:602px;top:775px;width:1px;height:31px;background:#232323;"></div>
<div class="t" style="left:609.6px;top:781.06px;font-size:18px;line-height:18px;color:#c4c4c4;letter-spacing:0.560px;">Maximize On Play</div>
<div style="left:772px;top:775px;width:1px;height:31px;background:#232323;"></div>
<div class="t" style="left:781px;top:781.06px;font-size:18px;line-height:18px;color:#c4c4c4;letter-spacing:0.894px;">Mute Audio</div>
<div style="left:888px;top:775px;width:1px;height:31px;background:#232323;"></div>
<div class="t" style="left:896px;top:781.06px;font-size:18px;line-height:18px;color:#c4c4c4;letter-spacing:0.537px;">Stats</div>
<div style="left:948px;top:775px;width:1px;height:31px;background:#232323;"></div>
<div class="t" style="left:954px;top:781.06px;font-size:18px;line-height:18px;color:#c4c4c4;letter-spacing:0.283px;">Gizmos</div>
<div style="left:1024px;top:781px;width:1px;height:18px;background:#6a6a6a;"></div>
<svg style="left:1031px;top:787px;" width="12" height="8" viewBox="0 0 12 8"><path d="M0 1 L12 1 L6 7 Z" fill="#c4c4c4"/></svg>
<svg style="left:0px;top:806px;" width="1051" height="541" viewBox="0 0 1051 541"><defs><linearGradient id="gsky" x1="0" y1="0" x2="0" y2="1"><stop offset="0" stop-color="#5a7299"/><stop offset="0.192" stop-color="#6c88b4"/><stop offset="0.30" stop-color="#8ca8d4"/><stop offset="0.375" stop-color="#aeccf0"/><stop offset="0.43" stop-color="#cdeafc"/><stop offset="0.48" stop-color="#e2f8ff"/><stop offset="0.505" stop-color="#effeff"/><stop offset="0.53" stop-color="#d4e0e0"/><stop offset="1" stop-color="#c8d2d2"/></linearGradient><filter id="gblur" x="-0.1" y="-0.2" width="1.2" height="1.4"><feGaussianBlur stdDeviation="5"/></filter><filter id="gblur2" x="-0.1" y="-0.2" width="1.2" height="1.4"><feGaussianBlur stdDeviation="9"/></filter><linearGradient id="gpl" x1="0" y1="0" x2="0" y2="1"><stop offset="0" stop-color="#d8e4f0"/><stop offset="1" stop-color="#b6c2ce"/></linearGradient></defs><rect x="0" y="0" width="1051" height="541" fill="url(#gsky)"/><defs><radialGradient id="gsh" cx="0.5" cy="0.05" r="0.6" gradientTransform="translate(0.5 0.05) scale(1 0.6) translate(-0.5 -0.05)"><stop offset="0" stop-color="#1a2840" stop-opacity="0.10"/><stop offset="1" stop-color="#1a2840" stop-opacity="0"/></radialGradient></defs><rect x="0" y="0" width="1051" height="400" fill="url(#gsh)"/><path d="M-30 298 Q525 272 1081 298 V560 H-30 Z" fill="#a4aaaa" filter="url(#gblur2)"/><path d="M-30 310 Q525 284 1081 310 V560 H-30 Z" fill="#6b625d" filter="url(#gblur)"/><rect x="0" y="330" width="1051" height="211" fill="#6b625d"/><path d="M370 302 L680 302 L991 365 L60 365 Z" fill="url(#gpl)"/></svg>
<div style="left:1054px;top:109px;width:426px;height:29px;background-color:#292929;background-image:radial-gradient(circle at 1px 1px,#212121 0.6px,transparent 0.9px);background-size:3px 3px;"></div>
<div style="left:1054px;top:109px;width:146px;height:29px;background:#3c3c3c;border-radius:5px 5px 0 0;"></div>
<svg style="left:1066px;top:117px;" width="20" height="16" viewBox="0 0 20 16"><g fill="#d2d2d2"><rect x="1" y="1" width="2.5" height="2.5"/><rect x="4" y="6" width="2.5" height="2.5"/><rect x="4" y="11" width="2.5" height="2.5"/></g><g stroke="#d2d2d2" stroke-width="1.3"><path d="M6 2.2 H18 M9 7.2 H18 M9 12.2 H18"/></g></svg>
<div class="t" style="left:1090px;top:115.76px;font-size:18px;line-height:18px;color:#d2d2d2;letter-spacing:0.776px;">Hierarchy</div>
<svg style="left:1428px;top:115px;" width="14" height="16" viewBox="0 0 14 16"><path d="M11.5 8.5 V5 C11.5 2.5 10 1.2 8 1.2 C6.2 1.2 4.8 2.2 3.6 3.6" stroke="#c8c8c8" stroke-width="2" fill="none"/><rect x="1.5" y="8.5" width="11" height="6" fill="none" stroke="#c8c8c8" stroke-width="2"/></svg>
<svg style="left:1458px;top:114px;" width="6" height="18" viewBox="0 0 6 18"><rect x="1" y="1" width="4" height="3.6" rx="1.2" fill="#c4c4c4"/><rect x="1" y="7.2" width="4" height="3.6" rx="1.2" fill="#c4c4c4"/><rect x="1" y="13.4" width="4" height="3.6" rx="1.2" fill="#c4c4c4"/></svg>
<div style="left:1054px;top:138px;width:426px;height:30px;background:#3c3c3c;"></div>
<svg style="left:1064px;top:144px;" width="36" height="18" viewBox="0 0 36 18"><path d="M10 1 V17 M1 9 H19" stroke="#c4c4c4" stroke-width="1.8"/><path d="M25 6 L35 6 L30 12 Z" fill="#c4c4c4"/></svg>
<div style="left:1119px;top:141px;width:357px;height:24px;background:#2a2a2a;border-radius:6px;box-shadow:inset 0 1px 0 #1a1a1a;"></div>
<svg style="left:1126px;top:146px;" width="20" height="14" viewBox="0 0 20 14"><circle cx="6" cy="6" r="3.6" fill="none" stroke="#a0a0a0" stroke-width="1.6"/><path d="M8.5 8.5 L12 12" stroke="#a0a0a0" stroke-width="2"/><path d="M13 6 L17 6 L15 8.5 Z" fill="#a0a0a0"/></svg>
<div class="t" style="left:1147px;top:144.76px;font-size:18px;line-height:18px;color:#8a8a8a;letter-spacing:0.665px;">All</div>
<div style="left:1054px;top:168px;width:426px;height:1179px;background:#383838;"></div>
<div style="left:1054px;top:169px;width:426px;height:23px;background:#4d4d4d;"></div>
<div style="left:1054px;top:192px;width:48px;height:1155px;background-color:#292929;background-image:radial-gradient(circle at 1px 1px,#212121 0.6px,transparent 0.9px);background-size:3px 3px;"></div>
<svg style="left:1104px;top:177px;" width="14" height="12" viewBox="0 0 14 12"><path d="M1 1 L13 1 L7 11 Z" fill="#8a8a8a"/></svg>
<svg style="left:1124px;top:169px;" width="24" height="22" viewBox="0 0 24 22"><path d="M4 11 L16 3.5 L18 18.5 Z" fill="none" stroke="#d8d8d8" stroke-width="2" stroke-linejoin="round"/><path d="M4 11 L11 11 M16 3.5 L12.5 9.5 M18 18.5 L12.5 12.5" stroke="#d8d8d8" stroke-width="2"/><circle cx="11.5" cy="11" r="1.2" fill="#4d4d4d"/></svg>
<div class="t" style="left:1152.5px;top:171.76px;font-size:18px;line-height:18px;color:#dddddd;letter-spacing:0.661px;font-weight:bold;">SampleScene*</div>
<svg style="left:1459px;top:172px;" width="6" height="18" viewBox="0 0 6 18"><rect x="1" y="1" width="4" height="3.6" rx="1.2" fill="#c4c4c4"/><rect x="1" y="7.2" width="4" height="3.6" rx="1.2" fill="#c4c4c4"/><rect x="1" y="13.4" width="4" height="3.6" rx="1.2" fill="#c4c4c4"/></svg>
<svg style="left:1145px;top:193px;" width="21" height="21" viewBox="0 0 21 21"><g fill="none" stroke="#c8c8c8" stroke-width="1.4" stroke-linejoin="round"><path d="M10.5 1.5 L19 5.5 V15.5 L10.5 19.5 L2 15.5 V5.5 Z"/><path d="M2 5.5 L10.5 9.5 L19 5.5 M10.5 9.5 V19.5"/></g></svg>
<div class="t" style="left:1171.7px;top:194.76px;font-size:18px;line-height:18px;color:#c4c4c4;letter-spacing:0.634px;">Main Camera</div>
<svg style="left:1145px;top:217px;" width="21" height="21" viewBox="0 0 21 21"><g fill="none" stroke="#c8c8c8" stroke-width="1.4" stroke-linejoin="round"><path d="M10.5 1.5 L19 5.5 V15.5 L10.5 19.5 L2 15.5 V5.5 Z"/><path d="M2 5.5 L10.5 9.5 L19 5.5 M10.5 9.5 V19.5"/></g></svg>
<div class="t" style="left:1171.7px;top:218.76px;font-size:18px;line-height:18px;color:#c4c4c4;letter-spacing:0.879px;">Directional Light</div>
<svg style="left:1145px;top:241px;" width="21" height="21" viewBox="0 0 21 21"><g fill="none" stroke="#c8c8c8" stroke-width="1.4" stroke-linejoin="round"><path d="M10.5 1.5 L19 5.5 V15.5 L10.5 19.5 L2 15.5 V5.5 Z"/><path d="M2 5.5 L10.5 9.5 L19 5.5 M10.5 9.5 V19.5"/></g></svg>
<div class="t" style="left:1171.7px;top:242.76px;font-size:18px;line-height:18px;color:#c4c4c4;letter-spacing:0.495px;">Ground</div>
<div style="left:1483px;top:109px;width:489px;height:29px;background-color:#292929;background-image:radial-gradient(circle at 1px 1px,#212121 0.6px,transparent 0.9px);background-size:3px 3px;"></div>
<div style="left:1483px;top:109px;width:123px;height:29px;background:#3c3c3c;border-radius:5px 5px 0 0;"></div>
<svg style="left:1494px;top:116px;" width="20" height="16" viewBox="0 0 20 16"><path d="M1 1 H8 L10 3 H19 V15 H1 Z" fill="#d2d2d2"/></svg>
<div class="t" style="left:1519px;top:115.76px;font-size:18px;line-height:18px;color:#d2d2d2;letter-spacing:0.997px;">Project</div>
<svg style="left:1920px;top:115px;" width="14" height="16" viewBox="0 0 14 16"><path d="M11.5 8.5 V5 C11.5 2.5 10 1.2 8 1.2 C6.2 1.2 4.8 2.2 3.6 3.6" stroke="#c8c8c8" stroke-width="2" fill="none"/><rect x="1.5" y="8.5" width="11" height="6" fill="none" stroke="#c8c8c8" stroke-width="2"/></svg>
<svg style="left:1950px;top:114px;" width="6" height="18" viewBox="0 0 6 18"><rect x="1" y="1" width="4" height="3.6" rx="1.2" fill="#c4c4c4"/><rect x="1" y="7.2" width="4" height="3.6" rx="1.2" fill="#c4c4c4"/><rect x="1" y="13.4" width="4" height="3.6" rx="1.2" fill="#c4c4c4"/></svg>
<div style="left:1483px;top:138px;width:489px;height:30px;background:#3c3c3c;"></div>
<svg style="left:1492px;top:144px;" width="36" height="18" viewBox="0 0 36 18"><path d="M10 1 V17 M1 9 H19" stroke="#c4c4c4" stroke-width="1.8"/><path d="M25 6 L35 6 L30 12 Z" fill="#c4c4c4"/></svg>
<div style="left:1551px;top:141px;width:240px;height:24px;background:#2a2a2a;border-radius:6px;box-shadow:inset 0 1px 0 #1a1a1a;"></div>
<svg style="left:1558px;top:146px;" width="14" height="14" viewBox="0 0 14 14"><circle cx="6" cy="6" r="3.6" fill="none" stroke="#c4c4c4" stroke-width="1.6"/><path d="M8.5 8.5 L12 12" stroke="#c4c4c4" stroke-width="2"/></svg>
<div style="left:1794px;top:138px;width:1px;height:30px;background:#232323;"></div>
<div style="left:1833px;top:138px;width:1px;height:30px;background:#232323;"></div>
<div style="left:1872px;top:138px;width:1px;height:30px;background:#232323;"></div>
<div style="left:1911px;top:138px;width:1px;height:30px;background:#232323;"></div>
<svg style="left:1802px;top:142px;" width="22" height="22" viewBox="0 0 22 22"><rect x="3" y="1" width="8" height="8" fill="#c4c4c4"/><path d="M14 5 L20 15 H10.5 Z" fill="#c4c4c4"/><circle cx="6" cy="15.5" r="5.8" fill="#3c3c3c"/><circle cx="6" cy="15.5" r="5" fill="#c4c4c4"/></svg>
<svg style="left:1841px;top:144px;" width="20" height="18" viewBox="0 0 20 18"><path d="M10 1 H18 V9 L9 17 L2 10 Z" fill="#c4c4c4"/><circle cx="14.5" cy="4.5" r="1.6" fill="#3c3c3c"/></svg>
<svg style="left:1880px;top:144px;" width="22" height="20" viewBox="0 0 22 20"><path d="M11 1.5 L13.4 7.6 L19.8 7.9 L14.8 11.8 L16.6 18 L11 14.5 L5.4 18 L7.2 11.8 L2.2 7.9 L8.6 7.6 Z" fill="#8a8a8a"/></svg>
<svg style="left:1918px;top:143px;" width="24" height="20" viewBox="0 0 24 20"><path d="M2 10 C6 4 17 4 21 10 C17 16 6 16 2 10 Z" fill="none" stroke="#c4c4c4" stroke-width="1.5"/><circle cx="11.5" cy="10" r="3" fill="none" stroke="#c4c4c4" stroke-width="1.5"/><path d="M4 17 L19 2" stroke="#3c3c3c" stroke-width="3.5"/><path d="M4 17 L19 2" stroke="#c4c4c4" stroke-width="1.6"/></svg>
<div class="t" style="left:1942px;top:144.76px;font-size:18px;line-height:18px;color:#c4c4c4;letter-spacing:-0.010px;">10</div>
<div style="left:1483px;top:168px;width:164px;height:1179px;background:#383838;"></div>
<div style="left:1647px;top:168px;width:2px;height:1179px;background:#232323;"></div>
<div style="left:1649px;top:168px;width:323px;height:32px;background:#3c3c3c;"></div>
<div style="left:1649px;top:200px;width:323px;height:1117px;background:#333333;"></div>
<svg style="left:1489px;top:176px;" width="14" height="12" viewBox="0 0 14 12"><path d="M1 1 L13 1 L7 11 Z" fill="#8a8a8a"/></svg>
<svg style="left:1509px;top:171px;" width="20" height="19" viewBox="0 0 20 19"><path d="M10 1 L12.6 7 L19 7.3 L14 11.5 L15.8 18 L10 14.3 L4.2 18 L6 11.5 L1 7.3 L7.4 7 Z" fill="#ffc107"/></svg>
<div class="t" style="left:1536px;top:170.76px;font-size:18px;line-height:18px;color:#d2d2d2;letter-spacing:0.553px;font-weight:bold;">Favorites</div>
<div style="left:1483px;top:190px;width:164px;height:80px;overflow:hidden;">
</div>
<svg style="left:1530px;top:194px;" width="20" height="20" viewBox="0 0 20 20"><circle cx="8" cy="8" r="6" fill="none" stroke="#c4c4c4" stroke-width="1.6"/><path d="M12.5 12.5 L17 17" stroke="#c4c4c4" stroke-width="2.2"/></svg>
<svg style="left:1530px;top:218px;" width="20" height="20" viewBox="0 0 20 20"><circle cx="8" cy="8" r="6" fill="none" stroke="#c4c4c4" stroke-width="1.6"/><path d="M12.5 12.5 L17 17" stroke="#c4c4c4" stroke-width="2.2"/></svg>
<svg style="left:1530px;top:242px;" width="20" height="20" viewBox="0 0 20 20"><circle cx="8" cy="8" r="6" fill="none" stroke="#c4c4c4" stroke-width="1.6"/><path d="M12.5 12.5 L17 17" stroke="#c4c4c4" stroke-width="2.2"/></svg>
<div class="t" style="left:1555.7px;top:194.76px;font-size:18px;line-height:18px;color:#c4c4c4;letter-spacing:1.383px;clip-path:inset(0 25px 0 0);">All Materials</div>
<div class="t" style="left:1555.7px;top:218.76px;font-size:18px;line-height:18px;color:#c4c4c4;letter-spacing:0.697px;clip-path:inset(0 0px 0 0);">All Models</div>
<div class="t" style="left:1555.7px;top:242.76px;font-size:18px;line-height:18px;color:#c4c4c4;letter-spacing:0.451px;clip-path:inset(0 1px 0 0);">All Prefabs</div>
<svg style="left:1489px;top:294px;" width="14" height="12" viewBox="0 0 14 12"><path d="M1 1 L13 1 L7 11 Z" fill="#8a8a8a"/></svg>
<svg style="left:1508px;top:290px;" width="24" height="18" viewBox="0 0 24 18"><path d="M1 2 H8 L10 4 H18 V7 H6 L2 16 H1 Z" fill="#c4c4c4"/><path d="M6 8 H23 L19 17 H2 Z" fill="#c4c4c4"/></svg>
<div class="t" style="left:1536px;top:289.06px;font-size:18px;line-height:18px;color:#d2d2d2;letter-spacing:0.928px;font-weight:bold;">Assets</div>
<div style="left:1483px;top:311px;width:164px;height:25px;background:#4a4a4a;"></div>
<svg style="left:1530px;top:315px;" width="20" height="16" viewBox="0 0 20 16"><path d="M1 1 H8 L10 3 H19 V15 H1 Z" fill="#c4c4c4"/></svg>
<div class="t" style="left:1555.7px;top:313.36px;font-size:18px;line-height:18px;color:#c4c4c4;letter-spacing:0.776px;">Materials</div>
<svg style="left:1530px;top:340px;" width="20" height="16" viewBox="0 0 20 16"><path d="M1 1 H8 L10 3 H19 V15 H1 Z" fill="#c4c4c4"/></svg>
<div class="t" style="left:1555.7px;top:337.56px;font-size:18px;line-height:18px;color:#c4c4c4;letter-spacing:0.161px;">Scenes</div>
<svg style="left:1490px;top:364px;" width="12" height="14" viewBox="0 0 12 14"><path d="M1 1 L11 7 L1 13 Z" fill="#8a8a8a"/></svg>
<svg style="left:1509px;top:364px;" width="20" height="16" viewBox="0 0 20 16"><path d="M1 1 H8 L10 3 H19 V15 H1 Z" fill="#c4c4c4"/></svg>
<div class="t" style="left:1536px;top:361.96px;font-size:18px;line-height:18px;color:#d2d2d2;letter-spacing:0.693px;font-weight:bold;">Packages</div>
<div class="t" style="left:1656.5px;top:174.76px;font-size:18px;line-height:18px;color:#c4c4c4;letter-spacing:0.164px;">Assets</div>
<svg style="left:1720px;top:177px;" width="12" height="16" viewBox="0 0 12 16"><path d="M2 2 L9 8 L2 14" stroke="#8a8a8a" stroke-width="1.8" fill="none"/></svg>
<div class="t" style="left:1739px;top:174.76px;font-size:18px;line-height:18px;color:#d2d2d2;letter-spacing:0.841px;font-weight:bold;">Materials</div>
<div style="left:1675px;top:219px;width:91px;height:90px;background:#444a56;box-shadow:0 0 0 1px #2a2a2a;"></div>
<svg style="left:1675px;top:219px;" width="91" height="90" viewBox="0 0 91 90"><defs><radialGradient id="ms" cx="0.38" cy="0.33" r="0.75" fx="0.34" fy="0.3"><stop offset="0" stop-color="#aebcd4"/><stop offset="0.1" stop-color="#8494ac"/><stop offset="0.4" stop-color="#646f84"/><stop offset="0.72" stop-color="#40454f"/><stop offset="0.9" stop-color="#26282c"/><stop offset="1" stop-color="#3a404c"/></radialGradient></defs><circle cx="45.5" cy="44.5" r="41" fill="url(#ms)"/></svg>
<div style="left:1689px;top:313px;width:62px;height:21px;background:#4a4a4a;border-radius:4px;"></div>
<div class="t" style="left:1692px;top:316.30px;font-size:15px;line-height:15px;color:#c4c4c4;letter-spacing:0.829px;">Ground</div>
<div style="left:1649px;top:1317px;width:323px;height:30px;background:#3e3e3e;border-top:1px solid #2a2a2a;height:29px;"></div>
<svg style="left:1654px;top:1321px;" width="22" height="22" viewBox="0 0 22 22"><circle cx="11" cy="11" r="9" fill="none" stroke="#5ab4f0" stroke-width="1.8"/><circle cx="9.5" cy="9.5" r="6.5" fill="#9fd8ff"/></svg>
<div class="t" style="left:1679px;top:1323.76px;font-size:18px;line-height:18px;color:#c4c4c4;letter-spacing:0.748px;clip-path:inset(0 0 0 0);">Assets/Materials/Gro</div>
<div style="left:1866px;top:1331px;width:82px;height:2px;background:#5a5a5a;"></div>
<svg style="left:1905px;top:1324px;" width="16" height="16" viewBox="0 0 16 16"><circle cx="8" cy="8" r="7" fill="#a4a4a4"/></svg>
<div style="left:1975px;top:109px;width:585px;height:29px;background-color:#292929;background-image:radial-gradient(circle at 1px 1px,#212121 0.6px,transparent 0.9px);background-size:3px 3px;"></div>
<div style="left:1975px;top:109px;width:140px;height:29px;background:#3c3c3c;border-radius:5px 5px 0 0;"></div>
<div style="left:1975px;top:109px;width:140px;height:2px;background:#3a79bb;border-radius:5px 5px 0 0;"></div>
<svg style="left:1988px;top:116px;" width="18" height="18" viewBox="0 0 18 18"><circle cx="9" cy="9" r="8" fill="#d2d2d2"/><rect x="7.5" y="7.5" width="3" height="7" fill="#3c3c3c"/><circle cx="9" cy="4.8" r="1.6" fill="#3c3c3c"/></svg>
<div class="t" style="left:2011px;top:115.76px;font-size:18px;line-height:18px;color:#d2d2d2;letter-spacing:0.774px;">Inspector</div>
<svg style="left:2505px;top:115px;" width="14" height="16" viewBox="0 0 14 16"><path d="M11.5 8.5 V5 C11.5 2.5 10 1.2 8 1.2 C6.2 1.2 4.8 2.2 3.6 3.6" stroke="#c8c8c8" stroke-width="2" fill="none"/><rect x="1.5" y="8.5" width="11" height="6" fill="none" stroke="#c8c8c8" stroke-width="2"/></svg>
<svg style="left:2535px;top:114px;" width="6" height="18" viewBox="0 0 6 18"><rect x="1" y="1" width="4" height="3.6" rx="1.2" fill="#c4c4c4"/><rect x="1" y="7.2" width="4" height="3.6" rx="1.2" fill="#c4c4c4"/><rect x="1" y="13.4" width="4" height="3.6" rx="1.2" fill="#c4c4c4"/></svg>
<div style="left:1975px;top:138px;width:585px;height:82px;background:#3e3e3e;"></div>
<div style="left:1975px;top:220px;width:585px;height:1px;background:#242424;"></div>
<div style="left:1975px;top:221px;width:585px;height:1094px;background:#383838;"></div>
<svg style="left:1984px;top:146px;" width="50" height="50" viewBox="0 0 50 50"><defs><radialGradient id="is" cx="0.3" cy="0.28" r="0.85"><stop offset="0" stop-color="#c4cbd6"/><stop offset="0.12" stop-color="#8e949e"/><stop offset="0.5" stop-color="#5c6068"/><stop offset="1" stop-color="#2a2c30"/></radialGradient></defs><circle cx="25" cy="24" r="22" fill="url(#is)"/></svg>
<div class="t" style="left:2045.4px;top:150.16px;font-size:18px;line-height:18px;color:#b8b8b8;letter-spacing:1.604px;">Ground (Material)</div>
<svg style="left:2491px;top:148px;" width="18" height="18" viewBox="0 0 18 18"><circle cx="9" cy="9" r="8" fill="#d2d2d2"/><text x="9" y="13.5" text-anchor="middle" font-family="Liberation Sans" font-weight="bold" font-size="12" fill="#3e3e3e">?</text></svg>
<svg style="left:2515px;top:148px;" width="20" height="18" viewBox="0 0 20 18"><path d="M1 5 H19 M1 13 H19 M13 1 V9 M7 9 V17" stroke="#c4c4c4" stroke-width="1.6"/></svg>
<svg style="left:2544px;top:149px;" width="6" height="18" viewBox="0 0 6 18"><rect x="1" y="1" width="4" height="3.6" rx="1.2" fill="#c4c4c4"/><rect x="1" y="7.2" width="4" height="3.6" rx="1.2" fill="#c4c4c4"/><rect x="1" y="13.4" width="4" height="3.6" rx="1.2" fill="#c4c4c4"/></svg>
<div class="t" style="left:2041px;top:185.06px;font-size:18px;line-height:18px;color:#c4c4c4;letter-spacing:0.827px;">Shader</div>
<div style="left:2118.5px;top:181px;width:359.5px;height:25px;background:#515151;border-radius:4px;box-shadow:inset 0 1px 0 #2e2e2e, 0 1px 0 #2a2a2a;"></div>
<div class="t" style="left:2123px;top:185.26px;font-size:18px;line-height:18px;color:#d2d2d2;letter-spacing:0.369px;">Standard</div>
<svg style="left:2458px;top:190.5px;" width="12" height="8" viewBox="0 0 12 8"><path d="M0 1 L12 1 L6 7 Z" fill="#c4c4c4"/></svg>
<div style="left:2484px;top:181px;width:68px;height:25px;background:#515151;border-radius:4px;box-shadow:inset 0 1px 0 #2e2e2e, 0 1px 0 #2a2a2a;"></div>
<div class="t" style="left:2494px;top:185.26px;font-size:18px;line-height:18px;color:#d2d2d2;letter-spacing:0.283px;">Edit...</div>
<div class="t" style="left:2004px;top:235.56px;font-size:18px;line-height:18px;color:#c4c4c4;letter-spacing:0.709px;">Rendering Mode</div>
<div style="left:2211px;top:232px;width:341px;height:25px;background:#515151;border-radius:4px;box-shadow:inset 0 1px 0 #2e2e2e, 0 1px 0 #2a2a2a;"></div>
<div class="t" style="left:2216px;top:235.76px;font-size:18px;line-height:18px;color:#d2d2d2;letter-spacing:0.325px;">Opaque</div>
<svg style="left:2532px;top:241.5px;" width="12" height="8" viewBox="0 0 12 8"><path d="M0 1 L12 1 L6 7 Z" fill="#c4c4c4"/></svg>
<div class="t" style="left:2004px;top:262.76px;font-size:18px;line-height:18px;color:#d2d2d2;letter-spacing:0.666px;font-weight:bold;">Main Maps</div>
<div style="left:2004px;top:285px;width:25px;height:25px;background:#343434;background-image:repeating-conic-gradient(#363636 0 25%,#313131 0 50%);background-size:4px 4px;"></div>
<div style="left:2004px;top:285px;width:25px;height:1px;background:transparent;border-top:1px dashed #262626;height:0;"></div>
<svg style="left:2036px;top:288px;" width="13" height="13" viewBox="0 0 13 13"><circle cx="6.5" cy="6.5" r="5" fill="none" stroke="#c4c4c4" stroke-width="1.3" stroke-dasharray="2 1.2"/><circle cx="6.5" cy="6.5" r="1" fill="#c4c4c4"/></svg>
<div class="t" style="left:2050px;top:291.76px;font-size:18px;line-height:18px;color:#c4c4c4;letter-spacing:0.493px;">Albedo</div>
<div style="left:2207px;top:285px;width:74px;height:26px;background:#2a2a2a;border:2px solid #3a79bb;border-radius:4px;box-sizing:border-box;"></div>
<div style="left:2209px;top:287px;width:45px;height:16px;background:#7a7a7a;"></div>
<div style="left:2209px;top:303px;width:45px;height:6px;background:#ffffff;"></div>
<svg style="left:2258px;top:289px;" width="20" height="18" viewBox="0 0 20 18"><path d="M3 16 L11 8 L13 10 L5 18 Z M11 5 L15 9 L17 7 A2.5 2.5 0 0 0 13 3 Z" fill="#d0d0d0"/></svg>
<div style="left:2004px;top:318px;width:25px;height:25px;background:#343434;background-image:repeating-conic-gradient(#363636 0 25%,#313131 0 50%);background-size:4px 4px;"></div>
<div style="left:2004px;top:318px;width:25px;height:1px;background:transparent;border-top:1px dashed #262626;height:0;"></div>
<svg style="left:2036px;top:321px;" width="13" height="13" viewBox="0 0 13 13"><circle cx="6.5" cy="6.5" r="5" fill="none" stroke="#c4c4c4" stroke-width="1.3" stroke-dasharray="2 1.2"/><circle cx="6.5" cy="6.5" r="1" fill="#c4c4c4"/></svg>
<div class="t" style="left:2050px;top:324.76px;font-size:18px;line-height:18px;color:#c4c4c4;letter-spacing:1.499px;">Metallic</div>
<div style="left:2210px;top:330px;width:262px;height:3px;background:#5e5e5e;border-radius:1px;"></div>
<svg style="left:2207px;top:323px;" width="17" height="17" viewBox="0 0 17 17"><circle cx="8.5" cy="8.5" r="7.5" fill="#a4a4a4"/></svg>
<div style="left:2479px;top:319px;width:73px;height:25px;background:#2a2a2a;border-radius:4px;box-shadow:inset 0 1px 0 #1c1c1c;"></div>
<div class="t" style="left:2484px;top:322.76px;font-size:18px;line-height:18px;color:#d2d2d2;letter-spacing:-0.010px;">0</div>
<div class="t" style="left:2049px;top:355.76px;font-size:18px;line-height:18px;color:#c4c4c4;letter-spacing:0.595px;">Smoothness</div>
<div style="left:2210px;top:363px;width:262px;height:3px;background:#5e5e5e;border-radius:1px;"></div>
<svg style="left:2332px;top:356px;" width="17" height="17" viewBox="0 0 17 17"><circle cx="8.5" cy="8.5" r="7.5" fill="#a4a4a4"/></svg>
<div style="left:2479px;top:352px;width:73px;height:25px;background:#2a2a2a;border-radius:4px;box-shadow:inset 0 1px 0 #1c1c1c;"></div>
<div class="t" style="left:2484px;top:355.76px;font-size:18px;line-height:18px;color:#d2d2d2;letter-spacing:0.993px;">0.5</div>
<div class="t" style="left:2072px;top:385.76px;font-size:18px;line-height:18px;color:#c4c4c4;letter-spacing:0.662px;">Source</div>
<div style="left:2211px;top:382px;width:341px;height:25px;background:#515151;border-radius:4px;box-shadow:inset 0 1px 0 #2e2e2e, 0 1px 0 #2a2a2a;"></div>
<div class="t" style="left:2216px;top:385.76px;font-size:18px;line-height:18px;color:#d2d2d2;letter-spacing:0.853px;">Metallic Alpha</div>
<svg style="left:2532px;top:391.5px;" width="12" height="8" viewBox="0 0 12 8"><path d="M0 1 L12 1 L6 7 Z" fill="#c4c4c4"/></svg>
<div style="left:2004px;top:411px;width:25px;height:25px;background:#343434;background-image:repeating-conic-gradient(#363636 0 25%,#313131 0 50%);background-size:4px 4px;"></div>
<div style="left:2004px;top:411px;width:25px;height:1px;background:transparent;border-top:1px dashed #262626;height:0;"></div>
<svg style="left:2036px;top:414px;" width="13" height="13" viewBox="0 0 13 13"><circle cx="6.5" cy="6.5" r="5" fill="none" stroke="#c4c4c4" stroke-width="1.3" stroke-dasharray="2 1.2"/><circle cx="6.5" cy="6.5" r="1" fill="#c4c4c4"/></svg>
<div class="t" style="left:2050px;top:417.76px;font-size:18px;line-height:18px;color:#c4c4c4;letter-spacing:0.698px;">Normal Map</div>
<div style="left:2004px;top:444px;width:25px;height:25px;background:#343434;background-image:repeating-conic-gradient(#363636 0 25%,#313131 0 50%);background-size:4px 4px;"></div>
<div style="left:2004px;top:444px;width:25px;height:1px;background:transparent;border-top:1px dashed #262626;height:0;"></div>
<svg style="left:2036px;top:447px;" width="13" height="13" viewBox="0 0 13 13"><circle cx="6.5" cy="6.5" r="5" fill="none" stroke="#c4c4c4" stroke-width="1.3" stroke-dasharray="2 1.2"/><circle cx="6.5" cy="6.5" r="1" fill="#c4c4c4"/></svg>
<div class="t" style="left:2050px;top:450.76px;font-size:18px;line-height:18px;color:#c4c4c4;letter-spacing:0.596px;">Height Map</div>
<div style="left:2004px;top:477px;width:25px;height:25px;background:#343434;background-image:repeating-conic-gradient(#363636 0 25%,#313131 0 50%);background-size:4px 4px;"></div>
<div style="left:2004px;top:477px;width:25px;height:1px;background:transparent;border-top:1px dashed #262626;height:0;"></div>
<svg style="left:2036px;top:480px;" width="13" height="13" viewBox="0 0 13 13"><circle cx="6.5" cy="6.5" r="5" fill="none" stroke="#c4c4c4" stroke-width="1.3" stroke-dasharray="2 1.2"/><circle cx="6.5" cy="6.5" r="1" fill="#c4c4c4"/></svg>
<div class="t" style="left:2050px;top:483.76px;font-size:18px;line-height:18px;color:#c4c4c4;letter-spacing:0.886px;">Occlusion</div>
<div style="left:2004px;top:510px;width:25px;height:25px;background:#343434;background-image:repeating-conic-gradient(#363636 0 25%,#313131 0 50%);background-size:4px 4px;"></div>
<div style="left:2004px;top:510px;width:25px;height:1px;background:transparent;border-top:1px dashed #262626;height:0;"></div>
<svg style="left:2036px;top:513px;" width="13" height="13" viewBox="0 0 13 13"><circle cx="6.5" cy="6.5" r="5" fill="none" stroke="#c4c4c4" stroke-width="1.3" stroke-dasharray="2 1.2"/><circle cx="6.5" cy="6.5" r="1" fill="#c4c4c4"/></svg>
<div class="t" style="left:2050px;top:516.76px;font-size:18px;line-height:18px;color:#c4c4c4;letter-spacing:0.634px;">Detail Mask</div>
<div class="t" style="left:2004px;top:547.76px;font-size:18px;line-height:18px;color:#c4c4c4;letter-spacing:0.248px;">Emission</div>
<div style="left:2210px;top:546px;width:21px;height:21px;background:#2a2a2a;border-radius:3px;box-shadow:inset 0 0 0 1px #1e1e1e;"></div>
<div class="t" style="left:2004px;top:577.76px;font-size:18px;line-height:18px;color:#c4c4c4;letter-spacing:0.943px;">Tiling</div>
<div class="t" style="left:2208px;top:577.76px;font-size:18px;line-height:18px;color:#c4c4c4;letter-spacing:-1.007px;">X</div>
<div style="left:2225px;top:573px;width:152px;height:26px;background:#2a2a2a;border-radius:4px;box-shadow:inset 0 1px 0 #1c1c1c;"></div>
<div class="t" style="left:2230px;top:577.76px;font-size:18px;line-height:18px;color:#d2d2d2;letter-spacing:-0.010px;">1</div>
<div class="t" style="left:2385px;top:577.76px;font-size:18px;line-height:18px;color:#c4c4c4;letter-spacing:-1.007px;">Y</div>
<div style="left:2401px;top:573px;width:151px;height:26px;background:#2a2a2a;border-radius:4px;box-shadow:inset 0 1px 0 #1c1c1c;"></div>
<div class="t" style="left:2406px;top:577.76px;font-size:18px;line-height:18px;color:#d2d2d2;letter-spacing:-0.010px;">1</div>
<div class="t" style="left:2004px;top:607.76px;font-size:18px;line-height:18px;color:#c4c4c4;letter-spacing:0.719px;">Offset</div>
<div class="t" style="left:2208px;top:607.76px;font-size:18px;line-height:18px;color:#c4c4c4;letter-spacing:-1.007px;">X</div>
<div style="left:2225px;top:603px;width:152px;height:26px;background:#2a2a2a;border-radius:4px;box-shadow:inset 0 1px 0 #1c1c1c;"></div>
<div class="t" style="left:2230px;top:607.76px;font-size:18px;line-height:18px;color:#d2d2d2;letter-spacing:-0.010px;">0</div>
<div class="t" style="left:2385px;top:607.76px;font-size:18px;line-height:18px;color:#c4c4c4;letter-spacing:-1.007px;">Y</div>
<div style="left:2401px;top:603px;width:151px;height:26px;background:#2a2a2a;border-radius:4px;box-shadow:inset 0 1px 0 #1c1c1c;"></div>
<div class="t" style="left:2406px;top:607.76px;font-size:18px;line-height:18px;color:#d2d2d2;letter-spacing:-0.010px;">0</div>
<div class="t" style="left:2004px;top:649.76px;font-size:18px;line-height:18px;color:#d2d2d2;letter-spacing:0.711px;font-weight:bold;">Secondary Maps</div>
<div style="left:2004px;top:672px;width:25px;height:25px;background:#343434;background-image:repeating-conic-gradient(#363636 0 25%,#313131 0 50%);background-size:4px 4px;"></div>
<div style="left:2004px;top:672px;width:25px;height:1px;background:transparent;border-top:1px dashed #262626;height:0;"></div>
<svg style="left:2036px;top:675px;" width="13" height="13" viewBox="0 0 13 13"><circle cx="6.5" cy="6.5" r="5" fill="none" stroke="#c4c4c4" stroke-width="1.3" stroke-dasharray="2 1.2"/><circle cx="6.5" cy="6.5" r="1" fill="#c4c4c4"/></svg>
<div class="t" style="left:2050px;top:678.76px;font-size:18px;line-height:18px;color:#c4c4c4;letter-spacing:0.745px;">Detail Albedo x2</div>
<div style="left:2004px;top:705px;width:25px;height:25px;background:#343434;background-image:repeating-conic-gradient(#363636 0 25%,#313131 0 50%);background-size:4px 4px;"></div>
<div style="left:2004px;top:705px;width:25px;height:1px;background:transparent;border-top:1px dashed #262626;height:0;"></div>
<svg style="left:2036px;top:708px;" width="13" height="13" viewBox="0 0 13 13"><circle cx="6.5" cy="6.5" r="5" fill="none" stroke="#c4c4c4" stroke-width="1.3" stroke-dasharray="2 1.2"/><circle cx="6.5" cy="6.5" r="1" fill="#c4c4c4"/></svg>
<div class="t" style="left:2050px;top:711.76px;font-size:18px;line-height:18px;color:#c4c4c4;letter-spacing:0.698px;">Normal Map</div>
<div style="left:2481px;top:706px;width:71px;height:26px;background:#2a2a2a;border-radius:4px;box-shadow:inset 0 1px 0 #1c1c1c;"></div>
<div class="t" style="left:2486px;top:710.76px;font-size:18px;line-height:18px;color:#d2d2d2;letter-spacing:-0.010px;">1</div>
<div class="t" style="left:2004px;top:742.76px;font-size:18px;line-height:18px;color:#c4c4c4;letter-spacing:0.943px;">Tiling</div>
<div class="t" style="left:2208px;top:742.76px;font-size:18px;line-height:18px;color:#c4c4c4;letter-spacing:-1.007px;">X</div>
<div style="left:2225px;top:738px;width:152px;height:26px;background:#2a2a2a;border-radius:4px;box-shadow:inset 0 1px 0 #1c1c1c;"></div>
<div class="t" style="left:2230px;top:742.76px;font-size:18px;line-height:18px;color:#d2d2d2;letter-spacing:-0.010px;">1</div>
<div class="t" style="left:2385px;top:742.76px;font-size:18px;line-height:18px;color:#c4c4c4;letter-spacing:-1.007px;">Y</div>
<div style="left:2401px;top:738px;width:151px;height:26px;background:#2a2a2a;border-radius:4px;box-shadow:inset 0 1px 0 #1c1c1c;"></div>
<div class="t" style="left:2406px;top:742.76px;font-size:18px;line-height:18px;color:#d2d2d2;letter-spacing:-0.010px;">1</div>
<div class="t" style="left:2004px;top:772.76px;font-size:18px;line-height:18px;color:#c4c4c4;letter-spacing:0.719px;">Offset</div>
<div class="t" style="left:2208px;top:772.76px;font-size:18px;line-height:18px;color:#c4c4c4;letter-spacing:-1.007px;">X</div>
<div style="left:2225px;top:768px;width:152px;height:26px;background:#2a2a2a;border-radius:4px;box-shadow:inset 0 1px 0 #1c1c1c;"></div>
<div class="t" style="left:2230px;top:772.76px;font-size:18px;line-height:18px;color:#d2d2d2;letter-spacing:-0.010px;">0</div>
<div class="t" style="left:2385px;top:772.76px;font-size:18px;line-height:18px;color:#c4c4c4;letter-spacing:-1.007px;">Y</div>
<div style="left:2401px;top:768px;width:151px;height:26px;background:#2a2a2a;border-radius:4px;box-shadow:inset 0 1px 0 #1c1c1c;"></div>
<div class="t" style="left:2406px;top:772.76px;font-size:18px;line-height:18px;color:#d2d2d2;letter-spacing:-0.010px;">0</div>
<div class="t" style="left:2004px;top:805.76px;font-size:18px;line-height:18px;color:#c4c4c4;letter-spacing:0.496px;">UV Set</div>
<div style="left:2211px;top:802px;width:341px;height:25px;background:#515151;border-radius:4px;box-shadow:inset 0 1px 0 #2e2e2e, 0 1px 0 #2a2a2a;"></div>
<div class="t" style="left:2216px;top:805.76px;font-size:18px;line-height:18px;color:#d2d2d2;letter-spacing:0.661px;">UV0</div>
<svg style="left:2532px;top:811.5px;" width="12" height="8" viewBox="0 0 12 8"><path d="M0 1 L12 1 L6 7 Z" fill="#c4c4c4"/></svg>
<div class="t" style="left:2004px;top:832.76px;font-size:18px;line-height:18px;color:#d2d2d2;letter-spacing:0.440px;font-weight:bold;">Forward Rendering Options</div>
<div class="t" style="left:2004px;top:859.76px;font-size:18px;line-height:18px;color:#c4c4c4;letter-spacing:0.838px;">Specular Highlights</div>
<div style="left:2210px;top:858px;width:21px;height:21px;background:#2a2a2a;border-radius:3px;box-shadow:inset 0 0 0 1px #1e1e1e;"></div>
<svg style="left:2210px;top:858px;" width="21" height="21" viewBox="0 0 21 21"><path d="M5 11 L9 15 L16 6" stroke="#e8e8e8" stroke-width="2.2" fill="none"/></svg>
<div class="t" style="left:2004px;top:889.76px;font-size:18px;line-height:18px;color:#c4c4c4;letter-spacing:0.815px;">Reflections</div>
<div style="left:2210px;top:888px;width:21px;height:21px;background:#2a2a2a;border-radius:3px;box-shadow:inset 0 0 0 1px #1e1e1e;"></div>
<svg style="left:2210px;top:888px;" width="21" height="21" viewBox="0 0 21 21"><path d="M5 11 L9 15 L16 6" stroke="#e8e8e8" stroke-width="2.2" fill="none"/></svg>
<div class="t" style="left:2004px;top:928.76px;font-size:18px;line-height:18px;color:#d2d2d2;letter-spacing:0.625px;font-weight:bold;">Advanced Options</div>
<div class="t" style="left:2004px;top:955.76px;font-size:18px;line-height:18px;color:#c4c4c4;letter-spacing:0.244px;">Render Queue</div>
<div style="left:2306px;top:952px;width:145px;height:25px;background:#515151;border-radius:4px;box-shadow:inset 0 1px 0 #2e2e2e, 0 1px 0 #2a2a2a;"></div>
<div class="t" style="left:2312px;top:955.76px;font-size:18px;line-height:18px;color:#d2d2d2;letter-spacing:0.543px;">From Shader</div>
<svg style="left:2431px;top:961.5px;" width="12" height="8" viewBox="0 0 12 8"><path d="M0 1 L12 1 L6 7 Z" fill="#c4c4c4"/></svg>
<div style="left:2456px;top:952px;width:96px;height:25px;background:#2a2a2a;border-radius:4px;box-shadow:inset 0 1px 0 #1c1c1c;"></div>
<div class="t" style="left:2461px;top:955.76px;font-size:18px;line-height:18px;color:#d2d2d2;letter-spacing:0.990px;">2000</div>
<div class="t" style="left:2004px;top:988.76px;font-size:18px;line-height:18px;color:#c4c4c4;letter-spacing:0.567px;">Enable GPU Instancing</div>
<div style="left:2210px;top:988px;width:21px;height:21px;background:#2a2a2a;border-radius:3px;box-shadow:inset 0 0 0 1px #1e1e1e;"></div>
<div class="t" style="left:2004px;top:1021.76px;font-size:18px;line-height:18px;color:#c4c4c4;letter-spacing:0.691px;">Double Sided Global Ill</div>
<div style="left:2210px;top:1021px;width:21px;height:21px;background:#2a2a2a;border-radius:3px;box-shadow:inset 0 0 0 1px #1e1e1e;"></div>
<div style="left:1975px;top:1315px;width:585px;height:32px;background:#3c3c3c;border-top:1px solid #232323;height:31px;"></div>
<div class="t" style="left:1987px;top:1322.76px;font-size:18px;line-height:18px;color:#d2d2d2;letter-spacing:-0.164px;font-weight:bold;">Ground</div>
<div style="left:2061px;top:1326px;width:470px;height:1px;background:#5a5a5a;"></div>
<div style="left:2061px;top:1332px;width:470px;height:1px;background:#5a5a5a;"></div>
<div style="left:2535px;top:1316px;width:1px;height:31px;background:#2a2a2a;"></div>
<svg style="left:2544px;top:1322px;" width="6" height="18" viewBox="0 0 6 18"><rect x="1" y="1" width="4" height="3.6" rx="1.2" fill="#c4c4c4"/><rect x="1" y="7.2" width="4" height="3.6" rx="1.2" fill="#c4c4c4"/><rect x="1" y="13.4" width="4" height="3.6" rx="1.2" fill="#c4c4c4"/></svg>
<div style="left:0px;top:1347px;width:2560px;height:33px;background:#191919;"></div>
<div style="left:2402px;top:1350px;width:2px;height:30px;background:#222222;"></div>
<div style="left:2441px;top:1350px;width:2px;height:30px;background:#222222;"></div>
<div style="left:2480px;top:1350px;width:2px;height:30px;background:#222222;"></div>
<div style="left:2519px;top:1350px;width:2px;height:30px;background:#222222;"></div>
<svg style="left:2410px;top:1354px;" width="22" height="22" viewBox="0 0 22 22"><g fill="#c8c8c8"><ellipse cx="11" cy="13" rx="5.6" ry="7"/><circle cx="11" cy="6" r="3.4"/></g><g stroke="#c8c8c8" stroke-width="1.6" fill="none"><path d="M6 8.5 L3.5 6.5 V3.5 M16 8.5 L18.5 6.5 V3.5 M5.5 13.5 H2.8 L1.8 15.5 M16.5 13.5 H19.2 L20.2 15.5 M6.2 17.5 L3.8 19.5 V21.5 M15.8 17.5 L18.2 19.5 V21.5"/></g><path d="M1.5 1.5 L20.5 20.5" stroke="#191919" stroke-width="3.4"/><path d="M1.5 1.5 L20.5 20.5" stroke="#c8c8c8" stroke-width="1.5"/></svg>
<svg style="left:2449px;top:1354px;" width="22" height="22" viewBox="0 0 22 22"><g fill="#c8c8c8"><ellipse cx="11" cy="4.5" rx="8" ry="3.5"/><path d="M3 7.5 Q11 12.5 19 7.5 V11 Q11 16 3 11 Z M3 13 Q11 18 19 13 V16.5 Q11 21.5 3 16.5 Z"/></g><path d="M1.5 1 L20.5 21" stroke="#191919" stroke-width="3.4"/><path d="M1.5 1 L20.5 21" stroke="#c8c8c8" stroke-width="1.5"/></svg>
<svg style="left:2488px;top:1354px;" width="22" height="22" viewBox="0 0 22 22"><circle cx="11" cy="10" r="4.6" fill="#c8c8c8"/><rect x="9" y="14.5" width="4" height="2.5" rx="1" fill="#c8c8c8"/><g stroke="#c8c8c8" stroke-width="1.6" fill="none"><path d="M5 4.5 A8.5 8.5 0 0 0 5 18.5"/><path d="M17 4.5 A8.5 8.5 0 0 1 17 18.5"/></g><path d="M15.5 2 L19.5 2.5 L17 6 Z M6.5 21 L2.5 20.5 L5 17 Z" fill="#c8c8c8"/><path d="M1.5 1.5 L20.5 20.5" stroke="#191919" stroke-width="3.4"/><path d="M1.5 1.5 L20.5 20.5" stroke="#c8c8c8" stroke-width="1.5"/></svg>
<svg style="left:2527px;top:1354px;" width="22" height="22" viewBox="0 0 22 22"><circle cx="11" cy="11" r="9.6" fill="none" stroke="#c8c8c8" stroke-width="1.5"/><path d="M7 11.5 L10 14.5 L15.5 8.5" stroke="#c8c8c8" stroke-width="2" fill="none"/></svg>
</body></html>
